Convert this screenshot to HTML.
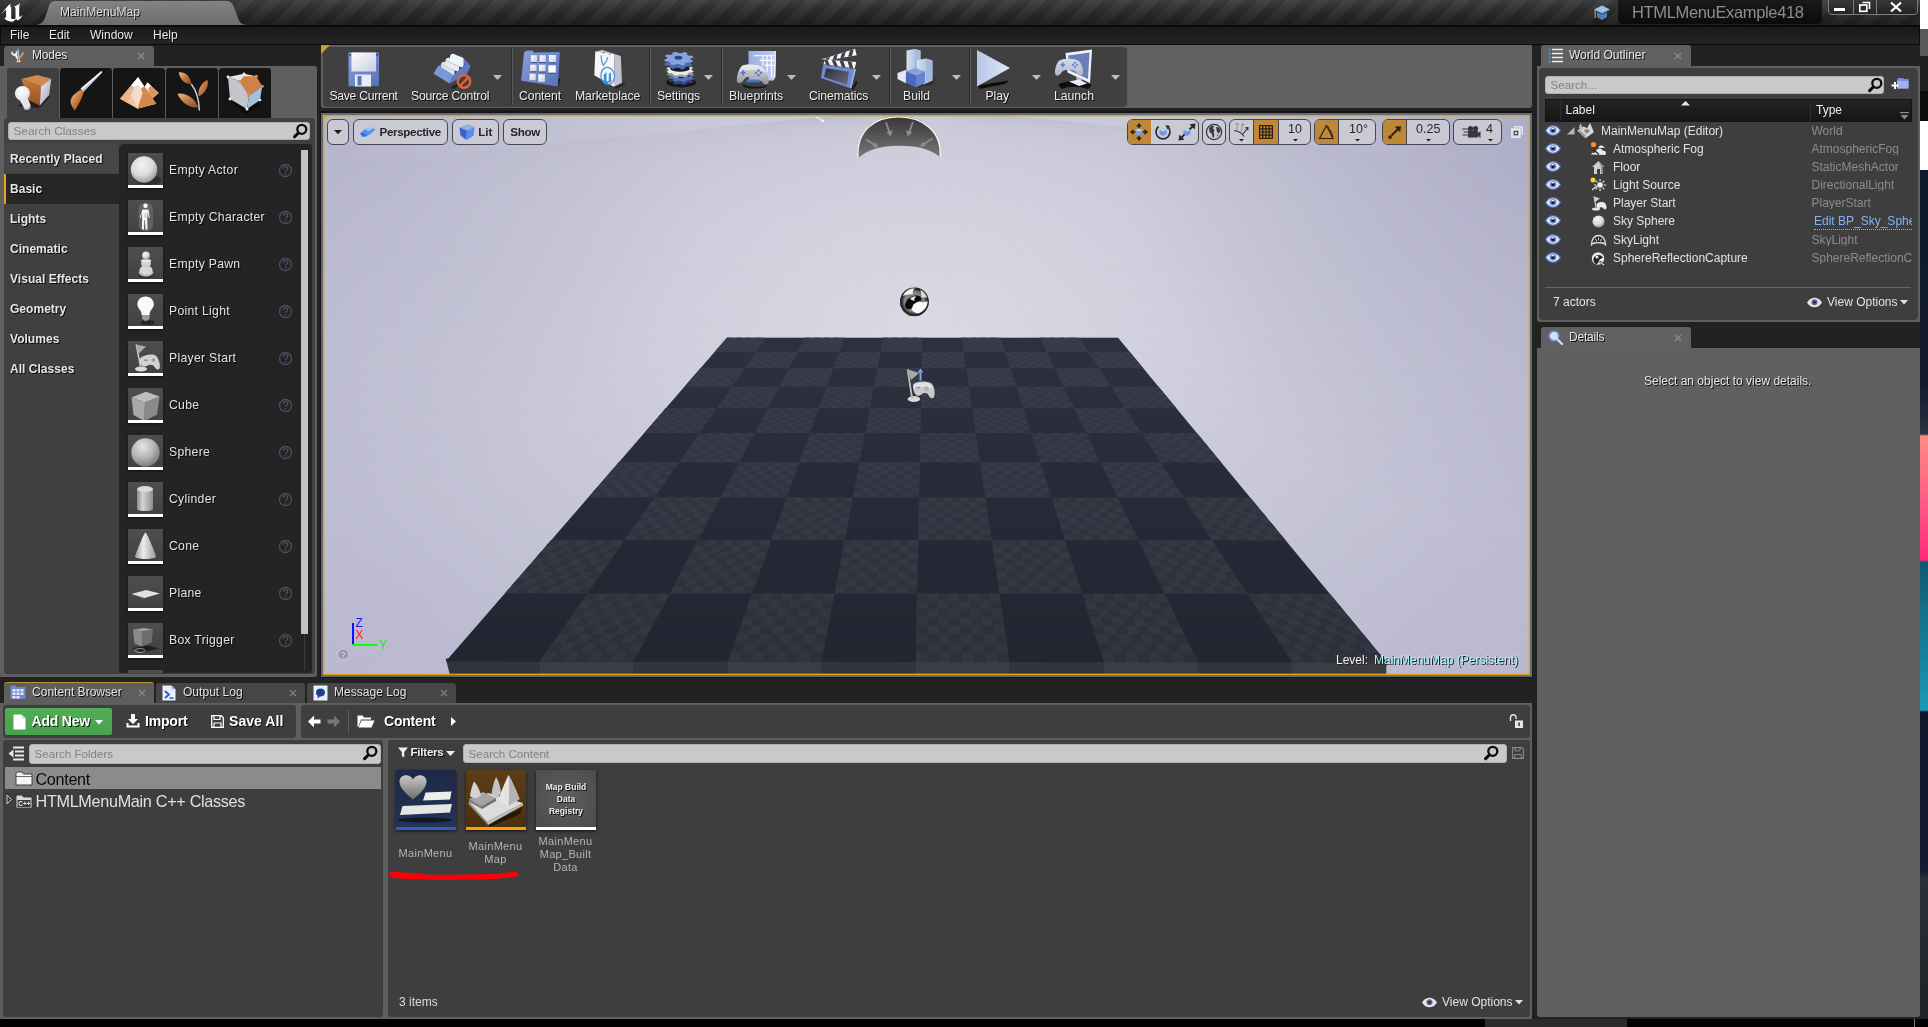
<!DOCTYPE html>
<html><head><meta charset="utf-8"><title>MainMenuMap - Unreal Editor</title>
<style>
*{box-sizing:border-box;margin:0;padding:0}
html,body{width:1928px;height:1027px;overflow:hidden;background:#000}
body{font-family:"Liberation Sans",sans-serif;font-size:12px;color:#e6e6e6;position:relative}
.a{position:absolute}
.t{position:absolute;white-space:nowrap;line-height:1}
.sh{text-shadow:1px 1px 0 rgba(0,0,0,.85)}
.b{font-weight:bold}
#win{will-change:transform;position:absolute;left:0;top:0;width:1920px;height:1019px;background:#222;overflow:hidden}
.tab{position:absolute;background:#5f5f5f;border-radius:3px 3px 0 0}
.tabi{position:absolute;background:#3c3c3c;border-radius:3px 3px 0 0}
.x{position:absolute;color:#8a8a8a;font-size:13px;line-height:1}
.srch{position:absolute;background:#c9c9c9;border-radius:3px;border:1px solid #b0b0b0}
.srch span{position:absolute;left:4.5px;top:1px;color:#818181;font-size:11.6px;line-height:14px;white-space:nowrap}
.eye{position:absolute}
</style></head><body>
<div id="win">
<!-- title bar -->
<div class="a" style="left:0;top:0;width:1920px;height:26px;background:repeating-linear-gradient(135deg,#2d2d2d 0,#2d2d2d 10px,#373737 10px,#373737 20px)"></div>
<div class="a" style="left:0;top:0;width:1920px;height:26px;background:linear-gradient(180deg,rgba(255,255,255,.07) 0,rgba(0,0,0,.05) 40%,rgba(0,0,0,.42) 100%)"></div>
<svg class="a" style="left:0;top:0" width="260" height="26" viewBox="0 0 260 26">
 <defs><linearGradient id="tg" x1="0" y1="0" x2="0" y2="1"><stop offset="0" stop-color="#838383"/><stop offset="1" stop-color="#6c6c6c"/></linearGradient></defs>
 <path d="M36 25 C42 24.500 44 21 46 15 L49 6 C50 2.500 52 1 56 1 L226 1 C230 1 232 2.500 233.500 6 L238 18 C239.500 22 241 24.500 247 25 Z" fill="url(#tg)"/>
 <!-- UE logo -->
 <g fill="#fff"><path d="M1 13.800C3.500 11.500 6.500 6.500 11 3.200 10.300 4.600 10 6 10.300 7 l.9-.5 V17.500c0 1.600 2.600 2.200 4.300 .9 V8.500 c0-1.300-.5-1.800-1.600-2.100 2.300-.6 4.200-1.500 6.300-3.400-.8 1.500-1 3-1 5 v8.200 c0 .7.700 .9 1.300 .4 l2-1.700 c-.9 2.300-2.600 4.300-4.800 5.500 l-1.700-1.300 -2.700 2.500 c-3.500 .3-7.500-1-8.800-3.200 l1.600-1.600 V10.800 c0-.8-.6-1-1.300-.6 C4 11.200 2.500 12.500 1 13.800z"/></g>
</svg>
<div class="t sh" style="left:60px;top:6px;font-size:12px;color:#dedede;letter-spacing:.05px">MainMenuMap</div>
<!-- project name -->
<div class="a" style="left:1618px;top:-4px;width:204px;height:28px;background:linear-gradient(180deg,#1b1b1b,#0b0b0b);border-radius:5px"></div>
<div class="t" style="left:1632px;top:3.5px;font-size:16.5px;color:#8e8e8e;letter-spacing:-.35px">HTMLMenuExample418</div>
<svg class="a" style="left:1592px;top:3px" width="20" height="18" viewBox="0 0 20 18"><path d="M2 6.5 L10 2.5 18 6.5 10 10.5Z" fill="#9fc3e8"/><path d="M5 9 v5 l5 3 5-3 v-5 l-5 2.5z" fill="#4f7fb8"/><path d="M10 10.5 L18 6.5 v1 L10 11.6 2 7.5v-1z" fill="#2f568a"/><rect x="2.6" y="7" width="1" height="8" fill="#e8a84a"/></svg>
<!-- window buttons -->
<div class="a" style="left:1828px;top:-3px;width:26px;height:18px;border:1px solid #7c7c7c;border-radius:0 0 0 4px;background:linear-gradient(180deg,#3a3a3a,#242424)"></div>
<div class="a" style="left:1853px;top:-3px;width:24px;height:18px;border:1px solid #7c7c7c;background:linear-gradient(180deg,#3a3a3a,#242424)"></div>
<div class="a" style="left:1876px;top:-3px;width:42px;height:18px;border:1px solid #7c7c7c;border-radius:0 0 4px 0;background:linear-gradient(180deg,#3a3a3a,#242424)"></div>
<div class="a" style="left:1834px;top:8px;width:11px;height:3px;background:#fff"></div>
<svg class="a" style="left:1858px;top:1px" width="14" height="12" viewBox="0 0 14 12"><path d="M4.5 1.5h7v6.5" fill="none" stroke="#fff" stroke-width="1.6"/><rect x="1.8" y="4" width="7" height="6.3" fill="none" stroke="#fff" stroke-width="1.7"/></svg>
<svg class="a" style="left:1889px;top:1px" width="14" height="12" viewBox="0 0 14 12"><path d="M2 1.5 L12 10.5 M12 1.5 L2 10.5" stroke="#fff" stroke-width="2.3"/></svg>
<!-- menu bar -->
<div class="a" style="left:0;top:25px;width:1920px;height:20px;background:#0a0a0a"></div>
<div class="a" style="left:1px;top:27px;width:1918px;height:17px;background:linear-gradient(180deg,#1a1a1a,#242424)"></div>
<div class="t sh" style="left:10px;top:29px;font-size:12px;color:#e8e8e8">File</div>
<div class="t sh" style="left:49px;top:29px;font-size:12px;color:#e8e8e8">Edit</div>
<div class="t sh" style="left:90px;top:29px;font-size:12px;color:#e8e8e8">Window</div>
<div class="t sh" style="left:153px;top:29px;font-size:12px;color:#e8e8e8">Help</div>
<!-- MODES PANEL -->
<div class="tab" style="left:4px;top:46px;width:150px;height:21px"></div>
<div class="a" style="left:0;top:66px;width:317px;height:611px;background:#5f5f5f;border-radius:0 3px 3px 0"></div>
<svg class="a" style="left:9px;top:47px" width="18" height="18" viewBox="0 0 18 18"><path d="M2 5.5c.5 2 2 3.5 4 3.5l4 6.5 1.6-1L8 8.5C9 6.500 8.500 4.500 7 3.500L6.500 6.500 4.500 7 3.500 4.500z" fill="#f2f2f2"/><path d="M15.500 6 L9.500 14.500 8 13.500 13.500 5z" fill="#d98a4a"/><path d="M9.500 1.500 L10.500 10 9 10 8.500 2z" fill="#9fc8ee"/><path d="M9.500 14.500 L8 13.500 7.500 15.500z" fill="#fff"/></svg>
<div class="t sh" style="left:32px;top:49px;font-size:12px;color:#e8e8e8;letter-spacing:-.2px">Modes</div>
<svg class="a" style="left:137px;top:52px" width="8" height="8" viewBox="0 0 8 8"><path d="M1 1l6 6M7 1l-6 6" stroke="#8f8f8f" stroke-width="1.1"/></svg>
<!-- mode buttons -->
<div class="a" style="left:7px;top:68px;width:52px;height:50px;background:#3f3f3f;border-radius:3px 3px 0 0"></div>
<div class="a" style="left:60px;top:68px;width:52px;height:50px;background:#151515;border-radius:3px 3px 0 0"></div>
<div class="a" style="left:113px;top:68px;width:52px;height:50px;background:#151515;border-radius:3px 3px 0 0"></div>
<div class="a" style="left:166px;top:68px;width:52px;height:50px;background:#151515;border-radius:3px 3px 0 0"></div>
<div class="a" style="left:219px;top:68px;width:52px;height:50px;background:#151515;border-radius:3px 3px 0 0"></div>
<svg class="a" style="left:7px;top:68px" width="52" height="50" viewBox="0 0 52 50"><defs><linearGradient id="mc1" x1="0" y1="0" x2="0" y2="1"><stop offset="0" stop-color="#c47a3c"/><stop offset="1" stop-color="#9a4f22"/></linearGradient><linearGradient id="mc2" x1="0" y1="0" x2="1" y2="1"><stop offset="0" stop-color="#f2eef2"/><stop offset="1" stop-color="#a89cb8"/></linearGradient><radialGradient id="mb" cx=".4" cy=".35" r=".7"><stop offset="0" stop-color="#fff"/><stop offset=".7" stop-color="#e8e8ea"/><stop offset="1" stop-color="#a8b4c0"/></radialGradient></defs>
<path d="M10 38l12-6 22-4-12 12z" fill="#1a1a1a" opacity=".8"/>
<path d="M14.200 11L30.200 7l14 3.800L34 18.200z" fill="#cf8a4c"/><path d="M14.200 11L34 18.200 32.800 37.600 21.500 32z" fill="url(#mc1)"/><path d="M34 18.200l10.200-7.400-2.100 16.200-9.300 10.600z" fill="url(#mc2)"/>
<circle cx="15.500" cy="25.500" r="7.600" fill="url(#mb)"/><path d="M12.500 31.500l7.500-3 3.500 8.500c.5 2-1 3.500-3 4s-3.500-.5-4-2z" fill="#e4e6ea"/><path d="M16.500 39.500c1.500 1.800 5.500 1 6.500-1.500l.5 1.500c-.5 2.500-5 3.500-6.500 1.500z" fill="#b4b8c0"/></svg>
<svg class="a" style="left:60px;top:68px" width="52" height="50" viewBox="0 0 52 50"><defs><linearGradient id="br1" x1="0" y1="0" x2="1" y2="1"><stop offset="0" stop-color="#f0c8a0"/><stop offset=".5" stop-color="#c47a3c"/><stop offset="1" stop-color="#8a4a20"/></linearGradient></defs><path d="M42.500 4l-1.300-.9L20.500 20.500l2.800 3.500z" fill="#f4f4f6"/><path d="M42.500 4L23.300 24l-1.400-1.700z" fill="#b8bcc8"/><path d="M21.200 21.400C15 24.500 10 29.500 10.600 34.500c.6 3.800 3.100 6.300 4.100 8.100 2.800-4.300 6.500-10.600 9-18.100z" fill="url(#br1)"/></svg>
<svg class="a" style="left:113px;top:68px" width="52" height="50" viewBox="0 0 52 50"><path d="M34.500 14.500L27 26l10 6.500 8.800-7.400z" fill="#f4dcc8"/><path d="M34.500 14.500l11.300 10.600-8.800 7.400z" fill="#d89a60"/><path d="M34.500 14.500l-3.300 5 3.300 1.500 3.500-3z" fill="#fff"/><path d="M25.100 9.200L7 30.800l17.500 10 18.800-5z" fill="#f0c4a0"/><path d="M25.100 9.200l-.6 31.600 18.800-5z" fill="#cf8a4c"/><path d="M25.100 9.200L7 30.800l7 4z" fill="#e8b48c"/><path d="M25.100 9.200l4.400 16-5 15.600-6-13z" fill="#f6dcc8"/><path d="M25.100 9.200l-6.800 8.100 3.500 2.200 3-2 3 3 3.300-2z" fill="#fff"/><path d="M21.800 19.500l3-2 3 3" fill="none" stroke="#a8c8e8" stroke-width=".8"/></svg>
<svg class="a" style="left:166px;top:68px" width="52" height="50" viewBox="0 0 52 50"><defs><linearGradient id="lf" x1="0" y1="0" x2="1" y2="1"><stop offset="0" stop-color="#e8b890"/><stop offset=".5" stop-color="#c07840"/><stop offset="1" stop-color="#8a4820"/></linearGradient></defs><path d="M33.400 42.600C33 32 30 22 25.200 16" fill="none" stroke="#c8ccd4" stroke-width="1.500"/><path d="M12.700 4.500c6-1 12 4 12.500 11.500-6 .5-11-4-12.500-11.500z" fill="url(#lf)"/><path d="M41.500 12c1.500 6-2 13.500-8.700 16.200-1.500-6 2-13 8.700-16.200z" fill="url(#lf)"/><path d="M11.500 25.700c8-1.500 17 4 21.200 13.800-8 1-17.500-4.500-21.200-13.800z" fill="url(#lf)"/></svg>
<svg class="a" style="left:219px;top:68px" width="52" height="50" viewBox="0 0 52 50"><path d="M12 33l16 9 14-9-2 5-13 8z" fill="#0a0a0a"/><path d="M9 9l16-3.200 12.300 2.500L21 13.300z" fill="#e6e6ea"/><path d="M9 9l12 4.300L30 27.400 28 41 11 31z" fill="#c4c4ca"/><path d="M30 27.400L43.200 18.300 41 32 28 41z" fill="#a4c0dc"/><path d="M24.900 8.300h12.400l5.900 10L29.900 27.400 20.700 13.300z" fill="#cf8246"/><g fill="#f4f4f4"><circle cx="9" cy="9" r="1.400"/><circle cx="25" cy="5.800" r="1.300"/><circle cx="11" cy="31" r="1.400"/><circle cx="28" cy="41" r="1.500"/><circle cx="41" cy="32" r="1.300"/></g><g fill="#d8905a"><circle cx="37.300" cy="8.300" r="1.500"/><circle cx="43.200" cy="18.300" r="1.500"/><circle cx="29.900" cy="27.400" r="1.600"/><circle cx="20.700" cy="13.300" r="1.500"/></g></svg>
<!-- inner panel -->
<div class="a" style="left:4px;top:118px;width:311px;height:556px;background:#404040;border-radius:3px"></div>
<div class="srch" style="left:8px;top:122px;width:302px;height:18px"><span style="left:4.500px;top:1px;font-size:11.800px">Search Classes</span></div>
<svg class="a" style="left:292px;top:123px" width="17" height="16" viewBox="0 0 17 16"><circle cx="9.800" cy="6.300" r="4.500" fill="none" stroke="#0c0c0c" stroke-width="2.300"/><path d="M6.300 10L2.600 13.600" stroke="#0c0c0c" stroke-width="3.100" stroke-linecap="round"/></svg>
<!-- categories -->
<div class="a" style="left:4px;top:143px;width:115px;height:30px;background:#464646"></div>
<div class="a" style="left:4px;top:174px;width:115px;height:30px;background:#262626"></div>
<div class="a" style="left:4px;top:174px;width:2px;height:30px;background:#e8a21c"></div>
<div class="t b sh" style="left:10px;top:153px;font-size:12px;letter-spacing:.03px">Recently Placed</div>
<div class="t b sh" style="left:10px;top:183px;font-size:12px;letter-spacing:.03px">Basic</div>
<div class="t b sh" style="left:10px;top:213px;font-size:12px;letter-spacing:.03px">Lights</div>
<div class="t b sh" style="left:10px;top:243px;font-size:12px;letter-spacing:.03px">Cinematic</div>
<div class="t b sh" style="left:10px;top:273px;font-size:12px;letter-spacing:.03px">Visual Effects</div>
<div class="t b sh" style="left:10px;top:303px;font-size:12px;letter-spacing:.03px">Geometry</div>
<div class="t b sh" style="left:10px;top:333px;font-size:12px;letter-spacing:.03px">Volumes</div>
<div class="t b sh" style="left:10px;top:363px;font-size:12px;letter-spacing:.03px">All Classes</div>
<svg width="0" height="0" style="position:absolute"><defs>
<radialGradient id="gS1" cx=".42" cy=".32" r=".75"><stop offset="0" stop-color="#f4f4f4"/><stop offset=".55" stop-color="#d9d9d9"/><stop offset="1" stop-color="#8c8c8c"/></radialGradient>
<radialGradient id="gS2" cx=".4" cy=".3" r=".8"><stop offset="0" stop-color="#e6e6e6"/><stop offset=".5" stop-color="#b4b4b4"/><stop offset="1" stop-color="#6a6a6a"/></radialGradient>
<linearGradient id="gTh" x1="0" y1="0" x2="0" y2="1"><stop offset="0" stop-color="#4e4e4e"/><stop offset="1" stop-color="#404040"/></linearGradient>
<linearGradient id="gCy" x1="0" y1="0" x2="1" y2="0"><stop offset="0" stop-color="#8a8a8a"/><stop offset=".35" stop-color="#d4d4d4"/><stop offset="1" stop-color="#8e8e8e"/></linearGradient>
<linearGradient id="gCo" x1="0" y1="0" x2="1" y2="0"><stop offset="0" stop-color="#a0a0a0"/><stop offset=".4" stop-color="#ececec"/><stop offset="1" stop-color="#9a9a9a"/></linearGradient>
</defs></svg>
<div class="a" style="left:119px;top:144px;width:193px;height:529px;background:#242424;border-radius:5px 3px 3px 0;overflow:hidden">
<svg class="a" style="left:9px;top:9px;box-shadow:0 1px 2px rgba(0,0,0,.6)" width="35" height="35" viewBox="0 0 35 35"><rect width="35" height="35" fill="url(#gTh)"/><ellipse cx="20" cy="27" rx="13" ry="5" fill="#2e2e2e"/><circle cx="16" cy="16.500" r="13.200" fill="url(#gS1)"/><rect y="32" width="35" height="3" fill="#fff"/></svg>
<div class="t sh" style="left:50px;top:20px;font-size:12.2px;color:#e4e4e4;letter-spacing:.3px">Empty Actor</div>
<svg class="a" style="left:159px;top:19px" width="15" height="15" viewBox="0 0 15 15"><circle cx="7.500" cy="7.500" r="6" fill="none" stroke="#46505f" stroke-width="1.300"/><path d="M5.300 6c0-1.500 1-2.300 2.200-2.300s2.200.8 2.200 2c0 1.500-2.100 1.600-2.100 3.300" fill="none" stroke="#46505f" stroke-width="1.300"/><circle cx="7.600" cy="10.800" r=".85" fill="#46505f"/></svg>
<svg class="a" style="left:9px;top:56px;box-shadow:0 1px 2px rgba(0,0,0,.6)" width="35" height="35" viewBox="0 0 35 35"><rect width="35" height="35" fill="url(#gTh)"/><rect x="10.500" y="2.500" width="14.500" height="29" rx="7" fill="#6a6a6a" opacity=".75"/><circle cx="17.500" cy="5.800" r="2.200" fill="#fff"/><path d="M14.500 9.500h6l1.200 8-1 .3-.9-5.500-.5 6 .2 11.200h-2l-.5-9.500h-.6l-.5 9.500h-2l.2-11.200-.5-6-.9 5.500-1-.3z" fill="#f4f4f4"/><path d="M16.500 13h2v5h-2z" fill="#cfcfcf"/><rect y="32" width="35" height="3" fill="#fff"/></svg>
<div class="t sh" style="left:50px;top:67px;font-size:12.2px;color:#e4e4e4;letter-spacing:.3px">Empty Character</div>
<svg class="a" style="left:159px;top:66px" width="15" height="15" viewBox="0 0 15 15"><circle cx="7.500" cy="7.500" r="6" fill="none" stroke="#46505f" stroke-width="1.300"/><path d="M5.300 6c0-1.500 1-2.300 2.200-2.300s2.200.8 2.200 2c0 1.500-2.100 1.600-2.100 3.300" fill="none" stroke="#46505f" stroke-width="1.300"/><circle cx="7.600" cy="10.800" r=".85" fill="#46505f"/></svg>
<svg class="a" style="left:9px;top:103px;box-shadow:0 1px 2px rgba(0,0,0,.6)" width="35" height="35" viewBox="0 0 35 35"><rect width="35" height="35" fill="url(#gTh)"/><ellipse cx="18" cy="28.500" rx="8" ry="3" fill="#333"/><ellipse cx="18" cy="25.500" rx="7.200" ry="4" fill="#bdbdbd"/><ellipse cx="18" cy="23" rx="6.500" ry="4.500" fill="#d8d8d8"/><ellipse cx="18" cy="16.500" rx="5" ry="3.800" fill="#cfcfcf"/><ellipse cx="18" cy="13.800" rx="5.200" ry="1.800" fill="#e6e6e6"/><circle cx="18" cy="8.500" r="3.900" fill="url(#gS1)"/><rect y="32" width="35" height="3" fill="#fff"/></svg>
<div class="t sh" style="left:50px;top:114px;font-size:12.2px;color:#e4e4e4;letter-spacing:.3px">Empty Pawn</div>
<svg class="a" style="left:159px;top:113px" width="15" height="15" viewBox="0 0 15 15"><circle cx="7.500" cy="7.500" r="6" fill="none" stroke="#46505f" stroke-width="1.300"/><path d="M5.300 6c0-1.500 1-2.300 2.200-2.300s2.200.8 2.200 2c0 1.500-2.100 1.600-2.100 3.300" fill="none" stroke="#46505f" stroke-width="1.300"/><circle cx="7.600" cy="10.800" r=".85" fill="#46505f"/></svg>
<svg class="a" style="left:9px;top:150px;box-shadow:0 1px 2px rgba(0,0,0,.6)" width="35" height="35" viewBox="0 0 35 35"><rect width="35" height="35" fill="url(#gTh)"/><ellipse cx="19.500" cy="28.500" rx="7" ry="2.300" fill="#222"/><path d="M17.500 2.500c5 0 8.300 3.600 8.300 7.800 0 3.600-2.700 5.200-3.700 7.700-.5 1.300-.5 2.300-.5 3h-8c0-.7 0-1.700-.5-3-1-2.500-3.700-4.100-3.700-7.700 0-4.200 3.300-7.800 8.100-7.800z" fill="#fafafa"/><path d="M14 21h7.500v3.500l-1.500 1.500h-4.500L14 24.500z" fill="#9a9a9a"/><path d="M16 26h3.500v1.200H16z" fill="#777"/><rect y="32" width="35" height="3" fill="#fff"/></svg>
<div class="t sh" style="left:50px;top:161px;font-size:12.2px;color:#e4e4e4;letter-spacing:.3px">Point Light</div>
<svg class="a" style="left:159px;top:160px" width="15" height="15" viewBox="0 0 15 15"><circle cx="7.500" cy="7.500" r="6" fill="none" stroke="#46505f" stroke-width="1.300"/><path d="M5.300 6c0-1.500 1-2.300 2.200-2.300s2.200.8 2.200 2c0 1.500-2.100 1.600-2.100 3.300" fill="none" stroke="#46505f" stroke-width="1.300"/><circle cx="7.600" cy="10.800" r=".85" fill="#46505f"/></svg>
<svg class="a" style="left:9px;top:197px;box-shadow:0 1px 2px rgba(0,0,0,.6)" width="35" height="35" viewBox="0 0 35 35"><rect width="35" height="35" fill="url(#gTh)"/><ellipse cx="13" cy="28" rx="6" ry="2.500" fill="#dcdcdc"/><path d="M7.500 3.500 L9 3.200 13.500 27 12 27.300z" fill="#c8c8c8"/><path d="M8 3.500 L18 5.500 10.500 13z" fill="#a8a8a8"/><path d="M12.500 17c3-3 12-4.500 15-2.500 3 2 5.500 10 4 13-1 2-3.500 1-5-1.500-1-2-3-2.500-5.500-2-2 .4-3 2-5.500 1.500-3-.6-5-6-3-8.500z" fill="#d2d2d2"/><circle cx="25.500" cy="19" r="1.800" fill="#9a9a9a"/><path d="M16 18.500h4v1.300h-4z" fill="#8a8a8a"/><rect y="32" width="35" height="3" fill="#fff"/></svg>
<div class="t sh" style="left:50px;top:208px;font-size:12.2px;color:#e4e4e4;letter-spacing:.3px">Player Start</div>
<svg class="a" style="left:159px;top:207px" width="15" height="15" viewBox="0 0 15 15"><circle cx="7.500" cy="7.500" r="6" fill="none" stroke="#46505f" stroke-width="1.300"/><path d="M5.300 6c0-1.500 1-2.300 2.200-2.300s2.200.8 2.200 2c0 1.500-2.100 1.600-2.100 3.300" fill="none" stroke="#46505f" stroke-width="1.300"/><circle cx="7.600" cy="10.800" r=".85" fill="#46505f"/></svg>
<svg class="a" style="left:9px;top:244px;box-shadow:0 1px 2px rgba(0,0,0,.6)" width="35" height="35" viewBox="0 0 35 35"><rect width="35" height="35" fill="url(#gTh)"/><path d="M3.500 9.500 L18 3.800 31.500 8.500 17 14.500z" fill="#bdbdbd"/><path d="M3.500 9.500 L17 14.500 16.500 33 5.500 27z" fill="#a8a8a8"/><path d="M17 14.500 L31.500 8.500 29 26.500 16.500 33z" fill="#8a8a8a"/><rect y="32" width="35" height="3" fill="#fff"/></svg>
<div class="t sh" style="left:50px;top:255px;font-size:12.2px;color:#e4e4e4;letter-spacing:.3px">Cube</div>
<svg class="a" style="left:159px;top:254px" width="15" height="15" viewBox="0 0 15 15"><circle cx="7.500" cy="7.500" r="6" fill="none" stroke="#46505f" stroke-width="1.300"/><path d="M5.300 6c0-1.500 1-2.300 2.200-2.300s2.200.8 2.200 2c0 1.500-2.100 1.600-2.100 3.300" fill="none" stroke="#46505f" stroke-width="1.300"/><circle cx="7.600" cy="10.800" r=".85" fill="#46505f"/></svg>
<svg class="a" style="left:9px;top:291px;box-shadow:0 1px 2px rgba(0,0,0,.6)" width="35" height="35" viewBox="0 0 35 35"><rect width="35" height="35" fill="url(#gTh)"/><circle cx="17.500" cy="17.500" r="14.200" fill="url(#gS2)"/><rect y="32" width="35" height="3" fill="#fff"/></svg>
<div class="t sh" style="left:50px;top:302px;font-size:12.2px;color:#e4e4e4;letter-spacing:.3px">Sphere</div>
<svg class="a" style="left:159px;top:301px" width="15" height="15" viewBox="0 0 15 15"><circle cx="7.500" cy="7.500" r="6" fill="none" stroke="#46505f" stroke-width="1.300"/><path d="M5.300 6c0-1.500 1-2.300 2.200-2.300s2.200.8 2.200 2c0 1.500-2.100 1.600-2.100 3.300" fill="none" stroke="#46505f" stroke-width="1.300"/><circle cx="7.600" cy="10.800" r=".85" fill="#46505f"/></svg>
<svg class="a" style="left:9px;top:338px;box-shadow:0 1px 2px rgba(0,0,0,.6)" width="35" height="35" viewBox="0 0 35 35"><rect width="35" height="35" fill="url(#gTh)"/><path d="M9 7v20c0 2.800 16 2.800 16 0V7z" fill="url(#gCy)"/><ellipse cx="17" cy="7" rx="8" ry="3" fill="#dadada"/><rect y="32" width="35" height="3" fill="#fff"/></svg>
<div class="t sh" style="left:50px;top:349px;font-size:12.2px;color:#e4e4e4;letter-spacing:.3px">Cylinder</div>
<svg class="a" style="left:159px;top:348px" width="15" height="15" viewBox="0 0 15 15"><circle cx="7.500" cy="7.500" r="6" fill="none" stroke="#46505f" stroke-width="1.300"/><path d="M5.300 6c0-1.500 1-2.300 2.200-2.300s2.200.8 2.200 2c0 1.500-2.100 1.600-2.100 3.300" fill="none" stroke="#46505f" stroke-width="1.300"/><circle cx="7.600" cy="10.800" r=".85" fill="#46505f"/></svg>
<svg class="a" style="left:9px;top:385px;box-shadow:0 1px 2px rgba(0,0,0,.6)" width="35" height="35" viewBox="0 0 35 35"><rect width="35" height="35" fill="url(#gTh)"/><path d="M17.500 3.500C16 3.500 8 24 7 27.500c0 3.300 21 3.300 21 0C27 24 19 3.500 17.500 3.500z" fill="url(#gCo)"/><rect y="32" width="35" height="3" fill="#fff"/></svg>
<div class="t sh" style="left:50px;top:396px;font-size:12.2px;color:#e4e4e4;letter-spacing:.3px">Cone</div>
<svg class="a" style="left:159px;top:395px" width="15" height="15" viewBox="0 0 15 15"><circle cx="7.500" cy="7.500" r="6" fill="none" stroke="#46505f" stroke-width="1.300"/><path d="M5.300 6c0-1.500 1-2.300 2.200-2.300s2.200.8 2.200 2c0 1.500-2.100 1.600-2.100 3.300" fill="none" stroke="#46505f" stroke-width="1.300"/><circle cx="7.600" cy="10.800" r=".85" fill="#46505f"/></svg>
<svg class="a" style="left:9px;top:432px;box-shadow:0 1px 2px rgba(0,0,0,.6)" width="35" height="35" viewBox="0 0 35 35"><rect width="35" height="35" fill="url(#gTh)"/><path d="M3.500 18 L18 14 32 17.500 16.500 22z" fill="#e2e2e2"/><path d="M3.500 18 L16.500 22 16.500 22.800z" fill="#999"/><rect y="32" width="35" height="3" fill="#fff"/></svg>
<div class="t sh" style="left:50px;top:443px;font-size:12.2px;color:#e4e4e4;letter-spacing:.3px">Plane</div>
<svg class="a" style="left:159px;top:442px" width="15" height="15" viewBox="0 0 15 15"><circle cx="7.500" cy="7.500" r="6" fill="none" stroke="#46505f" stroke-width="1.300"/><path d="M5.300 6c0-1.500 1-2.300 2.200-2.300s2.200.8 2.200 2c0 1.500-2.100 1.600-2.100 3.300" fill="none" stroke="#46505f" stroke-width="1.300"/><circle cx="7.600" cy="10.800" r=".85" fill="#46505f"/></svg>
<svg class="a" style="left:9px;top:479px;box-shadow:0 1px 2px rgba(0,0,0,.6)" width="35" height="35" viewBox="0 0 35 35"><rect width="35" height="35" fill="url(#gTh)"/><path d="M4.500 25 L20 22.500 31 25.500 14 29.500z" fill="#1e1e1e"/><ellipse cx="12" cy="27.500" rx="5" ry="2" fill="none" stroke="#aaa" stroke-width=".8"/><path d="M5 6.500 L16 5 25 6.500 14 8.500z" fill="#a2a2a2"/><path d="M5 6.500 L14 8.500 14 23.500 6.500 20.500z" fill="#8a8a8a"/><path d="M14 8.500 L25 6.500 23.500 19.500 14 23.500z" fill="#6e6e6e"/><rect y="32" width="35" height="3" fill="#fff"/></svg>
<div class="t sh" style="left:50px;top:490px;font-size:12.2px;color:#e4e4e4;letter-spacing:.3px">Box Trigger</div>
<svg class="a" style="left:159px;top:489px" width="15" height="15" viewBox="0 0 15 15"><circle cx="7.500" cy="7.500" r="6" fill="none" stroke="#46505f" stroke-width="1.300"/><path d="M5.300 6c0-1.500 1-2.300 2.200-2.300s2.200.8 2.200 2c0 1.500-2.100 1.600-2.100 3.300" fill="none" stroke="#46505f" stroke-width="1.300"/><circle cx="7.600" cy="10.800" r=".85" fill="#46505f"/></svg>
<svg class="a" style="left:9px;top:526px;box-shadow:0 1px 2px rgba(0,0,0,.6)" width="35" height="35" viewBox="0 0 35 35"><rect width="35" height="35" fill="url(#gTh)"/><rect y="32" width="35" height="3" fill="#fff"/></svg>
<div class="a" style="left:182px;top:6px;width:7px;height:484px;background:#c2c2c2"></div>
<div class="a" style="left:185px;top:490px;width:1px;height:36px;background:#3c3c3c"></div>
</div>
<!-- TOOLBAR -->
<div class="a" style="left:320px;top:44px;width:1213px;height:2px;background:#0c0c0c"></div>
<div class="a" style="left:321px;top:45px;width:1211px;height:63px;background:#616161;border-radius:0 0 3px 3px"></div>
<div class="a" style="left:323px;top:47px;width:804px;height:59px;background:#404040;border-radius:4px;box-shadow:0 1px 1px rgba(0,0,0,.35)"></div>
<svg class="a" style="left:321px;top:45px" width="9" height="9"><path d="M0 0h9L0 9z" fill="#c9a227"/></svg>
<svg width="0" height="0" style="position:absolute"><defs>
<linearGradient id="bl1" x1="0" y1="0" x2="1" y2="1"><stop offset="0" stop-color="#8aa0dc"/><stop offset="1" stop-color="#5670b8"/></linearGradient>
<linearGradient id="bl2" x1="0" y1="0" x2="0" y2="1"><stop offset="0" stop-color="#7f97d6"/><stop offset="1" stop-color="#4d68b0"/></linearGradient>
<linearGradient id="wh1" x1="0" y1="0" x2="1" y2="1"><stop offset="0" stop-color="#ffffff"/><stop offset="1" stop-color="#c9cde0"/></linearGradient>
<linearGradient id="pl1" x1="0" y1="0" x2="1" y2="0"><stop offset="0" stop-color="#b9c3e6"/><stop offset="1" stop-color="#dfeaf6"/></linearGradient>
<linearGradient id="pg1" x1="0" y1="0" x2="1" y2="0"><stop offset="0" stop-color="#9cace2"/><stop offset="1" stop-color="#c2cef2"/></linearGradient><linearGradient id="gy1" x1="0" y1="0" x2="0" y2="1"><stop offset="0" stop-color="#e4e4e6"/><stop offset="1" stop-color="#8f9096"/></linearGradient>
<linearGradient id="scr" x1="0" y1="0" x2="1" y2="1"><stop offset="0" stop-color="#2c2e38"/><stop offset="1" stop-color="#6a6e80"/></linearGradient>
<linearGradient id="twr" x1="0" y1="0" x2="1" y2="0"><stop offset="0" stop-color="#d6e2f2"/><stop offset="1" stop-color="#9fb0d4"/></linearGradient>
</defs></svg>
<svg class="a" style="left:342px;top:48px" width="44" height="44" viewBox="0 0 44 44"><path d="M30 38 L38 33 36 36 31 40z" fill="#222" opacity=".6"/><path d="M6.500 4.500 h29.500 l1 1 v32 l-1 .8 h-28.500 l-1-1z" fill="url(#bl1)"/><path d="M9.500 4.500 h24.500 v19 h-24.500z" fill="url(#wh1)"/><path d="M13 26.500 h16 v12 h-16z" fill="#e8ebf4"/><path d="M15.500 28 h4 v9.500 h-4z" fill="#5a74bc"/><rect x="7.400" y="6" width="1.300" height="1.600" fill="#223"/><rect x="34.600" y="6" width="1.300" height="1.600" fill="#223"/></svg>
<div class="t sh" style="left:329.5px;top:90px;font-size:12.200px;letter-spacing:-0.3px;color:#ececec" id="tb_save">Save Current</div>
<svg class="a" style="left:430px;top:48px" width="44" height="44" viewBox="0 0 44 44"><path d="M8 32 L21 39 36 31 24 41z" fill="#151515" opacity=".7"/><path d="M30.500 7.500l7 6.500-3 2.500z" fill="#6d88cc"/><path d="M8.500 17.500l21-10 8 6.500-17 11.500z" fill="#5a72b4"/><path d="M11 16.500c.3-2 2-3.300 4-2.500l9.500 4.200v10l-13.500-6z" fill="#dde4e8"/><path d="M15.500 12.500c.3-2 2-3.300 4-2.500l9.500 4.200v10l-13.500-6z" fill="#e6ecef"/><path d="M20 8.500c.3-2 2-3.300 4-2.500l9.500 4.200v10l-13.500-6z" fill="#eff4f6"/><path d="M11 16.500l13.500 6M15.500 12.500l13.500 6" stroke="#aab4c0" stroke-width=".6" fill="none"/><path d="M8.500 17.500L3.500 25.500 19.500 35.500 23.500 27z" fill="#7c96d8"/><path d="M23.500 27L19.500 35.500 36.500 26.500 40.500 18.500 37.500 14z" fill="#5f7ac0"/><circle cx="34" cy="33.500" r="6.200" fill="none" stroke="#e2623c" stroke-width="2.400"/><path d="M29.800 37.800 L38.300 29.300" stroke="#e2623c" stroke-width="2.400"/></svg>
<div class="t sh" style="left:411px;top:90px;font-size:12.200px;letter-spacing:-0.22px;color:#ececec" id="tb_source">Source Control</div>
<svg class="a" style="left:493px;top:75px" width="9" height="5"><path d="M0 0h9L4.500 5z" fill="#bdbdbd"/></svg>
<svg class="a" style="left:518px;top:48px" width="44" height="44" viewBox="0 0 44 44"><path d="M40 30l2.500 1-2.500 8z" fill="#101010" opacity=".8"/><path d="M6 4.800l1.900-2.100 6.800-.3.700 2.100 26.400-.6-1.900 34.500-36.700-5.600z" fill="url(#bl1)"/><g fill="url(#wh1)"><path d="M12.900 7.300h6.200v6.600h-6.200z"/><path d="M21.600 7.300h6.200v6.800h-6.200z"/><path d="M30.900 7h7.200v7.200h-7.200z"/><path d="M12.200 16.700h6.300v6.500h-6.300z"/><path d="M21 16.700h6.500v6.800h-6.500z"/><path d="M30.300 17.300h7.500v7.500h-7.500z" fill="#fbfbfd"/><path d="M11.600 25.700h6.200v6.500h-6.200z"/><path d="M20.300 26.300h6.600v7.500h-6.600z"/></g><g fill="#2a3c74" opacity=".7"><path d="M12.900 13.900h6.200v1h-6.200zM21.600 14.100h6.200v1h-6.200zM30.900 14.200h7.200v1h-7.200zM12.200 23.200h6.300v1h-6.300zM21 23.500h6.500v1h-6.500zM30.300 24.800h7.500v1h-7.500z"/></g></svg>
<div class="t sh" style="left:519px;top:90px;font-size:12.200px;letter-spacing:-0.1px;color:#ececec" id="tb_content">Content</div>
<svg class="a" style="left:586px;top:48px" width="44" height="44" viewBox="0 0 44 44"><path d="M28 39l9-4 3 1-10 5z" fill="#151515" opacity=".6"/><path d="M9.300 3.600L16.100 2 34.800 8 28.600 6.100z" fill="#c8c8d0"/><path d="M9.300 3.600L28.600 6.100 27.900 38.800 8.300 27.200z" fill="#f6f6f8"/><path d="M28.600 6.100l6.200 1.900L36 34.700l-8.100 4.100z" fill="#c4c0cc"/><path d="M15.200 7.300c0 5 1 8.500 2.200 10 1.800-2 3.600-5 4.600-8.100" fill="none" stroke="#3c8fd6" stroke-width="1.100"/><circle cx="17.800" cy="5" r=".7" fill="#3c8fd6"/><circle cx="24" cy="6.300" r=".7" fill="#3c8fd6"/><ellipse cx="21.700" cy="27.900" rx="6.800" ry="8.600" fill="none" stroke="#3c95dc" stroke-width="1.300" transform="rotate(-8 21.700 27.900)"/><path d="M17 27.500c1.200-.8 2.400-2.400 3.600-3.400v8.300c0 1 1.400 1.200 2.200.4v-7c.8-.3 1.700-1 2.300-1.900v8.400l1.200-.8c-.6 1.700-1.500 2.800-2.600 3.400l-1-1-1.500 1.500c-1.700.6-3.300-.4-3.400-1.900v-5.500z" fill="#3c95dc"/></svg>
<div class="t sh" style="left:575px;top:90px;font-size:12.200px;letter-spacing:-0.12px;color:#ececec" id="tb_market">Marketplace</div>
<svg class="a" style="left:657px;top:48px" width="44" height="44" viewBox="0 0 44 44"><ellipse cx="24" cy="34.500" rx="15" ry="5" fill="#101010" opacity=".85"/><path d="M34.5 32.8L36.5 33.6L34.6 34.9L32.0 34.6L29.4 35.4L29.5 36.5L25.9 36.9L24.6 35.9L21.4 35.7L19.5 36.5L16.4 35.8L17.2 34.7L15.2 33.6L12.5 33.6L11.6 32.1L14.0 31.6L14.5 30.2L12.5 29.4L14.4 28.1L17.0 28.4L19.6 27.6L19.5 26.5L23.1 26.1L24.4 27.1L27.6 27.3L29.5 26.5L32.6 27.2L31.8 28.3L33.8 29.4L36.5 29.4L37.4 30.9L35.0 31.4Z" fill="#2f4680"/><path d="M34.5 29.8L36.5 30.6L34.6 31.9L32.0 31.6L29.4 32.4L29.5 33.5L25.9 33.9L24.6 32.9L21.4 32.7L19.5 33.5L16.4 32.8L17.2 31.7L15.2 30.6L12.5 30.6L11.6 29.1L14.0 28.6L14.5 27.2L12.5 26.4L14.4 25.1L17.0 25.4L19.6 24.6L19.5 23.5L23.1 23.1L24.4 24.1L27.6 24.3L29.5 23.5L32.6 24.2L31.8 25.3L33.8 26.4L36.5 26.4L37.4 27.9L35.0 28.4Z" fill="#5674bc"/><ellipse cx="24.500" cy="27" rx="9" ry="3" fill="#16181c"/><path d="M34.4 25.0L36.7 25.6L35.4 27.1L32.7 27.0L30.3 28.1L30.8 29.1L27.2 29.8L25.4 29.0L21.9 29.1L20.3 30.0L16.6 29.5L16.8 28.4L14.1 27.4L11.4 27.6L9.7 26.2L11.8 25.5L11.6 24.0L9.3 23.4L10.6 21.9L13.3 22.0L15.7 20.9L15.2 19.9L18.8 19.2L20.6 20.0L24.1 19.9L25.7 19.0L29.4 19.5L29.2 20.6L31.9 21.6L34.6 21.4L36.3 22.8L34.2 23.5Z" fill="#9a9ca4"/><path d="M34.4 22.5L36.7 23.1L35.4 24.6L32.7 24.5L30.3 25.6L30.8 26.6L27.2 27.3L25.4 26.5L21.9 26.6L20.3 27.5L16.6 27.0L16.8 25.9L14.1 24.9L11.4 25.1L9.7 23.7L11.8 23.0L11.6 21.5L9.3 20.9L10.6 19.4L13.3 19.5L15.7 18.4L15.2 17.4L18.8 16.7L20.6 17.5L24.1 17.4L25.7 16.5L29.4 17.0L29.2 18.1L31.9 19.1L34.6 18.9L36.3 20.3L34.2 21.0Z" fill="#ecedf0"/><ellipse cx="23" cy="20.500" rx="10" ry="3.200" fill="#1c1e24"/><path d="M33.4 15.9L35.9 16.8L33.9 18.5L30.8 18.1L27.9 19.2L28.2 20.7L24.2 21.3L22.6 20.0L18.8 19.8L16.7 21.0L13.0 20.1L13.9 18.6L11.5 17.3L8.2 17.4L7.0 15.6L9.8 14.9L10.2 13.1L7.7 12.2L9.7 10.5L12.8 10.9L15.7 9.8L15.4 8.3L19.4 7.7L21.0 9.0L24.8 9.2L26.9 8.0L30.6 8.9L29.7 10.4L32.1 11.7L35.4 11.6L36.6 13.4L33.8 14.1Z" fill="#4f6cb4"/><path d="M33.4 12.0L35.9 12.9L33.9 14.6L30.8 14.2L27.9 15.3L28.2 16.8L24.2 17.4L22.6 16.1L18.8 15.9L16.7 17.1L13.0 16.2L13.9 14.7L11.5 13.4L8.2 13.5L7.0 11.7L9.8 11.0L10.2 9.2L7.7 8.3L9.7 6.6L12.8 7.0L15.7 5.9L15.4 4.4L19.4 3.8L21.0 5.1L24.8 5.3L26.9 4.1L30.6 5.0L29.7 6.5L32.1 7.8L35.4 7.7L36.6 9.5L33.8 10.2Z" fill="#86a2e0"/><ellipse cx="21.400" cy="9.700" rx="3.900" ry="1.900" fill="#2d4580"/></svg>
<div class="t sh" style="left:657px;top:90px;font-size:12.200px;letter-spacing:-0.12px;color:#ececec" id="tb_settings">Settings</div>
<svg class="a" style="left:704px;top:75px" width="9" height="5"><path d="M0 0h9L4.500 5z" fill="#bdbdbd"/></svg>
<svg class="a" style="left:734px;top:48px" width="44" height="44" viewBox="0 0 44 44"><path d="M14.400 3.100h27.600l-.7 26-2 3.500-24.500.4z" fill="url(#pg1)"/><path d="M41 3.100h1l-.7 26-2 3.500z" fill="#e8eefa"/><path d="M19.500 7.700h21M25.700 12.400h14.800M31 17.400h9.500M28.800 7.700v10M33.100 7.700v16.500M37.400 7.700v21.500" stroke="#fff" stroke-width="1.100" fill="none"/><path d="M8 35.500c6 4 20 4.500 26 1l-2 2.500c-6 2-17 2-22 0z" fill="#0e0e0e" opacity=".8"/><path d="M12.500 31.500h13v3h-13z" fill="#5070c0"/><path d="M8.600 17.600c4-2 15.500-1.500 19.400 1.400 3.500 2.500 7.500 11.500 6.500 15.500-.8 3-4.500 2.500-6.500-.5-1.500-2.300-2.500-4.500-4.500-4.700-2-.2-7-.5-10-.4-2 .1-3 2-4.500 4-2 2.800-5.500 3-6 0-.8-4.500 2.500-13.500 5.600-15.300z" fill="url(#gy1)"/><path d="M8.600 17.600c4-2 15.500-1.500 19.400 1.400 1.500 1 3 3.500 4.200 6-6-3.500-21-4.500-27.400-.8 1-3 2.300-5.700 3.800-6.600z" fill="#f2f2f2" opacity=".6"/><path d="M6.300 23.800h1.900v-1.900h1.700v1.900h1.900v1.700h-1.900v1.900h-1.700v-1.900h-1.900z" fill="#5a7cd0"/><g fill="#5a7cd0"><circle cx="24.500" cy="22.500" r="1.250"/><circle cx="27" cy="24.800" r="1.250"/><circle cx="22" cy="24.800" r="1.250"/><circle cx="24.500" cy="27.100" r="1.250"/></g></svg>
<div class="t sh" style="left:729px;top:90px;font-size:12.200px;letter-spacing:0px;color:#ececec" id="tb_blueprints">Blueprints</div>
<svg class="a" style="left:787px;top:75px" width="9" height="5"><path d="M0 0h9L4.500 5z" fill="#bdbdbd"/></svg>
<svg class="a" style="left:816px;top:48px" width="44" height="44" viewBox="0 0 44 44"><path d="M35 41l5.500-9 1 3-4 7z" fill="#101010" opacity=".8"/><path d="M7.600 10.800L39.100.700 40.700 7.300 9.600 12.800 5 10z" fill="#f6f6f6"/><path d="M10.3 9.9L14.1 8.7L12.6 12.3L8.8 12.9ZM18.2 7.4L21.9 6.2L20.3 10.9L16.6 11.6ZM26.0 4.9L29.8 3.7L28.1 9.5L24.4 10.2ZM33.9 2.4L37.7 1.2L35.9 8.2L32.1 8.8Z" fill="#3f424e"/><path d="M8.400 11.600L40.300 13.900 38.700 20.600 7.600 16.300z" fill="#f6f6f6"/><path d="M7.6 11.5L11.4 11.8L14.0 17.2L10.2 16.7ZM15.6 12.1L19.4 12.4L21.8 18.3L18.0 17.7ZM23.6 12.7L27.4 13.0L29.5 19.3L25.8 18.8ZM31.5 13.3L35.4 13.5L37.3 20.4L33.6 19.9Z" fill="#3f424e"/><path d="M7.200 16.700L39.900 21.300 35.200 40.400 4.900 29.900z" fill="#6f8cd2"/><path d="M39.900 21.300l-4.700 19.100-1.500-.5 4.500-18.800z" fill="#9ab2ea"/><path d="M10 20.200L32.900 23.700 31 36.900 8 29.100z" fill="url(#scr)"/></svg>
<div class="t sh" style="left:809px;top:90px;font-size:12.200px;letter-spacing:-0.1px;color:#ececec" id="tb_cinematics">Cinematics</div>
<svg class="a" style="left:872px;top:75px" width="9" height="5"><path d="M0 0h9L4.500 5z" fill="#bdbdbd"/></svg>
<svg class="a" style="left:895px;top:48px" width="44" height="44" viewBox="0 0 44 44"><path d="M20 40 L40 30 38 36z" fill="#151515" opacity=".5"/><path d="M11.500 2.500 l8-1.500 6 1.500 v24 h-14z" fill="url(#twr)"/><path d="M19.500 1 l6 1.500 v24 l-6 1z" fill="#a9bbdc"/><path d="M22 12 l9-1.500 6.500 2 v20 l-9 4 -6.500-3z" fill="url(#twr)"/><path d="M31 10.500 l6.500 2 v20 l-6.500 3z" fill="#a5b7da"/><path d="M2.500 25 l8-3 8 3 v7 l-8 3 -8-4z" fill="#e2e9f2"/><path d="M10.500 28 l8-3 v7 l-8 3z" fill="#b7c3da"/><path d="M11 23 l9.500-3 9.500 3.500 -9.500 4z" fill="#86a0e0"/><path d="M11 23 l9.500 4.500 v12 l-9.500-5z" fill="#4c69be"/><path d="M20.500 27.500 l9.500-4 v11.500 l-9.500 4.500z" fill="#6782cf"/></svg>
<div class="t sh" style="left:903px;top:90px;font-size:12.200px;letter-spacing:0px;color:#ececec" id="tb_build">Build</div>
<svg class="a" style="left:952px;top:75px" width="9" height="5"><path d="M0 0h9L4.500 5z" fill="#bdbdbd"/></svg>
<svg class="a" style="left:974px;top:48px" width="44" height="44" viewBox="0 0 44 44"><path d="M3.500 37.500 L35 32.500 31 36 6 41z" fill="#0c0c0c"/><path d="M3 2 L36 20 3 38.500z" fill="url(#pl1)"/></svg>
<div class="t sh" style="left:985.4px;top:90px;font-size:12.200px;letter-spacing:0px;color:#ececec" id="tb_play">Play</div>
<svg class="a" style="left:1032px;top:75px" width="9" height="5"><path d="M0 0h9L4.500 5z" fill="#bdbdbd"/></svg>
<svg class="a" style="left:1052px;top:48px" width="44" height="44" viewBox="0 0 44 44"><path d="M6 37 c6-5 22-5 34 0 l-4 4 c-9-3-20-3-26 0z" fill="#0d0d0d"/><path d="M13.500 5 L40 1.500 38 35 15.500 24.500z" fill="#eef3fa"/><path d="M16 7.500 L37.500 4.500 36 31 17.500 22.500z" fill="#6c7fb8"/><path d="M24 28 l6 3 -1 4 h-4z" fill="#aebbd8"/><path d="M17 33.500 l10-2 8 4 -8 2.500z" fill="#e8eef8"/><path d="M7 13 c4-3 15-3 19.500 0 c3 2 5.500 10 4 13.500 c-1 2-4 1-5.500-1.500 c-1.500-2.500-3-3-8-3 s-6.500 .5-8 3 c-1.500 2.500-4.500 3.500-5.500 1.500 c-1.500-3.500 1-11.500 3.500-13.500z" fill="url(#gy1)"/><path d="M7 13 c4-3 15-3 19.500 0 c3 2 5.500 10 4 13.500 c-1 2-4 1-5.500-1.500 c-1.500-2.500-3-3-8-3 s-6.500 .5-8 3 c-1.500 2.500-4.500 3.500-5.500 1.500 c-1.500-3.500 1-11.500 3.500-13.500z" fill="#c9d2ea" opacity=".6"/><path d="M8.500 16.200 h1.600 v-1.600 h1.400 v1.600 h1.600 v1.400 h-1.600 v1.600 h-1.400 v-1.600 h-1.600z" fill="#4a78d0"/><g fill="#4a78d0"><circle cx="23" cy="14.800" r="1"/><circle cx="25" cy="16.800" r="1"/><circle cx="21" cy="16.800" r="1"/><circle cx="23" cy="18.800" r="1"/></g></svg>
<div class="t sh" style="left:1054px;top:90px;font-size:12.200px;letter-spacing:0px;color:#ececec" id="tb_launch">Launch</div>
<svg class="a" style="left:1111px;top:75px" width="9" height="5"><path d="M0 0h9L4.500 5z" fill="#bdbdbd"/></svg>
<div class="a" style="left:511px;top:49px;width:1px;height:56px;background:#2a2a2a"></div><div class="a" style="left:512px;top:49px;width:1px;height:56px;background:#5c5c5c"></div>
<div class="a" style="left:649px;top:49px;width:1px;height:56px;background:#2a2a2a"></div><div class="a" style="left:650px;top:49px;width:1px;height:56px;background:#5c5c5c"></div>
<div class="a" style="left:721px;top:49px;width:1px;height:56px;background:#2a2a2a"></div><div class="a" style="left:722px;top:49px;width:1px;height:56px;background:#5c5c5c"></div>
<div class="a" style="left:889px;top:49px;width:1px;height:56px;background:#2a2a2a"></div><div class="a" style="left:890px;top:49px;width:1px;height:56px;background:#5c5c5c"></div>
<div class="a" style="left:969px;top:49px;width:1px;height:56px;background:#2a2a2a"></div><div class="a" style="left:970px;top:49px;width:1px;height:56px;background:#5c5c5c"></div>
<!-- VIEWPORT -->
<div class="a" style="left:320px;top:111px;width:1212px;height:567px;background:#141414"></div>
<div class="a" id="vp" style="left:321px;top:113px;width:1211px;height:564px;border:2px solid #666a73;overflow:hidden;background:#cfcfde">
<svg class="a" style="left:0;top:0" width="1207" height="560" viewBox="323 115 1207 560">
<defs>
<radialGradient id="sky" gradientUnits="userSpaceOnUse" cx="925" cy="330" r="700" gradientTransform="translate(925 330) scale(1 .62) translate(-925 -330)"><stop offset="0" stop-color="#dadae5"/><stop offset=".22" stop-color="#d4d4e1"/><stop offset=".5" stop-color="#cacad9"/><stop offset="1" stop-color="#bfbed3"/></radialGradient>
<linearGradient id="flfog" x1="0" y1="338" x2="0" y2="662" gradientUnits="userSpaceOnUse"><stop offset="0" stop-color="#4a4e62" stop-opacity=".22"/><stop offset=".5" stop-color="#4a4e62" stop-opacity=".05"/><stop offset="1" stop-color="#000" stop-opacity=".06"/></linearGradient>
<radialGradient id="ball" cx=".4" cy=".35" r=".7"><stop offset="0" stop-color="#fff"/><stop offset=".5" stop-color="#bbb"/><stop offset="1" stop-color="#333"/></radialGradient>
<linearGradient id="dome" x1="0" y1="0" x2="0" y2="1"><stop offset="0" stop-color="#8e8e92"/><stop offset="1" stop-color="#5e5e62"/></linearGradient>
</defs>
<rect x="323" y="115" width="1207" height="560" fill="url(#sky)"/>
<defs><radialGradient id="vg1" gradientUnits="userSpaceOnUse" cx="322" cy="113" r="400"><stop offset="0" stop-color="#5a5890" stop-opacity=".10"/><stop offset="1" stop-color="#5a5890" stop-opacity="0"/></radialGradient><radialGradient id="vg2" gradientUnits="userSpaceOnUse" cx="1532" cy="113" r="420"><stop offset="0" stop-color="#5a5890" stop-opacity=".18"/><stop offset="1" stop-color="#5a5890" stop-opacity="0"/></radialGradient><radialGradient id="vg3" gradientUnits="userSpaceOnUse" cx="322" cy="677" r="330"><stop offset="0" stop-color="#5a5890" stop-opacity=".05"/><stop offset="1" stop-color="#5a5890" stop-opacity="0"/></radialGradient><radialGradient id="vg4" gradientUnits="userSpaceOnUse" cx="1532" cy="677" r="330"><stop offset="0" stop-color="#5a5890" stop-opacity=".05"/><stop offset="1" stop-color="#5a5890" stop-opacity="0"/></radialGradient></defs>
<rect x="323" y="115" width="1207" height="560" fill="url(#vg1)"/>
<rect x="323" y="115" width="1207" height="560" fill="url(#vg2)"/>
<rect x="323" y="115" width="1207" height="560" fill="url(#vg3)"/>
<rect x="323" y="115" width="1207" height="560" fill="url(#vg4)"/>
<path d="M922 107L-4718 676M922 107L-4624 676M922 107L-4530 676M922 107L-4436 676M922 107L-4342 676M922 107L-4248 676M922 107L-4154 676M922 107L-4060 676M922 107L-3966 676M922 107L-3872 676M922 107L-3778 676M922 107L-3684 676M922 107L-3590 676M922 107L-3496 676M922 107L-3402 676M922 107L-3308 676M922 107L-3214 676M922 107L-3120 676M922 107L-3026 676M922 107L-2932 676M922 107L-2838 676M922 107L-2744 676M922 107L-2650 676M922 107L-2556 676M922 107L-2462 676M922 107L-2368 676M922 107L-2274 676M922 107L-2180 676M922 107L-2086 676M922 107L-1992 676M922 107L-1898 676M922 107L-1804 676M922 107L-1710 676M922 107L-1616 676M922 107L-1522 676M922 107L-1428 676M922 107L-1334 676M922 107L-1240 676M922 107L-1146 676M922 107L-1052 676M922 107L-958 676M922 107L-864 676M922 107L-770 676M922 107L-676 676M922 107L-582 676M922 107L-488 676M922 107L-394 676M922 107L-300 676M922 107L-206 676M922 107L-112 676M922 107L-18 676M922 107L76 676M922 107L170 676M922 107L264 676M922 107L358 676M922 107L452 676M922 107L546 676M922 107L640 676M922 107L734 676M922 107L828 676M922 107L1016 676M922 107L1110 676M922 107L1204 676M922 107L1298 676M922 107L1392 676M922 107L1486 676M922 107L1580 676M922 107L1674 676M922 107L1768 676M922 107L1862 676M922 107L1956 676M922 107L2050 676M922 107L2144 676M922 107L2238 676M922 107L2332 676M922 107L2426 676M922 107L2520 676M922 107L2614 676M922 107L2708 676M922 107L2802 676M922 107L2896 676M922 107L2990 676M922 107L3084 676M922 107L3178 676M922 107L3272 676M922 107L3366 676M922 107L3460 676M922 107L3554 676M922 107L3648 676M922 107L3742 676M922 107L3836 676M922 107L3930 676M922 107L4024 676M922 107L4118 676M922 107L4212 676M922 107L4306 676M922 107L4400 676M922 107L4494 676M922 107L4588 676M922 107L4682 676M922 107L4776 676M922 107L4870 676M922 107L4964 676M922 107L5058 676M922 107L5152 676M922 107L5246 676M922 107L5340 676M922 107L5434 676M922 107L5528 676M922 107L5622 676M922 107L5716 676M922 107L5810 676M922 107L5904 676M922 107L5998 676M922 107L6092 676M922 107L6186 676M922 107L6280 676M922 107L6374 676M922 107L6468 676M922 107L6562 676" stroke="#a8a8c0" stroke-width=".6" opacity=".13" fill="none"/>
<path d="M323 662.0H1530M323 593.7H1530M323 540.4H1530M323 497.6H1530M323 462.5H1530M323 433.2H1530M323 408.4H1530M323 387.0H1530M323 368.5H1530M323 352.3H1530M323 338.0H1530M323 325.3H1530M323 313.8H1530M323 303.6H1530M323 294.3H1530M323 285.8H1530M323 278.1H1530M323 271.0H1530M323 264.5H1530M323 258.4H1530M323 252.9H1530M323 247.7H1530" stroke="#a8a8c0" stroke-width=".6" opacity=".10" fill="none"/>
<polygon points="445.7,658.6 1386.5,659.3 1382.5,676 450.2,676" fill="#33343a"/>
<polygon points="539.6,659.7 633.5,659.7 633.2,676 539.9,676" fill="#3c3d43"/>
<polygon points="727.5,659.8 821.5,659.9 821.2,676 727.8,676" fill="#3c3d43"/>
<polygon points="915.6,659.9 1009.7,660.0 1009.4,676 915.9,676" fill="#3c3d43"/>
<polygon points="1103.8,660.1 1198.0,660.2 1197.7,676 1104.1,676" fill="#3c3d43"/>
<polygon points="1292.2,660.2 1386.5,660.3 1386.2,676 1292.5,676" fill="#3c3d43"/>
<polygon points="727.0,337.8 1118.0,337.8 1386.5,662.3 445.7,661.6" fill="#252834"/>
<path d="M727.0 337.8L766.1 337.8L756.1 352.1L714.6 352.1ZM805.1 337.8L844.2 337.8L839.1 352.1L797.6 352.1ZM883.3 337.8L922.4 337.8L922.1 352.1L880.6 352.1ZM961.5 337.8L1000.6 337.8L1005.2 352.1L963.6 352.1ZM1039.7 337.8L1078.9 337.8L1088.3 352.1L1046.7 352.1ZM756.1 352.1L797.6 352.1L789.0 368.3L744.7 368.3ZM839.1 352.1L880.6 352.1L877.5 368.3L833.2 368.3ZM922.1 352.1L963.6 352.1L966.0 368.3L921.8 368.3ZM1005.2 352.1L1046.7 352.1L1054.6 368.3L1010.3 368.3ZM1088.3 352.1L1129.8 352.1L1143.3 368.3L1098.9 368.3ZM700.5 368.3L744.7 368.3L731.8 386.8L684.4 386.8ZM789.0 368.3L833.2 368.3L826.6 386.8L779.2 386.8ZM877.5 368.3L921.8 368.3L921.4 386.8L874.0 386.8ZM966.0 368.3L1010.3 368.3L1016.2 386.8L968.8 386.8ZM1054.6 368.3L1098.9 368.3L1111.1 386.8L1063.7 386.8ZM731.8 386.8L779.2 386.8L767.9 408.1L716.9 408.1ZM826.6 386.8L874.0 386.8L869.9 408.1L818.9 408.1ZM921.4 386.8L968.8 386.8L972.0 408.1L920.9 408.1ZM1016.2 386.8L1063.7 386.8L1074.1 408.2L1023.0 408.1ZM1111.1 386.8L1158.6 386.8L1176.2 408.2L1125.1 408.2ZM665.9 408.1L716.9 408.1L699.6 432.9L644.4 432.9ZM767.9 408.1L818.9 408.1L810.0 432.9L754.7 432.9ZM869.9 408.1L920.9 408.1L920.4 433.0L865.2 433.0ZM972.0 408.1L1023.0 408.1L1030.9 433.0L975.7 433.0ZM1074.1 408.2L1125.1 408.2L1141.5 433.0L1086.2 433.0ZM699.6 432.9L754.7 432.9L739.2 462.2L679.1 462.2ZM810.0 432.9L865.2 433.0L859.6 462.3L799.4 462.2ZM920.4 433.0L975.7 433.0L980.0 462.3L919.8 462.3ZM1030.9 433.0L1086.2 433.0L1100.5 462.3L1040.3 462.3ZM1141.5 433.0L1196.8 433.0L1221.1 462.4L1160.8 462.3ZM618.9 462.2L679.1 462.2L654.5 497.3L588.5 497.3ZM739.2 462.2L799.4 462.2L786.8 497.3L720.6 497.3ZM859.6 462.3L919.8 462.3L919.1 497.4L852.9 497.4ZM980.0 462.3L1040.3 462.3L1051.4 497.4L985.2 497.4ZM1100.5 462.3L1160.8 462.3L1183.9 497.5L1117.6 497.5ZM654.5 497.3L720.6 497.3L698.0 540.1L624.6 540.1ZM786.8 497.3L852.9 497.4L844.7 540.2L771.3 540.1ZM919.1 497.4L985.2 497.4L991.6 540.2L918.2 540.2ZM1051.4 497.4L1117.6 497.5L1138.6 540.3L1065.1 540.3ZM1183.9 497.5L1250.1 497.5L1285.6 540.4L1212.1 540.3ZM551.3 540.0L624.6 540.1L587.4 593.4L505.0 593.3ZM698.0 540.1L771.3 540.1L752.1 593.5L669.7 593.4ZM844.7 540.2L918.2 540.2L917.0 593.6L834.6 593.5ZM991.6 540.2L1065.1 540.3L1082.1 593.7L999.5 593.6ZM1138.6 540.3L1212.1 540.3L1247.2 593.8L1164.6 593.7ZM587.4 593.4L669.7 593.4L633.5 661.7L539.6 661.7ZM752.1 593.5L834.6 593.5L821.5 661.9L727.5 661.8ZM917.0 593.6L999.5 593.6L1009.7 662.0L915.6 661.9ZM1082.1 593.7L1164.6 593.7L1198.0 662.2L1103.8 662.1ZM1247.2 593.8L1329.8 593.8L1386.5 662.3L1292.2 662.2Z" fill="#363944"/>
<path d="M727.0 337.8L731.9 337.8L730.4 339.5L725.5 339.5ZM736.8 337.8L741.6 337.8L740.3 339.5L735.4 339.5ZM746.5 337.8L751.4 337.8L750.1 339.5L745.2 339.5ZM756.3 337.8L761.2 337.8L760.0 339.5L755.0 339.5ZM730.4 339.5L735.4 339.5L733.9 341.2L729.0 341.2ZM740.3 339.5L745.2 339.5L743.9 341.2L738.9 341.2ZM750.1 339.5L755.0 339.5L753.8 341.2L748.8 341.2ZM760.0 339.5L764.9 339.5L763.7 341.2L758.7 341.2ZM724.0 341.2L729.0 341.2L727.5 343.0L722.5 343.0ZM733.9 341.2L738.9 341.2L737.5 343.0L732.5 343.0ZM743.9 341.2L748.8 341.2L747.5 343.0L742.5 343.0ZM753.8 341.2L758.7 341.2L757.5 343.0L752.5 343.0ZM727.5 343.0L732.5 343.0L731.0 344.7L726.0 344.7ZM737.5 343.0L742.5 343.0L741.1 344.7L736.1 344.7ZM747.5 343.0L752.5 343.0L751.2 344.7L746.1 344.7ZM757.5 343.0L762.5 343.0L761.2 344.7L756.2 344.7ZM721.0 344.7L726.0 344.7L724.5 346.5L719.4 346.5ZM731.0 344.7L736.1 344.7L734.6 346.5L729.5 346.5ZM741.1 344.7L746.1 344.7L744.8 346.5L739.7 346.5ZM751.2 344.7L756.2 344.7L754.9 346.5L749.8 346.5ZM724.5 346.5L729.5 346.5L728.0 348.4L722.9 348.4ZM734.6 346.5L739.7 346.5L738.3 348.4L733.1 348.4ZM744.8 346.5L749.8 346.5L748.5 348.4L743.4 348.4ZM754.9 346.5L760.0 346.5L758.7 348.4L753.6 348.4ZM717.8 348.4L722.9 348.4L721.4 350.2L716.2 350.2ZM728.0 348.4L733.1 348.4L731.7 350.2L726.5 350.2ZM738.3 348.4L743.4 348.4L741.9 350.2L736.8 350.2ZM748.5 348.4L753.6 348.4L752.2 350.2L747.1 350.2ZM721.4 350.2L726.5 350.2L724.9 352.1L719.8 352.1ZM731.7 350.2L736.8 350.2L735.3 352.1L730.1 352.1ZM741.9 350.2L747.1 350.2L745.7 352.1L740.5 352.1ZM752.2 350.2L757.4 350.2L756.1 352.1L750.9 352.1ZM805.1 337.8L810.0 337.8L809.2 339.5L804.2 339.5ZM814.9 337.8L819.8 337.8L819.0 339.5L814.1 339.5ZM824.7 337.8L829.6 337.8L828.9 339.5L823.9 339.5ZM834.5 337.8L839.3 337.8L838.7 339.5L833.8 339.5ZM809.2 339.5L814.1 339.5L813.2 341.2L808.3 341.2ZM819.0 339.5L823.9 339.5L823.2 341.2L818.2 341.2ZM828.9 339.5L833.8 339.5L833.1 341.2L828.1 341.2ZM838.7 339.5L843.6 339.5L843.0 341.2L838.0 341.2ZM803.3 341.2L808.3 341.2L807.4 343.0L802.4 343.0ZM813.2 341.2L818.2 341.2L817.4 343.0L812.4 343.0ZM823.2 341.2L828.1 341.2L827.4 343.0L822.4 343.0ZM833.1 341.2L838.0 341.2L837.4 343.0L832.4 343.0ZM807.4 343.0L812.4 343.0L811.5 344.7L806.5 344.7ZM817.4 343.0L822.4 343.0L821.6 344.7L816.6 344.7ZM827.4 343.0L832.4 343.0L831.7 344.7L826.6 344.7ZM837.4 343.0L842.4 343.0L841.7 344.7L836.7 344.7ZM801.5 344.7L806.5 344.7L805.6 346.5L800.5 346.5ZM811.5 344.7L816.6 344.7L815.7 346.5L810.7 346.5ZM821.6 344.7L826.6 344.7L825.9 346.5L820.8 346.5ZM831.7 344.7L836.7 344.7L836.0 346.5L830.9 346.5ZM805.6 346.5L810.7 346.5L809.8 348.4L804.7 348.4ZM815.7 346.5L820.8 346.5L820.0 348.4L814.9 348.4ZM825.9 346.5L830.9 346.5L830.2 348.4L825.1 348.4ZM836.0 346.5L841.1 346.5L840.4 348.4L835.3 348.4ZM799.5 348.4L804.7 348.4L803.7 350.2L798.6 350.2ZM809.8 348.4L814.9 348.4L814.0 350.2L808.9 350.2ZM820.0 348.4L825.1 348.4L824.3 350.2L819.2 350.2ZM830.2 348.4L835.3 348.4L834.6 350.2L829.5 350.2ZM803.7 350.2L808.9 350.2L807.9 352.1L802.8 352.1ZM814.0 350.2L819.2 350.2L818.3 352.1L813.1 352.1ZM824.3 350.2L829.5 350.2L828.7 352.1L823.5 352.1ZM834.6 350.2L839.8 350.2L839.1 352.1L833.9 352.1ZM883.3 337.8L888.2 337.8L887.9 339.5L883.0 339.5ZM893.1 337.8L898.0 337.8L897.8 339.5L892.8 339.5ZM902.9 337.8L907.8 337.8L907.6 339.5L902.7 339.5ZM912.6 337.8L917.5 337.8L917.5 339.5L912.5 339.5ZM887.9 339.5L892.8 339.5L892.6 341.2L887.6 341.2ZM897.8 339.5L902.7 339.5L902.5 341.2L897.5 341.2ZM907.6 339.5L912.5 339.5L912.4 341.2L907.5 341.2ZM917.5 339.5L922.4 339.5L922.3 341.2L917.4 341.2ZM882.7 341.2L887.6 341.2L887.3 343.0L882.3 343.0ZM892.6 341.2L897.5 341.2L897.3 343.0L892.3 343.0ZM902.5 341.2L907.5 341.2L907.3 343.0L902.3 343.0ZM912.4 341.2L917.4 341.2L917.3 343.0L912.3 343.0ZM887.3 343.0L892.3 343.0L892.1 344.7L887.0 344.7ZM897.3 343.0L902.3 343.0L902.1 344.7L897.1 344.7ZM907.3 343.0L912.3 343.0L912.2 344.7L907.2 344.7ZM917.3 343.0L922.3 343.0L922.3 344.7L917.2 344.7ZM882.0 344.7L887.0 344.7L886.7 346.5L881.6 346.5ZM892.1 344.7L897.1 344.7L896.9 346.5L891.8 346.5ZM902.1 344.7L907.2 344.7L907.0 346.5L901.9 346.5ZM912.2 344.7L917.2 344.7L917.2 346.5L912.1 346.5ZM886.7 346.5L891.8 346.5L891.5 348.4L886.4 348.4ZM896.9 346.5L901.9 346.5L901.7 348.4L896.6 348.4ZM907.0 346.5L912.1 346.5L912.0 348.4L906.9 348.4ZM917.2 346.5L922.2 346.5L922.2 348.4L917.1 348.4ZM881.3 348.4L886.4 348.4L886.1 350.2L880.9 350.2ZM891.5 348.4L896.6 348.4L896.4 350.2L891.2 350.2ZM901.7 348.4L906.9 348.4L906.7 350.2L901.5 350.2ZM912.0 348.4L917.1 348.4L917.0 350.2L911.8 350.2ZM886.1 350.2L891.2 350.2L891.0 352.1L885.8 352.1ZM896.4 350.2L901.5 350.2L901.3 352.1L896.2 352.1ZM906.7 350.2L911.8 350.2L911.7 352.1L906.5 352.1ZM917.0 350.2L922.2 350.2L922.1 352.1L916.9 352.1ZM961.5 337.8L966.4 337.8L966.7 339.5L961.8 339.5ZM971.3 337.8L976.2 337.8L976.5 339.5L971.6 339.5ZM981.1 337.8L986.0 337.8L986.4 339.5L981.5 339.5ZM990.8 337.8L995.7 337.8L996.2 339.5L991.3 339.5ZM966.7 339.5L971.6 339.5L971.9 341.2L967.0 341.2ZM976.5 339.5L981.5 339.5L981.9 341.2L976.9 341.2ZM986.4 339.5L991.3 339.5L991.8 341.2L986.8 341.2ZM996.2 339.5L1001.2 339.5L1001.7 341.2L996.8 341.2ZM962.0 341.2L967.0 341.2L967.3 343.0L962.3 343.0ZM971.9 341.2L976.9 341.2L977.3 343.0L972.3 343.0ZM981.9 341.2L986.8 341.2L987.3 343.0L982.3 343.0ZM991.8 341.2L996.8 341.2L997.3 343.0L992.3 343.0ZM967.3 343.0L972.3 343.0L972.6 344.7L967.6 344.7ZM977.3 343.0L982.3 343.0L982.7 344.7L977.7 344.7ZM987.3 343.0L992.3 343.0L992.8 344.7L987.7 344.7ZM997.3 343.0L1002.3 343.0L1002.8 344.7L997.8 344.7ZM962.5 344.7L967.6 344.7L967.9 346.5L962.8 346.5ZM972.6 344.7L977.7 344.7L978.0 346.5L973.0 346.5ZM982.7 344.7L987.7 344.7L988.2 346.5L983.1 346.5ZM992.8 344.7L997.8 344.7L998.3 346.5L993.3 346.5ZM967.9 346.5L973.0 346.5L973.3 348.4L968.2 348.4ZM978.0 346.5L983.1 346.5L983.5 348.4L978.4 348.4ZM988.2 346.5L993.3 346.5L993.8 348.4L988.7 348.4ZM998.3 346.5L1003.4 346.5L1004.0 348.4L998.9 348.4ZM963.1 348.4L968.2 348.4L968.5 350.2L963.4 350.2ZM973.3 348.4L978.4 348.4L978.8 350.2L973.7 350.2ZM983.5 348.4L988.7 348.4L989.1 350.2L984.0 350.2ZM993.8 348.4L998.9 348.4L999.4 350.2L994.3 350.2ZM968.5 350.2L973.7 350.2L974.0 352.1L968.8 352.1ZM978.8 350.2L984.0 350.2L984.4 352.1L979.2 352.1ZM989.1 350.2L994.3 350.2L994.8 352.1L989.6 352.1ZM999.4 350.2L1004.6 350.2L1005.2 352.1L1000.0 352.1ZM1039.7 337.8L1044.6 337.8L1045.5 339.5L1040.6 339.5ZM1049.5 337.8L1054.4 337.8L1055.4 339.5L1050.4 339.5ZM1059.3 337.8L1064.2 337.8L1065.2 339.5L1060.3 339.5ZM1069.1 337.8L1074.0 337.8L1075.1 339.5L1070.1 339.5ZM1045.5 339.5L1050.4 339.5L1051.3 341.2L1046.4 341.2ZM1055.4 339.5L1060.3 339.5L1061.3 341.2L1056.3 341.2ZM1065.2 339.5L1070.1 339.5L1071.2 341.2L1066.2 341.2ZM1075.1 339.5L1080.0 339.5L1081.1 341.2L1076.2 341.2ZM1041.4 341.2L1046.4 341.2L1047.3 343.0L1042.3 343.0ZM1051.3 341.2L1056.3 341.2L1057.3 343.0L1052.3 343.0ZM1061.3 341.2L1066.2 341.2L1067.3 343.0L1062.3 343.0ZM1071.2 341.2L1076.2 341.2L1077.3 343.0L1072.3 343.0ZM1047.3 343.0L1052.3 343.0L1053.2 344.7L1048.2 344.7ZM1057.3 343.0L1062.3 343.0L1063.3 344.7L1058.2 344.7ZM1067.3 343.0L1072.3 343.0L1073.4 344.7L1068.3 344.7ZM1077.3 343.0L1082.3 343.0L1083.4 344.7L1078.4 344.7ZM1043.1 344.7L1048.2 344.7L1049.1 346.5L1044.0 346.5ZM1053.2 344.7L1058.2 344.7L1059.2 346.5L1054.2 346.5ZM1063.3 344.7L1068.3 344.7L1069.4 346.5L1064.3 346.5ZM1073.4 344.7L1078.4 344.7L1079.5 346.5L1074.5 346.5ZM1049.1 346.5L1054.2 346.5L1055.1 348.4L1050.0 348.4ZM1059.2 346.5L1064.3 346.5L1065.4 348.4L1060.2 348.4ZM1069.4 346.5L1074.5 346.5L1075.6 348.4L1070.5 348.4ZM1079.5 346.5L1084.6 346.5L1085.8 348.4L1080.7 348.4ZM1044.9 348.4L1050.0 348.4L1051.0 350.2L1045.8 350.2ZM1055.1 348.4L1060.2 348.4L1061.3 350.2L1056.1 350.2ZM1065.4 348.4L1070.5 348.4L1071.6 350.2L1066.4 350.2ZM1075.6 348.4L1080.7 348.4L1081.9 350.2L1076.7 350.2ZM1051.0 350.2L1056.1 350.2L1057.1 352.1L1051.9 352.1ZM1061.3 350.2L1066.4 350.2L1067.5 352.1L1062.3 352.1ZM1071.6 350.2L1076.7 350.2L1077.9 352.1L1072.7 352.1ZM1081.9 350.2L1087.0 350.2L1088.3 352.1L1083.1 352.1ZM756.1 352.1L761.3 352.1L760.0 354.0L754.7 354.0ZM766.4 352.1L771.6 352.1L770.4 354.0L765.2 354.0ZM776.8 352.1L782.0 352.1L780.9 354.0L775.6 354.0ZM787.2 352.1L792.4 352.1L791.3 354.0L786.1 354.0ZM760.0 354.0L765.2 354.0L763.9 356.0L758.6 356.0ZM770.4 354.0L775.6 354.0L774.4 356.0L769.2 356.0ZM780.9 354.0L786.1 354.0L785.0 356.0L779.7 356.0ZM791.3 354.0L796.6 354.0L795.5 356.0L790.3 356.0ZM753.4 356.0L758.6 356.0L757.3 357.9L752.0 357.9ZM763.9 356.0L769.2 356.0L767.9 357.9L762.6 357.9ZM774.4 356.0L779.7 356.0L778.5 357.9L773.2 357.9ZM785.0 356.0L790.3 356.0L789.2 357.9L783.9 357.9ZM757.3 357.9L762.6 357.9L761.3 359.9L755.9 359.9ZM767.9 357.9L773.2 357.9L772.0 359.9L766.6 359.9ZM778.5 357.9L783.9 357.9L782.7 359.9L777.4 359.9ZM789.2 357.9L794.5 357.9L793.4 359.9L788.1 359.9ZM750.6 359.9L755.9 359.9L754.6 362.0L749.2 362.0ZM761.3 359.9L766.6 359.9L765.3 362.0L760.0 362.0ZM772.0 359.9L777.4 359.9L776.1 362.0L770.7 362.0ZM782.7 359.9L788.1 359.9L786.9 362.0L781.5 362.0ZM754.6 362.0L760.0 362.0L758.6 364.1L753.2 364.1ZM765.3 362.0L770.7 362.0L769.5 364.1L764.0 364.1ZM776.1 362.0L781.5 362.0L780.4 364.1L774.9 364.1ZM786.9 362.0L792.3 362.0L791.2 364.1L785.8 364.1ZM747.7 364.1L753.2 364.1L751.7 366.2L746.2 366.2ZM758.6 364.1L764.0 364.1L762.7 366.2L757.2 366.2ZM769.5 364.1L774.9 364.1L773.7 366.2L768.2 366.2ZM780.4 364.1L785.8 364.1L784.6 366.2L779.1 366.2ZM751.7 366.2L757.2 366.2L755.8 368.3L750.3 368.3ZM762.7 366.2L768.2 366.2L766.9 368.3L761.3 368.3ZM773.7 366.2L779.1 366.2L777.9 368.3L772.4 368.3ZM784.6 366.2L790.1 366.2L789.0 368.3L783.5 368.3ZM839.1 352.1L844.3 352.1L843.6 354.0L838.4 354.0ZM849.5 352.1L854.6 352.1L854.1 354.0L848.8 354.0ZM859.8 352.1L865.0 352.1L864.5 354.0L859.3 354.0ZM870.2 352.1L875.4 352.1L875.0 354.0L869.8 354.0ZM843.6 354.0L848.8 354.0L848.2 356.0L843.0 356.0ZM854.1 354.0L859.3 354.0L858.8 356.0L853.5 356.0ZM864.5 354.0L869.8 354.0L869.3 356.0L864.0 356.0ZM875.0 354.0L880.2 354.0L879.9 356.0L874.6 356.0ZM837.7 356.0L843.0 356.0L842.3 357.9L837.0 357.9ZM848.2 356.0L853.5 356.0L852.9 357.9L847.6 357.9ZM858.8 356.0L864.0 356.0L863.5 357.9L858.2 357.9ZM869.3 356.0L874.6 356.0L874.2 357.9L868.8 357.9ZM842.3 357.9L847.6 357.9L847.0 359.9L841.6 359.9ZM852.9 357.9L858.2 357.9L857.7 359.9L852.3 359.9ZM863.5 357.9L868.8 357.9L868.4 359.9L863.0 359.9ZM874.2 357.9L879.5 357.9L879.1 359.9L873.7 359.9ZM836.2 359.9L841.6 359.9L840.9 362.0L835.5 362.0ZM847.0 359.9L852.3 359.9L851.7 362.0L846.3 362.0ZM857.7 359.9L863.0 359.9L862.5 362.0L857.1 362.0ZM868.4 359.9L873.7 359.9L873.3 362.0L867.9 362.0ZM840.9 362.0L846.3 362.0L845.7 364.1L840.2 364.1ZM851.7 362.0L857.1 362.0L856.5 364.1L851.1 364.1ZM862.5 362.0L867.9 362.0L867.4 364.1L862.0 364.1ZM873.3 362.0L878.7 362.0L878.3 364.1L872.9 364.1ZM834.8 364.1L840.2 364.1L839.5 366.2L834.0 366.2ZM845.7 364.1L851.1 364.1L850.5 366.2L845.0 366.2ZM856.5 364.1L862.0 364.1L861.4 366.2L856.0 366.2ZM867.4 364.1L872.9 364.1L872.4 366.2L866.9 366.2ZM839.5 366.2L845.0 366.2L844.3 368.3L838.8 368.3ZM850.5 366.2L856.0 366.2L855.4 368.3L849.8 368.3ZM861.4 366.2L866.9 366.2L866.4 368.3L860.9 368.3ZM872.4 366.2L877.9 366.2L877.5 368.3L872.0 368.3ZM922.1 352.1L927.3 352.1L927.3 354.0L922.1 354.0ZM932.5 352.1L937.7 352.1L937.8 354.0L932.5 354.0ZM942.9 352.1L948.1 352.1L948.2 354.0L943.0 354.0ZM953.3 352.1L958.5 352.1L958.7 354.0L953.5 354.0ZM927.3 354.0L932.5 354.0L932.6 356.0L927.3 356.0ZM937.8 354.0L943.0 354.0L943.1 356.0L937.8 356.0ZM948.2 354.0L953.5 354.0L953.7 356.0L948.4 356.0ZM958.7 354.0L963.9 354.0L964.2 356.0L958.9 356.0ZM922.0 356.0L927.3 356.0L927.3 357.9L922.0 357.9ZM932.6 356.0L937.8 356.0L937.9 357.9L932.6 357.9ZM943.1 356.0L948.4 356.0L948.6 357.9L943.2 357.9ZM953.7 356.0L958.9 356.0L959.2 357.9L953.9 357.9ZM927.3 357.9L932.6 357.9L932.7 359.9L927.3 359.9ZM937.9 357.9L943.2 357.9L943.4 360.0L938.0 359.9ZM948.6 357.9L953.9 357.9L954.1 360.0L948.7 360.0ZM959.2 357.9L964.5 357.9L964.8 360.0L959.4 360.0ZM921.9 359.9L927.3 359.9L927.3 362.0L921.9 362.0ZM932.7 359.9L938.0 359.9L938.1 362.0L932.7 362.0ZM943.4 360.0L948.7 360.0L948.9 362.0L943.5 362.0ZM954.1 360.0L959.4 360.0L959.7 362.0L954.3 362.0ZM927.3 362.0L932.7 362.0L932.7 364.1L927.3 364.1ZM938.1 362.0L943.5 362.0L943.6 364.1L938.2 364.1ZM948.9 362.0L954.3 362.0L954.5 364.1L949.1 364.1ZM959.7 362.0L965.1 362.0L965.4 364.1L960.0 364.1ZM921.9 364.1L927.3 364.1L927.3 366.2L921.8 366.2ZM932.7 364.1L938.2 364.1L938.3 366.2L932.8 366.2ZM943.6 364.1L949.1 364.1L949.3 366.2L943.8 366.2ZM954.5 364.1L960.0 364.1L960.2 366.2L954.8 366.2ZM927.3 366.2L932.8 366.2L932.8 368.3L927.3 368.3ZM938.3 366.2L943.8 366.2L943.9 368.3L938.4 368.3ZM949.3 366.2L954.8 366.2L955.0 368.3L949.4 368.3ZM960.2 366.2L965.7 366.2L966.0 368.3L960.5 368.3ZM1005.2 352.1L1010.4 352.1L1011.0 354.0L1005.8 354.0ZM1015.6 352.1L1020.8 352.1L1021.5 354.0L1016.3 354.0ZM1026.0 352.1L1031.1 352.1L1032.0 354.0L1026.7 354.0ZM1036.3 352.1L1041.5 352.1L1042.4 354.0L1037.2 354.0ZM1011.0 354.0L1016.3 354.0L1017.0 356.0L1011.7 356.0ZM1021.5 354.0L1026.7 354.0L1027.5 356.0L1022.2 356.0ZM1032.0 354.0L1037.2 354.0L1038.1 356.0L1032.8 356.0ZM1042.4 354.0L1047.7 354.0L1048.6 356.0L1043.3 356.0ZM1006.4 356.0L1011.7 356.0L1012.4 357.9L1007.0 357.9ZM1017.0 356.0L1022.2 356.0L1023.0 357.9L1017.7 357.9ZM1027.5 356.0L1032.8 356.0L1033.6 357.9L1028.3 357.9ZM1038.1 356.0L1043.3 356.0L1044.3 357.9L1038.9 357.9ZM1012.4 357.9L1017.7 357.9L1018.4 360.0L1013.0 360.0ZM1023.0 357.9L1028.3 357.9L1029.1 360.0L1023.8 360.0ZM1033.6 357.9L1038.9 357.9L1039.8 360.0L1034.5 360.0ZM1044.3 357.9L1049.6 357.9L1050.6 360.0L1045.2 360.0ZM1007.7 360.0L1013.0 360.0L1013.7 362.0L1008.3 362.0ZM1018.4 360.0L1023.8 360.0L1024.5 362.0L1019.1 362.0ZM1029.1 360.0L1034.5 360.0L1035.3 362.0L1029.9 362.0ZM1039.8 360.0L1045.2 360.0L1046.1 362.0L1040.7 362.0ZM1013.7 362.0L1019.1 362.0L1019.9 364.1L1014.4 364.1ZM1024.5 362.0L1029.9 362.0L1030.8 364.1L1025.3 364.1ZM1035.3 362.0L1040.7 362.0L1041.7 364.1L1036.2 364.1ZM1046.1 362.0L1051.6 362.0L1052.6 364.1L1047.1 364.1ZM1009.0 364.1L1014.4 364.1L1015.1 366.2L1009.7 366.2ZM1019.9 364.1L1025.3 364.1L1026.1 366.2L1020.6 366.2ZM1030.8 364.1L1036.2 364.1L1037.1 366.2L1031.6 366.2ZM1041.7 364.1L1047.1 364.1L1048.1 366.2L1042.6 366.2ZM1015.1 366.2L1020.6 366.2L1021.4 368.3L1015.9 368.3ZM1026.1 366.2L1031.6 366.2L1032.5 368.3L1026.9 368.3ZM1037.1 366.2L1042.6 366.2L1043.6 368.3L1038.0 368.3ZM1048.1 366.2L1053.6 366.2L1054.6 368.3L1049.1 368.3ZM1088.3 352.1L1093.5 352.1L1094.8 354.0L1089.5 354.0ZM1098.7 352.1L1103.9 352.1L1105.2 354.0L1100.0 354.0ZM1109.1 352.1L1114.3 352.1L1115.7 354.0L1110.5 354.0ZM1119.5 352.1L1124.6 352.1L1126.2 354.0L1121.0 354.0ZM1094.8 354.0L1100.0 354.0L1101.4 356.0L1096.1 356.0ZM1105.2 354.0L1110.5 354.0L1111.9 356.0L1106.7 356.0ZM1115.7 354.0L1121.0 354.0L1122.5 356.0L1117.2 356.0ZM1126.2 354.0L1131.4 354.0L1133.0 356.0L1127.8 356.0ZM1090.8 356.0L1096.1 356.0L1097.4 358.0L1092.1 357.9ZM1101.4 356.0L1106.7 356.0L1108.1 358.0L1102.8 358.0ZM1111.9 356.0L1117.2 356.0L1118.7 358.0L1113.4 358.0ZM1122.5 356.0L1127.8 356.0L1129.4 358.0L1124.0 358.0ZM1097.4 358.0L1102.8 358.0L1104.2 360.0L1098.8 360.0ZM1108.1 358.0L1113.4 358.0L1114.9 360.0L1109.5 360.0ZM1118.7 358.0L1124.0 358.0L1125.6 360.0L1120.2 360.0ZM1129.4 358.0L1134.7 358.0L1136.3 360.0L1131.0 360.0ZM1093.4 360.0L1098.8 360.0L1100.2 362.0L1094.8 362.0ZM1104.2 360.0L1109.5 360.0L1111.0 362.0L1105.6 362.0ZM1114.9 360.0L1120.2 360.0L1121.8 362.0L1116.4 362.0ZM1125.6 360.0L1131.0 360.0L1132.6 362.0L1127.2 362.0ZM1100.2 362.0L1105.6 362.0L1107.0 364.1L1101.6 364.1ZM1111.0 362.0L1116.4 362.0L1117.9 364.1L1112.5 364.1ZM1121.8 362.0L1127.2 362.0L1128.8 364.1L1123.4 364.1ZM1132.6 362.0L1138.0 362.0L1139.7 364.1L1134.3 364.1ZM1096.1 364.1L1101.6 364.1L1103.0 366.2L1097.5 366.2ZM1107.0 364.1L1112.5 364.1L1114.0 366.2L1108.5 366.2ZM1117.9 364.1L1123.4 364.1L1125.0 366.2L1119.5 366.2ZM1128.8 364.1L1134.3 364.1L1136.0 366.2L1130.5 366.2ZM1103.0 366.2L1108.5 366.2L1110.0 368.3L1104.5 368.3ZM1114.0 366.2L1119.5 366.2L1121.1 368.3L1115.6 368.3ZM1125.0 366.2L1130.5 366.2L1132.2 368.3L1126.6 368.3ZM1136.0 366.2L1141.5 366.2L1143.3 368.3L1137.7 368.3ZM700.5 368.3L706.0 368.3L704.2 370.5L698.6 370.5ZM711.6 368.3L717.1 368.3L715.3 370.5L709.8 370.5ZM722.6 368.3L728.2 368.3L726.5 370.5L720.9 370.5ZM733.7 368.3L739.2 368.3L737.6 370.5L732.1 370.5ZM704.2 370.5L709.8 370.5L707.9 372.7L702.3 372.7ZM715.3 370.5L720.9 370.5L719.2 372.7L713.6 372.7ZM726.5 370.5L732.1 370.5L730.4 372.7L724.8 372.7ZM737.6 370.5L743.2 370.5L741.7 372.7L736.1 372.7ZM696.7 372.7L702.3 372.7L700.4 374.9L694.7 374.9ZM707.9 372.7L713.6 372.7L711.8 374.9L706.1 374.9ZM719.2 372.7L724.8 372.7L723.1 374.9L717.4 374.9ZM730.4 372.7L736.1 372.7L734.4 374.9L728.8 374.9ZM700.4 374.9L706.1 374.9L704.2 377.2L698.5 377.2ZM711.8 374.9L717.4 374.9L715.6 377.2L709.9 377.2ZM723.1 374.9L728.8 374.9L727.1 377.2L721.3 377.2ZM734.4 374.9L740.1 374.9L738.5 377.2L732.8 377.2ZM692.8 377.2L698.5 377.2L696.5 379.5L690.7 379.5ZM704.2 377.2L709.9 377.2L708.0 379.6L702.3 379.5ZM715.6 377.2L721.3 377.2L719.6 379.6L713.8 379.6ZM727.1 377.2L732.8 377.2L731.1 379.6L725.3 379.6ZM696.5 379.5L702.3 379.5L700.3 381.9L694.5 381.9ZM708.0 379.6L713.8 379.6L711.9 381.9L706.1 381.9ZM719.6 379.6L725.3 379.6L723.6 381.9L717.8 381.9ZM731.1 379.6L736.9 379.6L735.2 381.9L729.4 381.9ZM688.7 381.9L694.5 381.9L692.4 384.3L686.6 384.3ZM700.3 381.9L706.1 381.9L704.2 384.3L698.3 384.3ZM711.9 381.9L717.8 381.9L715.9 384.3L710.1 384.3ZM723.6 381.9L729.4 381.9L727.7 384.3L721.8 384.3ZM692.4 384.3L698.3 384.3L696.3 386.8L690.4 386.8ZM704.2 384.3L710.1 384.3L708.1 386.8L702.2 386.8ZM715.9 384.3L721.8 384.3L720.0 386.8L714.1 386.8ZM727.7 384.3L733.5 384.3L731.8 386.8L725.9 386.8ZM789.0 368.3L794.5 368.3L793.4 370.5L787.8 370.5ZM800.0 368.3L805.6 368.3L804.6 370.5L799.0 370.5ZM811.1 368.3L816.6 368.3L815.7 370.5L810.1 370.5ZM822.2 368.3L827.7 368.3L826.9 370.5L821.3 370.5ZM793.4 370.5L799.0 370.5L797.9 372.7L792.3 372.7ZM804.6 370.5L810.1 370.5L809.2 372.7L803.5 372.7ZM815.7 370.5L821.3 370.5L820.4 372.7L814.8 372.7ZM826.9 370.5L832.5 370.5L831.7 372.7L826.0 372.7ZM786.7 372.7L792.3 372.7L791.1 374.9L785.5 374.9ZM797.9 372.7L803.5 372.7L802.5 374.9L796.8 374.9ZM809.2 372.7L814.8 372.7L813.8 374.9L808.2 374.9ZM820.4 372.7L826.0 372.7L825.2 374.9L819.5 374.9ZM791.1 374.9L796.8 374.9L795.7 377.2L790.0 377.2ZM802.5 374.9L808.2 374.9L807.1 377.2L801.4 377.2ZM813.8 374.9L819.5 374.9L818.6 377.2L812.9 377.2ZM825.2 374.9L830.8 374.9L830.0 377.2L824.3 377.2ZM784.3 377.2L790.0 377.2L788.8 379.6L783.0 379.6ZM795.7 377.2L801.4 377.2L800.3 379.6L794.6 379.6ZM807.1 377.2L812.9 377.2L811.9 379.6L806.1 379.6ZM818.6 377.2L824.3 377.2L823.4 379.6L817.6 379.6ZM788.8 379.6L794.6 379.6L793.4 381.9L787.6 381.9ZM800.3 379.6L806.1 379.6L805.0 381.9L799.2 381.9ZM811.9 379.6L817.6 379.6L816.7 381.9L810.9 381.9ZM823.4 379.6L829.2 379.6L828.3 381.9L822.5 381.9ZM781.8 381.9L787.6 381.9L786.4 384.3L780.5 384.3ZM793.4 381.9L799.2 381.9L798.1 384.3L792.2 384.3ZM805.0 381.9L810.9 381.9L809.8 384.3L804.0 384.3ZM816.7 381.9L822.5 381.9L821.6 384.3L815.7 384.3ZM786.4 384.3L792.2 384.3L791.0 386.8L785.1 386.8ZM798.1 384.3L804.0 384.3L802.9 386.8L797.0 386.8ZM809.8 384.3L815.7 384.3L814.7 386.8L808.8 386.8ZM821.6 384.3L827.5 384.3L826.6 386.8L820.7 386.8ZM877.5 368.3L883.0 368.3L882.7 370.5L877.1 370.5ZM888.6 368.3L894.1 368.3L893.8 370.5L888.2 370.5ZM899.6 368.3L905.2 368.3L905.0 370.5L899.4 370.5ZM910.7 368.3L916.2 368.3L916.1 370.5L910.6 370.5ZM882.7 370.5L888.2 370.5L887.9 372.7L882.3 372.7ZM893.8 370.5L899.4 370.5L899.2 372.7L893.5 372.7ZM905.0 370.5L910.6 370.5L910.4 372.7L904.8 372.7ZM916.1 370.5L921.7 370.5L921.7 372.7L916.1 372.7ZM876.7 372.7L882.3 372.7L881.9 374.9L876.2 374.9ZM887.9 372.7L893.5 372.7L893.3 374.9L887.6 374.9ZM899.2 372.7L904.8 372.7L904.6 375.0L898.9 374.9ZM910.4 372.7L916.1 372.7L916.0 375.0L910.3 375.0ZM881.9 374.9L887.6 374.9L887.2 377.2L881.5 377.2ZM893.3 374.9L898.9 374.9L898.7 377.2L893.0 377.2ZM904.6 375.0L910.3 375.0L910.1 377.2L904.4 377.2ZM916.0 375.0L921.6 375.0L921.6 377.2L915.9 377.2ZM875.8 377.2L881.5 377.2L881.1 379.6L875.4 379.6ZM887.2 377.2L893.0 377.2L892.7 379.6L886.9 379.6ZM898.7 377.2L904.4 377.2L904.2 379.6L898.4 379.6ZM910.1 377.2L915.9 377.2L915.8 379.6L910.0 379.6ZM881.1 379.6L886.9 379.6L886.5 381.9L880.7 381.9ZM892.7 379.6L898.4 379.6L898.2 381.9L892.4 381.9ZM904.2 379.6L910.0 379.6L909.8 381.9L904.0 381.9ZM915.8 379.6L921.5 379.6L921.5 381.9L915.7 381.9ZM874.9 381.9L880.7 381.9L880.3 384.3L874.4 384.3ZM886.5 381.9L892.4 381.9L892.1 384.3L886.2 384.3ZM898.2 381.9L904.0 381.9L903.8 384.4L897.9 384.3ZM909.8 381.9L915.7 381.9L915.6 384.4L909.7 384.4ZM880.3 384.3L886.2 384.3L885.8 386.8L879.9 386.8ZM892.1 384.3L897.9 384.3L897.7 386.8L891.8 386.8ZM903.8 384.4L909.7 384.4L909.5 386.8L903.6 386.8ZM915.6 384.4L921.4 384.4L921.4 386.8L915.5 386.8ZM966.0 368.3L971.6 368.3L972.0 370.5L966.4 370.5ZM977.1 368.3L982.7 368.3L983.1 370.5L977.5 370.5ZM988.2 368.3L993.7 368.3L994.3 370.5L988.7 370.5ZM999.3 368.3L1004.8 368.3L1005.4 370.5L999.9 370.5ZM972.0 370.5L977.5 370.5L978.0 372.7L972.3 372.7ZM983.1 370.5L988.7 370.5L989.2 372.7L983.6 372.7ZM994.3 370.5L999.9 370.5L1000.5 372.7L994.8 372.7ZM1005.4 370.5L1011.0 370.5L1011.7 372.7L1006.1 372.7ZM966.7 372.7L972.3 372.7L972.7 375.0L967.0 375.0ZM978.0 372.7L983.6 372.7L984.1 375.0L978.4 375.0ZM989.2 372.7L994.8 372.7L995.4 375.0L989.7 375.0ZM1000.5 372.7L1006.1 372.7L1006.8 375.0L1001.1 375.0ZM972.7 375.0L978.4 375.0L978.8 377.2L973.1 377.2ZM984.1 375.0L989.7 375.0L990.3 377.2L984.6 377.2ZM995.4 375.0L1001.1 375.0L1001.7 377.2L996.0 377.2ZM1006.8 375.0L1012.5 375.0L1013.2 377.2L1007.5 377.2ZM967.4 377.2L973.1 377.2L973.5 379.6L967.7 379.6ZM978.8 377.2L984.6 377.2L985.0 379.6L979.3 379.6ZM990.3 377.2L996.0 377.2L996.6 379.6L990.8 379.6ZM1001.7 377.2L1007.5 377.2L1008.1 379.6L1002.4 379.6ZM973.5 379.6L979.3 379.6L979.7 381.9L973.9 381.9ZM985.0 379.6L990.8 379.6L991.4 381.9L985.5 381.9ZM996.6 379.6L1002.4 379.6L1003.0 381.9L997.2 381.9ZM1008.1 379.6L1013.9 379.6L1014.7 382.0L1008.9 381.9ZM968.1 381.9L973.9 381.9L974.3 384.4L968.4 384.4ZM979.7 381.9L985.5 381.9L986.1 384.4L980.2 384.4ZM991.4 381.9L997.2 381.9L997.8 384.4L991.9 384.4ZM1003.0 381.9L1008.9 381.9L1009.6 384.4L1003.7 384.4ZM974.3 384.4L980.2 384.4L980.7 386.8L974.7 386.8ZM986.1 384.4L991.9 384.4L992.5 386.8L986.6 386.8ZM997.8 384.4L1003.7 384.4L1004.4 386.8L998.4 386.8ZM1009.6 384.4L1015.4 384.4L1016.2 386.8L1010.3 386.8ZM1054.6 368.3L1060.2 368.3L1061.3 370.5L1055.7 370.5ZM1065.7 368.3L1071.2 368.3L1072.5 370.5L1066.9 370.5ZM1076.8 368.3L1082.3 368.3L1083.6 370.5L1078.0 370.5ZM1087.9 368.3L1093.4 368.3L1094.8 370.5L1089.2 370.5ZM1061.3 370.5L1066.9 370.5L1068.0 372.7L1062.4 372.7ZM1072.5 370.5L1078.0 370.5L1079.3 372.7L1073.7 372.7ZM1083.6 370.5L1089.2 370.5L1090.6 372.7L1084.9 372.7ZM1094.8 370.5L1100.4 370.5L1101.8 372.7L1096.2 372.7ZM1056.8 372.7L1062.4 372.7L1063.6 375.0L1057.9 375.0ZM1068.0 372.7L1073.7 372.7L1074.9 375.0L1069.2 375.0ZM1079.3 372.7L1084.9 372.7L1086.3 375.0L1080.6 375.0ZM1090.6 372.7L1096.2 372.7L1097.6 375.0L1092.0 375.0ZM1063.6 375.0L1069.2 375.0L1070.5 377.3L1064.7 377.3ZM1074.9 375.0L1080.6 375.0L1081.9 377.3L1076.2 377.3ZM1086.3 375.0L1092.0 375.0L1093.4 377.3L1087.6 377.3ZM1097.6 375.0L1103.3 375.0L1104.8 377.3L1099.1 377.3ZM1059.0 377.3L1064.7 377.3L1065.9 379.6L1060.1 379.6ZM1070.5 377.3L1076.2 377.3L1077.5 379.6L1071.7 379.6ZM1081.9 377.3L1087.6 377.3L1089.0 379.6L1083.2 379.6ZM1093.4 377.3L1099.1 377.3L1100.6 379.6L1094.8 379.6ZM1065.9 379.6L1071.7 379.6L1072.9 382.0L1067.1 382.0ZM1077.5 379.6L1083.2 379.6L1084.6 382.0L1078.8 382.0ZM1089.0 379.6L1094.8 379.6L1096.3 382.0L1090.4 382.0ZM1100.6 379.6L1106.4 379.6L1107.9 382.0L1102.1 382.0ZM1061.3 382.0L1067.1 382.0L1068.3 384.4L1062.5 384.4ZM1072.9 382.0L1078.8 382.0L1080.1 384.4L1074.2 384.4ZM1084.6 382.0L1090.4 382.0L1091.9 384.4L1086.0 384.4ZM1096.3 382.0L1102.1 382.0L1103.6 384.4L1097.7 384.4ZM1068.3 384.4L1074.2 384.4L1075.5 386.8L1069.6 386.8ZM1080.1 384.4L1086.0 384.4L1087.4 386.8L1081.5 386.8ZM1091.9 384.4L1097.7 384.4L1099.2 386.8L1093.3 386.8ZM1103.6 384.4L1109.5 384.4L1111.1 386.8L1105.2 386.8ZM731.8 386.8L737.7 386.8L736.0 389.3L730.1 389.3ZM743.7 386.8L749.6 386.8L748.0 389.3L742.0 389.3ZM755.5 386.8L761.4 386.8L759.9 389.3L754.0 389.3ZM767.3 386.8L773.3 386.8L771.9 389.3L765.9 389.3ZM736.0 389.3L742.0 389.3L740.3 391.8L734.3 391.8ZM748.0 389.3L754.0 389.3L752.4 391.8L746.4 391.8ZM759.9 389.3L765.9 389.3L764.5 391.8L758.4 391.8ZM771.9 389.3L777.9 389.3L776.5 391.8L770.5 391.8ZM728.3 391.8L734.3 391.8L732.6 394.4L726.5 394.4ZM740.3 391.8L746.4 391.8L744.7 394.4L738.6 394.4ZM752.4 391.8L758.4 391.8L756.9 394.4L750.8 394.4ZM764.5 391.8L770.5 391.8L769.1 394.4L763.0 394.4ZM732.6 394.4L738.6 394.4L736.9 397.0L730.8 397.0ZM744.7 394.4L750.8 394.4L749.2 397.1L743.1 397.1ZM756.9 394.4L763.0 394.4L761.5 397.1L755.3 397.1ZM769.1 394.4L775.1 394.4L773.8 397.1L767.6 397.1ZM724.6 397.0L730.8 397.0L729.0 399.7L722.8 399.7ZM736.9 397.0L743.1 397.1L741.3 399.7L735.2 399.7ZM749.2 397.1L755.3 397.1L753.7 399.7L747.5 399.7ZM761.5 397.1L767.6 397.1L766.1 399.7L759.9 399.7ZM729.0 399.7L735.2 399.7L733.4 402.5L727.1 402.5ZM741.3 399.7L747.5 399.7L745.9 402.5L739.6 402.5ZM753.7 399.7L759.9 399.7L758.4 402.5L752.1 402.5ZM766.1 399.7L772.3 399.7L770.9 402.5L764.6 402.5ZM720.8 402.5L727.1 402.5L725.2 405.3L718.9 405.3ZM733.4 402.5L739.6 402.5L737.8 405.3L731.5 405.3ZM745.9 402.5L752.1 402.5L750.5 405.3L744.2 405.3ZM758.4 402.5L764.6 402.5L763.1 405.3L756.8 405.3ZM725.2 405.3L731.5 405.3L729.7 408.1L723.3 408.1ZM737.8 405.3L744.2 405.3L742.4 408.1L736.0 408.1ZM750.5 405.3L756.8 405.3L755.2 408.1L748.8 408.1ZM763.1 405.3L769.4 405.3L767.9 408.1L761.5 408.1ZM826.6 386.8L832.5 386.8L831.7 389.3L825.7 389.3ZM838.4 386.8L844.3 386.8L843.6 389.3L837.6 389.3ZM850.3 386.8L856.2 386.8L855.6 389.3L849.6 389.3ZM862.1 386.8L868.0 386.8L867.5 389.3L861.5 389.3ZM831.7 389.3L837.6 389.3L836.8 391.8L830.8 391.8ZM843.6 389.3L849.6 389.3L848.9 391.8L842.9 391.8ZM855.6 389.3L861.5 389.3L860.9 391.8L854.9 391.8ZM867.5 389.3L873.5 389.3L873.0 391.8L867.0 391.8ZM824.8 391.8L830.8 391.8L829.9 394.4L823.8 394.4ZM836.8 391.8L842.9 391.8L842.1 394.4L836.0 394.4ZM848.9 391.8L854.9 391.8L854.3 394.4L848.2 394.4ZM860.9 391.8L867.0 391.8L866.4 394.4L860.3 394.4ZM829.9 394.4L836.0 394.4L835.2 397.1L829.0 397.1ZM842.1 394.4L848.2 394.4L847.4 397.1L841.3 397.1ZM854.3 394.4L860.3 394.4L859.7 397.1L853.6 397.1ZM866.4 394.4L872.5 394.4L872.0 397.1L865.9 397.1ZM822.9 397.1L829.0 397.1L828.1 399.7L821.9 399.7ZM835.2 397.1L841.3 397.1L840.5 399.7L834.3 399.7ZM847.4 397.1L853.6 397.1L852.9 399.8L846.7 399.7ZM859.7 397.1L865.9 397.1L865.3 399.8L859.1 399.8ZM828.1 399.7L834.3 399.7L833.4 402.5L827.2 402.5ZM840.5 399.7L846.7 399.7L846.0 402.5L839.7 402.5ZM852.9 399.8L859.1 399.8L858.5 402.5L852.2 402.5ZM865.3 399.8L871.5 399.8L871.0 402.5L864.7 402.5ZM820.9 402.5L827.2 402.5L826.2 405.3L819.9 405.3ZM833.4 402.5L839.7 402.5L838.9 405.3L832.6 405.3ZM846.0 402.5L852.2 402.5L851.5 405.3L845.2 405.3ZM858.5 402.5L864.7 402.5L864.1 405.3L857.8 405.3ZM826.2 405.3L832.6 405.3L831.7 408.1L825.3 408.1ZM838.9 405.3L845.2 405.3L844.4 408.1L838.0 408.1ZM851.5 405.3L857.8 405.3L857.2 408.1L850.8 408.1ZM864.1 405.3L870.5 405.3L869.9 408.1L863.5 408.1ZM921.4 386.8L927.3 386.8L927.3 389.3L921.3 389.3ZM933.2 386.8L939.2 386.8L939.3 389.3L933.3 389.3ZM945.1 386.8L951.0 386.8L951.2 389.3L945.2 389.3ZM956.9 386.8L962.9 386.8L963.2 389.3L957.2 389.3ZM927.3 389.3L933.3 389.3L933.3 391.8L927.3 391.8ZM939.3 389.3L945.2 389.3L945.4 391.9L939.4 391.9ZM951.2 389.3L957.2 389.3L957.5 391.9L951.4 391.9ZM963.2 389.3L969.2 389.3L969.5 391.9L963.5 391.9ZM921.3 391.8L927.3 391.8L927.3 394.4L921.2 394.4ZM933.3 391.8L939.4 391.9L939.5 394.4L933.4 394.4ZM945.4 391.9L951.4 391.9L951.7 394.4L945.6 394.4ZM957.5 391.9L963.5 391.9L963.8 394.4L957.8 394.4ZM927.3 394.4L933.4 394.4L933.5 397.1L927.3 397.1ZM939.5 394.4L945.6 394.4L945.7 397.1L939.6 397.1ZM951.7 394.4L957.8 394.4L958.0 397.1L951.9 397.1ZM963.8 394.4L969.9 394.4L970.3 397.1L964.2 397.1ZM921.2 397.1L927.3 397.1L927.3 399.8L921.1 399.8ZM933.5 397.1L939.6 397.1L939.7 399.8L933.5 399.8ZM945.7 397.1L951.9 397.1L952.1 399.8L945.9 399.8ZM958.0 397.1L964.2 397.1L964.5 399.8L958.3 399.8ZM927.3 399.8L933.5 399.8L933.6 402.5L927.3 402.5ZM939.7 399.8L945.9 399.8L946.1 402.5L939.8 402.5ZM952.1 399.8L958.3 399.8L958.6 402.5L952.3 402.5ZM964.5 399.8L970.7 399.8L971.1 402.5L964.9 402.5ZM921.1 402.5L927.3 402.5L927.3 405.3L921.0 405.3ZM933.6 402.5L939.8 402.5L939.9 405.3L933.6 405.3ZM946.1 402.5L952.3 402.5L952.6 405.3L946.3 405.3ZM958.6 402.5L964.9 402.5L965.2 405.3L958.9 405.3ZM927.3 405.3L933.6 405.3L933.7 408.1L927.3 408.1ZM939.9 405.3L946.3 405.3L946.4 408.1L940.1 408.1ZM952.6 405.3L958.9 405.3L959.2 408.1L952.8 408.1ZM965.2 405.3L971.5 405.3L972.0 408.1L965.6 408.1ZM1016.2 386.8L1022.2 386.8L1023.0 389.3L1017.0 389.3ZM1028.1 386.8L1034.0 386.8L1035.0 389.3L1029.0 389.3ZM1039.9 386.8L1045.9 386.8L1046.9 389.3L1041.0 389.3ZM1051.8 386.8L1057.7 386.8L1058.9 389.3L1052.9 389.3ZM1023.0 389.3L1029.0 389.3L1029.9 391.9L1023.9 391.9ZM1035.0 389.3L1041.0 389.3L1042.0 391.9L1035.9 391.9ZM1046.9 389.3L1052.9 389.3L1054.1 391.9L1048.0 391.9ZM1058.9 389.3L1064.9 389.3L1066.1 391.9L1060.1 391.9ZM1017.8 391.9L1023.9 391.9L1024.7 394.5L1018.7 394.5ZM1029.9 391.9L1035.9 391.9L1036.9 394.5L1030.8 394.5ZM1042.0 391.9L1048.0 391.9L1049.1 394.5L1043.0 394.5ZM1054.1 391.9L1060.1 391.9L1061.3 394.5L1055.2 394.5ZM1024.7 394.5L1030.8 394.5L1031.8 397.1L1025.6 397.1ZM1036.9 394.5L1043.0 394.5L1044.1 397.1L1037.9 397.1ZM1049.1 394.5L1055.2 394.5L1056.4 397.1L1050.2 397.1ZM1061.3 394.5L1067.4 394.5L1068.7 397.1L1062.5 397.1ZM1019.5 397.1L1025.6 397.1L1026.6 399.8L1020.4 399.8ZM1031.8 397.1L1037.9 397.1L1039.0 399.8L1032.8 399.8ZM1044.1 397.1L1050.2 397.1L1051.4 399.8L1045.2 399.8ZM1056.4 397.1L1062.5 397.1L1063.8 399.8L1057.6 399.8ZM1026.6 399.8L1032.8 399.8L1033.7 402.5L1027.5 402.5ZM1039.0 399.8L1045.2 399.8L1046.3 402.5L1040.0 402.5ZM1051.4 399.8L1057.6 399.8L1058.8 402.5L1052.5 402.5ZM1063.8 399.8L1070.0 399.8L1071.3 402.5L1065.1 402.5ZM1021.2 402.5L1027.5 402.5L1028.4 405.3L1022.1 405.3ZM1033.7 402.5L1040.0 402.5L1041.1 405.3L1034.8 405.3ZM1046.3 402.5L1052.5 402.5L1053.7 405.3L1047.4 405.3ZM1058.8 402.5L1065.1 402.5L1066.4 405.3L1060.0 405.3ZM1028.4 405.3L1034.8 405.3L1035.8 408.1L1029.4 408.1ZM1041.1 405.3L1047.4 405.3L1048.5 408.1L1042.2 408.1ZM1053.7 405.3L1060.0 405.3L1061.3 408.1L1054.9 408.1ZM1066.4 405.3L1072.7 405.3L1074.1 408.2L1067.7 408.1ZM1111.1 386.8L1117.0 386.8L1118.7 389.3L1112.8 389.3ZM1123.0 386.8L1128.9 386.8L1130.7 389.3L1124.7 389.3ZM1134.8 386.8L1140.8 386.8L1142.7 389.3L1136.7 389.3ZM1146.7 386.8L1152.6 386.8L1154.7 389.3L1148.7 389.3ZM1118.7 389.3L1124.7 389.3L1126.5 391.9L1120.5 391.9ZM1130.7 389.3L1136.7 389.3L1138.6 391.9L1132.5 391.9ZM1142.7 389.3L1148.7 389.3L1150.7 391.9L1144.6 391.9ZM1154.7 389.3L1160.6 389.3L1162.7 391.9L1156.7 391.9ZM1114.4 391.9L1120.5 391.9L1122.2 394.5L1116.1 394.5ZM1126.5 391.9L1132.5 391.9L1134.4 394.5L1128.3 394.5ZM1138.6 391.9L1144.6 391.9L1146.6 394.5L1140.5 394.5ZM1150.7 391.9L1156.7 391.9L1158.8 394.5L1152.7 394.5ZM1122.2 394.5L1128.3 394.5L1130.2 397.1L1124.0 397.1ZM1134.4 394.5L1140.5 394.5L1142.5 397.1L1136.3 397.1ZM1146.6 394.5L1152.7 394.5L1154.8 397.1L1148.6 397.1ZM1158.8 394.5L1164.9 394.5L1167.1 397.1L1160.9 397.1ZM1117.9 397.1L1124.0 397.1L1125.8 399.8L1119.6 399.8ZM1130.2 397.1L1136.3 397.1L1138.3 399.8L1132.1 399.8ZM1142.5 397.1L1148.6 397.1L1150.7 399.8L1144.5 399.8ZM1154.8 397.1L1160.9 397.1L1163.1 399.8L1156.9 399.8ZM1125.8 399.8L1132.1 399.8L1134.0 402.5L1127.7 402.5ZM1138.3 399.8L1144.5 399.8L1146.5 402.5L1140.2 402.5ZM1150.7 399.8L1156.9 399.8L1159.0 402.5L1152.8 402.5ZM1163.1 399.8L1169.3 399.8L1171.6 402.5L1165.3 402.5ZM1121.4 402.5L1127.7 402.5L1129.6 405.3L1123.3 405.3ZM1134.0 402.5L1140.2 402.5L1142.2 405.3L1135.9 405.3ZM1146.5 402.5L1152.8 402.5L1154.9 405.3L1148.6 405.3ZM1159.0 402.5L1165.3 402.5L1167.5 405.3L1161.2 405.3ZM1129.6 405.3L1135.9 405.3L1137.9 408.2L1131.5 408.2ZM1142.2 405.3L1148.6 405.3L1150.7 408.2L1144.3 408.2ZM1154.9 405.3L1161.2 405.3L1163.5 408.2L1157.1 408.2ZM1167.5 405.3L1173.9 405.3L1176.2 408.2L1169.8 408.2ZM665.9 408.1L672.3 408.1L669.9 411.0L663.4 411.0ZM678.7 408.1L685.1 408.1L682.7 411.0L676.3 411.0ZM691.4 408.1L697.8 408.1L695.6 411.0L689.2 411.0ZM704.2 408.1L710.5 408.1L708.5 411.0L702.0 411.0ZM669.9 411.0L676.3 411.0L673.9 413.9L667.4 413.9ZM682.7 411.0L689.2 411.0L686.8 413.9L680.3 413.9ZM695.6 411.0L702.0 411.0L699.8 413.9L693.3 413.9ZM708.5 411.0L714.9 411.0L712.8 413.9L706.3 413.9ZM660.9 413.9L667.4 413.9L664.8 416.9L658.3 416.9ZM673.9 413.9L680.3 413.9L677.9 416.9L671.4 416.9ZM686.8 413.9L693.3 413.9L691.0 416.9L684.5 416.9ZM699.8 413.9L706.3 413.9L704.2 416.9L697.6 416.9ZM664.8 416.9L671.4 416.9L668.8 420.0L662.2 420.0ZM677.9 416.9L684.5 416.9L682.1 420.0L675.5 420.0ZM691.0 416.9L697.6 416.9L695.3 420.0L688.7 420.0ZM704.2 416.9L710.7 416.9L708.6 420.0L702.0 420.0ZM655.6 420.0L662.2 420.0L659.6 423.1L652.9 423.1ZM668.8 420.0L675.5 420.0L672.9 423.1L666.2 423.1ZM682.1 420.0L688.7 420.0L686.3 423.1L679.6 423.1ZM695.3 420.0L702.0 420.0L699.7 423.1L693.0 423.1ZM659.6 423.1L666.2 423.1L663.6 426.3L656.9 426.3ZM672.9 423.1L679.6 423.1L677.1 426.3L670.4 426.3ZM686.3 423.1L693.0 423.1L690.6 426.3L683.9 426.3ZM699.7 423.1L706.4 423.1L704.2 426.3L697.4 426.3ZM650.1 426.3L656.9 426.3L654.1 429.6L647.3 429.6ZM663.6 426.3L670.4 426.3L667.7 429.6L660.9 429.6ZM677.1 426.3L683.9 426.3L681.4 429.6L674.6 429.6ZM690.6 426.3L697.4 426.3L695.1 429.6L688.2 429.6ZM654.1 429.6L660.9 429.6L658.2 432.9L651.3 432.9ZM667.7 429.6L674.6 429.6L672.0 432.9L665.1 432.9ZM681.4 429.6L688.2 429.6L685.8 432.9L678.9 432.9ZM695.1 429.6L701.9 429.6L699.6 432.9L692.7 432.9ZM767.9 408.1L774.3 408.1L772.8 411.0L766.4 411.0ZM780.7 408.1L787.0 408.1L785.7 411.0L779.2 411.0ZM793.4 408.1L799.8 408.1L798.5 411.0L792.1 411.0ZM806.1 408.1L812.5 408.1L811.4 411.0L805.0 411.0ZM772.8 411.0L779.2 411.0L777.8 413.9L771.3 413.9ZM785.7 411.0L792.1 411.0L790.8 414.0L784.3 413.9ZM798.5 411.0L805.0 411.0L803.8 414.0L797.3 414.0ZM811.4 411.0L817.9 411.0L816.8 414.0L810.3 414.0ZM764.8 413.9L771.3 413.9L769.8 417.0L763.2 417.0ZM777.8 413.9L784.3 413.9L782.9 417.0L776.3 417.0ZM790.8 414.0L797.3 414.0L796.0 417.0L789.5 417.0ZM803.8 414.0L810.3 414.0L809.1 417.0L802.6 417.0ZM769.8 417.0L776.3 417.0L774.8 420.0L768.2 420.0ZM782.9 417.0L789.5 417.0L788.1 420.0L781.5 420.0ZM796.0 417.0L802.6 417.0L801.3 420.0L794.7 420.0ZM809.1 417.0L815.7 417.0L814.6 420.0L808.0 420.0ZM761.6 420.0L768.2 420.0L766.6 423.2L759.9 423.2ZM774.8 420.0L781.5 420.0L780.0 423.2L773.3 423.2ZM788.1 420.0L794.7 420.0L793.4 423.2L786.7 423.2ZM801.3 420.0L808.0 420.0L806.8 423.2L800.1 423.2ZM766.6 423.2L773.3 423.2L771.8 426.3L765.0 426.3ZM780.0 423.2L786.7 423.2L785.3 426.4L778.5 426.3ZM793.4 423.2L800.1 423.2L798.8 426.4L792.0 426.4ZM806.8 423.2L813.5 423.2L812.3 426.4L805.6 426.4ZM758.2 426.3L765.0 426.3L763.3 429.6L756.5 429.6ZM771.8 426.3L778.5 426.3L777.0 429.6L770.2 429.6ZM785.3 426.4L792.0 426.4L790.7 429.6L783.8 429.6ZM798.8 426.4L805.6 426.4L804.3 429.6L797.5 429.6ZM763.3 429.6L770.2 429.6L768.5 432.9L761.6 432.9ZM777.0 429.6L783.8 429.6L782.4 432.9L775.4 432.9ZM790.7 429.6L797.5 429.6L796.2 432.9L789.3 432.9ZM804.3 429.6L811.2 429.6L810.0 432.9L803.1 432.9ZM869.9 408.1L876.3 408.1L875.8 411.0L869.4 411.0ZM882.7 408.1L889.0 408.1L888.7 411.0L882.2 411.0ZM895.4 408.1L901.8 408.1L901.6 411.0L895.1 411.0ZM908.2 408.1L914.6 408.1L914.4 411.0L908.0 411.0ZM875.8 411.0L882.2 411.0L881.8 414.0L875.3 414.0ZM888.7 411.0L895.1 411.0L894.8 414.0L888.3 414.0ZM901.6 411.0L908.0 411.0L907.8 414.0L901.3 414.0ZM914.4 411.0L920.9 411.0L920.8 414.0L914.3 414.0ZM868.8 414.0L875.3 414.0L874.8 417.0L868.2 417.0ZM881.8 414.0L888.3 414.0L887.9 417.0L881.4 417.0ZM894.8 414.0L901.3 414.0L901.0 417.0L894.5 417.0ZM907.8 414.0L914.3 414.0L914.2 417.0L907.6 417.0ZM874.8 417.0L881.4 417.0L880.9 420.0L874.3 420.0ZM887.9 417.0L894.5 417.0L894.2 420.0L887.5 420.0ZM901.0 417.0L907.6 417.0L907.4 420.1L900.8 420.0ZM914.2 417.0L920.7 417.0L920.7 420.1L914.1 420.1ZM867.6 420.0L874.3 420.0L873.7 423.2L867.0 423.2ZM880.9 420.0L887.5 420.0L887.1 423.2L880.4 423.2ZM894.2 420.0L900.8 420.0L900.5 423.2L893.8 423.2ZM907.4 420.1L914.1 420.1L913.9 423.2L907.2 423.2ZM873.7 423.2L880.4 423.2L880.0 426.4L873.2 426.4ZM887.1 423.2L893.8 423.2L893.5 426.4L886.7 426.4ZM900.5 423.2L907.2 423.2L907.0 426.4L900.3 426.4ZM913.9 423.2L920.6 423.2L920.5 426.4L913.8 426.4ZM866.4 426.4L873.2 426.4L872.6 429.6L865.8 429.6ZM880.0 426.4L886.7 426.4L886.3 429.6L879.5 429.6ZM893.5 426.4L900.3 426.4L900.0 429.6L893.1 429.6ZM907.0 426.4L913.8 426.4L913.6 429.6L906.8 429.6ZM872.6 429.6L879.5 429.6L879.0 433.0L872.1 433.0ZM886.3 429.6L893.1 429.6L892.8 433.0L885.9 433.0ZM900.0 429.6L906.8 429.6L906.6 433.0L899.7 433.0ZM913.6 429.6L920.5 429.6L920.4 433.0L913.5 433.0ZM972.0 408.1L978.3 408.1L978.8 411.0L972.4 411.0ZM984.7 408.1L991.1 408.1L991.7 411.0L985.3 411.0ZM997.5 408.1L1003.9 408.1L1004.6 411.0L998.2 411.0ZM1010.3 408.1L1016.6 408.1L1017.5 411.0L1011.0 411.0ZM978.8 411.0L985.3 411.0L985.8 414.0L979.3 414.0ZM991.7 411.0L998.2 411.0L998.9 414.0L992.3 414.0ZM1004.6 411.0L1011.0 411.0L1011.9 414.0L1005.4 414.0ZM1017.5 411.0L1023.9 411.0L1024.9 414.0L1018.4 414.0ZM972.8 414.0L979.3 414.0L979.9 417.0L973.3 417.0ZM985.8 414.0L992.3 414.0L993.0 417.0L986.4 417.0ZM998.9 414.0L1005.4 414.0L1006.1 417.0L999.6 417.0ZM1011.9 414.0L1018.4 414.0L1019.3 417.0L1012.7 417.0ZM979.9 417.0L986.4 417.0L987.0 420.1L980.4 420.1ZM993.0 417.0L999.6 417.0L1000.3 420.1L993.6 420.1ZM1006.1 417.0L1012.7 417.0L1013.5 420.1L1006.9 420.1ZM1019.3 417.0L1025.8 417.0L1026.8 420.1L1020.2 420.1ZM973.7 420.1L980.4 420.1L980.9 423.2L974.2 423.2ZM987.0 420.1L993.6 420.1L994.3 423.2L987.6 423.2ZM1000.3 420.1L1006.9 420.1L1007.7 423.2L1001.0 423.2ZM1013.5 420.1L1020.2 420.1L1021.1 423.2L1014.4 423.2ZM980.9 423.2L987.6 423.2L988.2 426.4L981.4 426.4ZM994.3 423.2L1001.0 423.2L1001.8 426.4L995.0 426.4ZM1007.7 423.2L1014.4 423.2L1015.3 426.4L1008.5 426.4ZM1021.1 423.2L1027.8 423.2L1028.8 426.4L1022.1 426.4ZM974.7 426.4L981.4 426.4L982.0 429.7L975.2 429.6ZM988.2 426.4L995.0 426.4L995.7 429.7L988.8 429.7ZM1001.8 426.4L1008.5 426.4L1009.3 429.7L1002.5 429.7ZM1015.3 426.4L1022.1 426.4L1023.0 429.7L1016.2 429.7ZM982.0 429.7L988.8 429.7L989.5 433.0L982.6 433.0ZM995.7 429.7L1002.5 429.7L1003.3 433.0L996.4 433.0ZM1009.3 429.7L1016.2 429.7L1017.1 433.0L1010.2 433.0ZM1023.0 429.7L1029.9 429.7L1030.9 433.0L1024.0 433.0ZM1074.1 408.2L1080.5 408.2L1081.9 411.0L1075.5 411.0ZM1086.8 408.2L1093.2 408.2L1094.8 411.1L1088.4 411.0ZM1099.6 408.2L1106.0 408.2L1107.7 411.1L1101.3 411.1ZM1112.4 408.2L1118.8 408.2L1120.6 411.1L1114.2 411.1ZM1081.9 411.0L1088.4 411.0L1089.9 414.0L1083.4 414.0ZM1094.8 411.1L1101.3 411.1L1103.0 414.0L1096.4 414.0ZM1107.7 411.1L1114.2 411.1L1116.0 414.0L1109.5 414.0ZM1120.6 411.1L1127.0 411.1L1129.0 414.0L1122.5 414.0ZM1076.9 414.0L1083.4 414.0L1085.0 417.0L1078.4 417.0ZM1089.9 414.0L1096.4 414.0L1098.1 417.0L1091.5 417.0ZM1103.0 414.0L1109.5 414.0L1111.3 417.0L1104.7 417.0ZM1116.0 414.0L1122.5 414.0L1124.4 417.0L1117.8 417.0ZM1085.0 417.0L1091.5 417.0L1093.2 420.1L1086.5 420.1ZM1098.1 417.0L1104.7 417.0L1106.4 420.1L1099.8 420.1ZM1111.3 417.0L1117.8 417.0L1119.7 420.1L1113.1 420.1ZM1124.4 417.0L1131.0 417.0L1133.0 420.1L1126.4 420.1ZM1079.9 420.1L1086.5 420.1L1088.1 423.2L1081.4 423.2ZM1093.2 420.1L1099.8 420.1L1101.5 423.2L1094.8 423.2ZM1106.4 420.1L1113.1 420.1L1114.9 423.2L1108.2 423.2ZM1119.7 420.1L1126.4 420.1L1128.3 423.2L1121.6 423.2ZM1088.1 423.2L1094.8 423.2L1096.5 426.4L1089.8 426.4ZM1101.5 423.2L1108.2 423.2L1110.1 426.4L1103.3 426.4ZM1114.9 423.2L1121.6 423.2L1123.6 426.4L1116.8 426.4ZM1128.3 423.2L1135.1 423.2L1137.2 426.4L1130.4 426.4ZM1083.0 426.4L1089.8 426.4L1091.4 429.7L1084.6 429.7ZM1096.5 426.4L1103.3 426.4L1105.1 429.7L1098.3 429.7ZM1110.1 426.4L1116.8 426.4L1118.8 429.7L1111.9 429.7ZM1123.6 426.4L1130.4 426.4L1132.5 429.7L1125.6 429.7ZM1091.4 429.7L1098.3 429.7L1100.0 433.0L1093.1 433.0ZM1105.1 429.7L1111.9 429.7L1113.8 433.0L1106.9 433.0ZM1118.8 429.7L1125.6 429.7L1127.7 433.0L1120.8 433.0ZM1132.5 429.7L1139.3 429.7L1141.5 433.0L1134.6 433.0ZM699.6 432.9L706.5 432.9L704.2 436.3L697.2 436.3ZM713.4 432.9L720.3 432.9L718.1 436.3L711.1 436.3ZM727.2 432.9L734.0 432.9L732.0 436.3L725.1 436.3ZM740.9 432.9L747.8 432.9L746.0 436.3L739.0 436.3ZM704.2 436.3L711.1 436.3L708.8 439.8L701.8 439.8ZM718.1 436.3L725.1 436.3L722.9 439.8L715.9 439.8ZM732.0 436.3L739.0 436.3L737.0 439.8L730.0 439.8ZM746.0 436.3L753.0 436.3L751.1 439.8L744.1 439.8ZM694.8 439.8L701.8 439.8L699.4 443.3L692.3 443.3ZM708.8 439.8L715.9 439.8L713.6 443.3L706.5 443.3ZM722.9 439.8L730.0 439.8L727.9 443.3L720.8 443.3ZM737.0 439.8L744.1 439.8L742.1 443.3L735.0 443.3ZM699.4 443.3L706.5 443.3L704.1 446.9L697.0 446.9ZM713.6 443.3L720.8 443.3L718.5 446.9L711.3 446.9ZM727.9 443.3L735.0 443.3L732.9 446.9L725.7 446.9ZM742.1 443.3L749.2 443.3L747.3 446.9L740.1 446.9ZM689.8 446.9L697.0 446.9L694.4 450.6L687.2 450.6ZM704.1 446.9L711.3 446.9L709.0 450.6L701.7 450.6ZM718.5 446.9L725.7 446.9L723.5 450.6L716.3 450.6ZM732.9 446.9L740.1 446.9L738.1 450.6L730.8 450.6ZM694.4 450.6L701.7 450.6L699.2 454.4L691.9 454.4ZM709.0 450.6L716.3 450.6L713.9 454.4L706.6 454.4ZM723.5 450.6L730.8 450.6L728.7 454.4L721.3 454.4ZM738.1 450.6L745.4 450.6L743.4 454.4L736.0 454.4ZM684.5 454.4L691.9 454.4L689.3 458.3L681.8 458.3ZM699.2 454.4L706.6 454.4L704.1 458.3L696.7 458.3ZM713.9 454.4L721.3 454.4L719.0 458.3L711.6 458.3ZM728.7 454.4L736.0 454.4L733.9 458.3L726.4 458.3ZM689.3 458.3L696.7 458.3L694.1 462.2L686.6 462.2ZM704.1 458.3L711.6 458.3L709.2 462.2L701.6 462.2ZM719.0 458.3L726.4 458.3L724.2 462.2L716.7 462.2ZM733.9 458.3L741.3 458.3L739.2 462.2L731.7 462.2ZM810.0 432.9L816.9 432.9L815.7 436.3L808.7 436.3ZM823.8 432.9L830.7 432.9L829.7 436.3L822.7 436.3ZM837.6 432.9L844.5 432.9L843.6 436.3L836.6 436.3ZM851.4 433.0L858.3 433.0L857.6 436.3L850.6 436.3ZM815.7 436.3L822.7 436.3L821.6 439.8L814.5 439.8ZM829.7 436.3L836.6 436.3L835.7 439.8L828.6 439.8ZM843.6 436.3L850.6 436.3L849.8 439.8L842.7 439.8ZM857.6 436.3L864.5 436.3L863.9 439.8L856.8 439.8ZM807.5 439.8L814.5 439.8L813.3 443.3L806.2 443.3ZM821.6 439.8L828.6 439.8L827.6 443.3L820.5 443.3ZM835.7 439.8L842.7 439.8L841.8 443.4L834.7 443.4ZM849.8 439.8L856.8 439.8L856.1 443.4L848.9 443.4ZM813.3 443.3L820.5 443.3L819.3 447.0L812.1 447.0ZM827.6 443.3L834.7 443.4L833.7 447.0L826.5 447.0ZM841.8 443.4L848.9 443.4L848.1 447.0L840.9 447.0ZM856.1 443.4L863.2 443.4L862.5 447.0L855.3 447.0ZM804.9 447.0L812.1 447.0L810.9 450.7L803.6 450.7ZM819.3 447.0L826.5 447.0L825.4 450.7L818.1 450.7ZM833.7 447.0L840.9 447.0L840.0 450.7L832.7 450.7ZM848.1 447.0L855.3 447.0L854.5 450.7L847.2 450.7ZM810.9 450.7L818.1 450.7L816.9 454.4L809.6 454.4ZM825.4 450.7L832.7 450.7L831.6 454.4L824.3 454.4ZM840.0 450.7L847.2 450.7L846.4 454.4L839.0 454.4ZM854.5 450.7L861.8 450.7L861.1 454.4L853.7 454.4ZM802.2 454.4L809.6 454.4L808.3 458.3L800.8 458.3ZM816.9 454.4L824.3 454.4L823.1 458.3L815.7 458.3ZM831.6 454.4L839.0 454.4L838.0 458.3L830.6 458.3ZM846.4 454.4L853.7 454.4L852.9 458.3L845.5 458.3ZM808.3 458.3L815.7 458.3L814.4 462.2L806.9 462.2ZM823.1 458.3L830.6 458.3L829.5 462.3L822.0 462.2ZM838.0 458.3L845.5 458.3L844.5 462.3L837.0 462.3ZM852.9 458.3L860.3 458.3L859.6 462.3L852.1 462.3ZM920.4 433.0L927.3 433.0L927.3 436.4L920.3 436.4ZM934.2 433.0L941.1 433.0L941.3 436.4L934.3 436.4ZM948.0 433.0L954.9 433.0L955.2 436.4L948.2 436.4ZM961.8 433.0L968.8 433.0L969.2 436.4L962.2 436.4ZM927.3 436.4L934.3 436.4L934.4 439.8L927.3 439.8ZM941.3 436.4L948.2 436.4L948.5 439.8L941.4 439.8ZM955.2 436.4L962.2 436.4L962.6 439.8L955.5 439.8ZM969.2 436.4L976.2 436.4L976.7 439.8L969.6 439.8ZM920.3 439.8L927.3 439.8L927.3 443.4L920.2 443.4ZM934.4 439.8L941.4 439.8L941.6 443.4L934.4 443.4ZM948.5 439.8L955.5 439.8L955.8 443.4L948.7 443.4ZM962.6 439.8L969.6 439.8L970.1 443.4L963.0 443.4ZM927.3 443.4L934.4 443.4L934.5 447.0L927.3 447.0ZM941.6 443.4L948.7 443.4L948.9 447.0L941.7 447.0ZM955.8 443.4L963.0 443.4L963.3 447.0L956.1 447.0ZM970.1 443.4L977.2 443.4L977.7 447.0L970.5 447.0ZM920.1 447.0L927.3 447.0L927.3 450.7L920.0 450.7ZM934.5 447.0L941.7 447.0L941.9 450.7L934.6 450.7ZM948.9 447.0L956.1 447.0L956.4 450.7L949.2 450.7ZM963.3 447.0L970.5 447.0L971.0 450.7L963.7 450.7ZM927.3 450.7L934.6 450.7L934.7 454.5L927.3 454.5ZM941.9 450.7L949.2 450.7L949.4 454.5L942.0 454.5ZM956.4 450.7L963.7 450.7L964.1 454.5L956.8 454.5ZM971.0 450.7L978.3 450.7L978.9 454.5L971.5 454.5ZM920.0 454.5L927.3 454.5L927.3 458.3L919.9 458.3ZM934.7 454.5L942.0 454.5L942.2 458.3L934.8 458.3ZM949.4 454.5L956.8 454.5L957.1 458.3L949.6 458.3ZM964.1 454.5L971.5 454.5L972.0 458.3L964.5 458.3ZM927.3 458.3L934.8 458.3L934.8 462.3L927.3 462.3ZM942.2 458.3L949.6 458.3L949.9 462.3L942.4 462.3ZM957.1 458.3L964.5 458.3L965.0 462.3L957.4 462.3ZM972.0 458.3L979.4 458.3L980.0 462.3L972.5 462.3ZM1030.9 433.0L1037.8 433.0L1039.0 436.4L1032.0 436.4ZM1044.7 433.0L1051.6 433.0L1052.9 436.4L1046.0 436.4ZM1058.6 433.0L1065.5 433.0L1066.9 436.4L1059.9 436.4ZM1072.4 433.0L1079.3 433.0L1080.9 436.4L1073.9 436.4ZM1039.0 436.4L1046.0 436.4L1047.2 439.9L1040.2 439.9ZM1052.9 436.4L1059.9 436.4L1061.3 439.9L1054.3 439.9ZM1066.9 436.4L1073.9 436.4L1075.4 439.9L1068.4 439.9ZM1080.9 436.4L1087.9 436.4L1089.5 439.9L1082.5 439.9ZM1033.1 439.9L1040.2 439.9L1041.4 443.4L1034.2 443.4ZM1047.2 439.9L1054.3 439.9L1055.6 443.4L1048.5 443.4ZM1061.3 439.9L1068.4 439.9L1069.9 443.4L1062.8 443.4ZM1075.4 439.9L1082.5 439.9L1084.1 443.4L1077.0 443.4ZM1041.4 443.4L1048.5 443.4L1049.8 447.0L1042.6 447.0ZM1055.6 443.4L1062.8 443.4L1064.2 447.0L1057.0 447.0ZM1069.9 443.4L1077.0 443.4L1078.6 447.0L1071.4 447.0ZM1084.1 443.4L1091.3 443.4L1093.0 447.0L1085.8 447.0ZM1035.4 447.0L1042.6 447.0L1043.8 450.7L1036.6 450.7ZM1049.8 447.0L1057.0 447.0L1058.4 450.7L1051.1 450.7ZM1064.2 447.0L1071.4 447.0L1073.0 450.7L1065.7 450.7ZM1078.6 447.0L1085.8 447.0L1087.6 450.7L1080.3 450.7ZM1043.8 450.7L1051.1 450.7L1052.5 454.5L1045.1 454.5ZM1058.4 450.7L1065.7 450.7L1067.2 454.5L1059.9 454.5ZM1073.0 450.7L1080.3 450.7L1082.0 454.5L1074.6 454.5ZM1087.6 450.7L1094.8 450.7L1096.7 454.5L1089.3 454.5ZM1037.8 454.5L1045.1 454.5L1046.4 458.4L1039.0 458.4ZM1052.5 454.5L1059.9 454.5L1061.3 458.4L1053.9 458.4ZM1067.2 454.5L1074.6 454.5L1076.2 458.4L1068.8 458.4ZM1082.0 454.5L1089.3 454.5L1091.1 458.4L1083.7 458.4ZM1046.4 458.4L1053.9 458.4L1055.3 462.3L1047.8 462.3ZM1061.3 458.4L1068.8 458.4L1070.4 462.3L1062.8 462.3ZM1076.2 458.4L1083.7 458.4L1085.4 462.3L1077.9 462.3ZM1091.1 458.4L1098.6 458.4L1100.5 462.3L1093.0 462.3ZM1141.5 433.0L1148.4 433.0L1150.7 436.4L1143.7 436.4ZM1155.3 433.0L1162.2 433.0L1164.7 436.4L1157.7 436.4ZM1169.1 433.0L1176.1 433.0L1178.6 436.4L1171.7 436.4ZM1183.0 433.0L1189.9 433.0L1192.6 436.4L1185.6 436.4ZM1150.7 436.4L1157.7 436.4L1160.1 439.9L1153.1 439.9ZM1164.7 436.4L1171.7 436.4L1174.2 439.9L1167.2 439.9ZM1178.6 436.4L1185.6 436.4L1188.4 439.9L1181.3 439.9ZM1192.6 436.4L1199.6 436.4L1202.5 439.9L1195.4 439.9ZM1146.0 439.9L1153.1 439.9L1155.5 443.4L1148.3 443.4ZM1160.1 439.9L1167.2 439.9L1169.7 443.4L1162.6 443.4ZM1174.2 439.9L1181.3 439.9L1184.0 443.4L1176.9 443.4ZM1188.4 439.9L1195.4 439.9L1198.3 443.4L1191.1 443.4ZM1155.5 443.4L1162.6 443.4L1165.1 447.1L1157.9 447.0ZM1169.7 443.4L1176.9 443.4L1179.6 447.1L1172.3 447.1ZM1184.0 443.4L1191.1 443.4L1194.0 447.1L1186.8 447.1ZM1198.3 443.4L1205.4 443.4L1208.4 447.1L1201.2 447.1ZM1150.7 447.0L1157.9 447.0L1160.4 450.7L1153.2 450.7ZM1165.1 447.1L1172.3 447.1L1175.0 450.8L1167.7 450.8ZM1179.6 447.1L1186.8 447.1L1189.6 450.8L1182.3 450.8ZM1194.0 447.1L1201.2 447.1L1204.2 450.8L1196.9 450.8ZM1160.4 450.7L1167.7 450.8L1170.4 454.5L1163.0 454.5ZM1175.0 450.8L1182.3 450.8L1185.1 454.5L1177.7 454.5ZM1189.6 450.8L1196.9 450.8L1199.9 454.5L1192.5 454.5ZM1204.2 450.8L1211.5 450.8L1214.6 454.5L1207.2 454.5ZM1155.6 454.5L1163.0 454.5L1165.6 458.4L1158.2 458.4ZM1170.4 454.5L1177.7 454.5L1180.5 458.4L1173.1 458.4ZM1185.1 454.5L1192.5 454.5L1195.4 458.4L1188.0 458.4ZM1199.9 454.5L1207.2 454.5L1210.3 458.4L1202.9 458.4ZM1165.6 458.4L1173.1 458.4L1175.8 462.3L1168.3 462.3ZM1180.5 458.4L1188.0 458.4L1190.9 462.4L1183.4 462.4ZM1195.4 458.4L1202.9 458.4L1206.0 462.4L1198.5 462.4ZM1210.3 458.4L1217.8 458.4L1221.1 462.4L1213.5 462.4ZM618.9 462.2L626.5 462.2L623.0 466.2L615.4 466.2ZM634.0 462.2L641.5 462.2L638.2 466.2L630.6 466.2ZM649.0 462.2L656.5 462.2L653.4 466.2L645.8 466.2ZM664.0 462.2L671.6 462.2L668.6 466.2L661.0 466.2ZM623.0 466.2L630.6 466.2L627.2 470.4L619.5 470.4ZM638.2 466.2L645.8 466.2L642.6 470.4L634.9 470.4ZM653.4 466.2L661.0 466.2L658.0 470.4L650.3 470.4ZM668.6 466.2L676.3 466.2L673.4 470.4L665.7 470.4ZM611.8 470.4L619.5 470.4L616.0 474.6L608.2 474.6ZM627.2 470.4L634.9 470.4L631.5 474.6L623.7 474.6ZM642.6 470.4L650.3 470.4L647.1 474.6L639.3 474.6ZM658.0 470.4L665.7 470.4L662.6 474.6L654.9 474.6ZM616.0 474.6L623.7 474.6L620.2 478.9L612.3 478.9ZM631.5 474.6L639.3 474.6L635.9 478.9L628.0 478.9ZM647.1 474.6L654.9 474.6L651.6 478.9L643.8 478.9ZM662.6 474.6L670.4 474.6L667.4 478.9L659.5 478.9ZM604.4 478.9L612.3 478.9L608.5 483.3L600.6 483.3ZM620.2 478.9L628.0 478.9L624.5 483.3L616.5 483.3ZM635.9 478.9L643.8 478.9L640.4 483.3L632.4 483.3ZM651.6 478.9L659.5 478.9L656.3 483.3L648.4 483.3ZM608.5 483.3L616.5 483.3L612.8 487.9L604.7 487.9ZM624.5 483.3L632.4 483.3L628.9 487.9L620.8 487.9ZM640.4 483.3L648.4 483.3L645.0 487.9L636.9 487.9ZM656.3 483.3L664.3 483.3L661.1 487.9L653.1 487.9ZM596.6 487.9L604.7 487.9L600.8 492.5L592.6 492.5ZM612.8 487.9L620.8 487.9L617.1 492.5L608.9 492.5ZM628.9 487.9L636.9 487.9L633.4 492.5L625.2 492.5ZM645.0 487.9L653.1 487.9L649.7 492.5L641.6 492.5ZM600.8 492.5L608.9 492.5L605.0 497.3L596.7 497.3ZM617.1 492.5L625.2 492.5L621.5 497.3L613.2 497.3ZM633.4 492.5L641.6 492.5L638.0 497.3L629.8 497.3ZM649.7 492.5L657.9 492.5L654.5 497.3L646.3 497.3ZM739.2 462.2L746.7 462.2L744.7 466.3L737.1 466.3ZM754.3 462.2L761.8 462.2L759.9 466.3L752.3 466.3ZM769.3 462.2L776.8 462.2L775.1 466.3L767.5 466.3ZM784.4 462.2L791.9 462.2L790.3 466.3L782.7 466.3ZM744.7 466.3L752.3 466.3L750.3 470.4L742.6 470.4ZM759.9 466.3L767.5 466.3L765.7 470.4L758.0 470.4ZM775.1 466.3L782.7 466.3L781.1 470.4L773.4 470.4ZM790.3 466.3L797.9 466.3L796.5 470.4L788.8 470.4ZM734.9 470.4L742.6 470.4L740.4 474.6L732.7 474.6ZM750.3 470.4L758.0 470.4L756.0 474.6L748.2 474.6ZM765.7 470.4L773.4 470.4L771.6 474.6L763.8 474.6ZM781.1 470.4L788.8 470.4L787.2 474.6L779.4 474.6ZM740.4 474.6L748.2 474.6L746.1 478.9L738.2 478.9ZM756.0 474.6L763.8 474.6L761.9 479.0L754.0 478.9ZM771.6 474.6L779.4 474.6L777.6 479.0L769.7 479.0ZM787.2 474.6L794.9 474.6L793.4 479.0L785.5 479.0ZM730.4 478.9L738.2 478.9L736.0 483.4L728.0 483.4ZM746.1 478.9L754.0 478.9L751.9 483.4L744.0 483.4ZM761.9 479.0L769.7 479.0L767.9 483.4L759.9 483.4ZM777.6 479.0L785.5 479.0L783.8 483.4L775.8 483.4ZM736.0 483.4L744.0 483.4L741.8 487.9L733.7 487.9ZM751.9 483.4L759.9 483.4L757.9 487.9L749.8 487.9ZM767.9 483.4L775.8 483.4L774.0 487.9L765.9 487.9ZM783.8 483.4L791.8 483.4L790.1 487.9L782.1 487.9ZM725.6 487.9L733.7 487.9L731.3 492.6L723.2 492.6ZM741.8 487.9L749.8 487.9L747.7 492.6L739.5 492.6ZM757.9 487.9L765.9 487.9L764.0 492.6L755.8 492.6ZM774.0 487.9L782.1 487.9L780.3 492.6L772.1 492.6ZM731.3 492.6L739.5 492.6L737.2 497.3L728.9 497.3ZM747.7 492.6L755.8 492.6L753.7 497.3L745.4 497.3ZM764.0 492.6L772.1 492.6L770.2 497.3L762.0 497.3ZM780.3 492.6L788.5 492.6L786.8 497.3L778.5 497.3ZM859.6 462.3L867.1 462.3L866.4 466.3L858.8 466.3ZM874.6 462.3L882.2 462.3L881.7 466.3L874.0 466.3ZM889.7 462.3L897.2 462.3L896.9 466.3L889.3 466.3ZM904.7 462.3L912.3 462.3L912.1 466.3L904.5 466.3ZM866.4 466.3L874.0 466.3L873.4 470.4L865.7 470.4ZM881.7 466.3L889.3 466.3L888.8 470.4L881.1 470.4ZM896.9 466.3L904.5 466.3L904.2 470.4L896.5 470.4ZM912.1 466.3L919.7 466.3L919.6 470.4L911.9 470.4ZM858.0 470.4L865.7 470.4L865.0 474.7L857.2 474.7ZM873.4 470.4L881.1 470.4L880.6 474.7L872.8 474.7ZM888.8 470.4L896.5 470.4L896.2 474.7L888.4 474.7ZM904.2 470.4L911.9 470.4L911.7 474.7L904.0 474.7ZM865.0 474.7L872.8 474.7L872.2 479.0L864.3 479.0ZM880.6 474.7L888.4 474.7L887.9 479.0L880.0 479.0ZM896.2 474.7L904.0 474.7L903.7 479.0L895.8 479.0ZM911.7 474.7L919.5 474.7L919.4 479.0L911.6 479.0ZM856.4 479.0L864.3 479.0L863.5 483.4L855.6 483.4ZM872.2 479.0L880.0 479.0L879.5 483.4L871.5 483.4ZM887.9 479.0L895.8 479.0L895.4 483.4L887.4 483.4ZM903.7 479.0L911.6 479.0L911.4 483.4L903.4 483.4ZM863.5 483.4L871.5 483.4L870.8 488.0L862.8 488.0ZM879.5 483.4L887.4 483.4L887.0 488.0L878.9 488.0ZM895.4 483.4L903.4 483.4L903.1 488.0L895.0 488.0ZM911.4 483.4L919.3 483.4L919.3 488.0L911.2 488.0ZM854.7 487.9L862.8 488.0L862.0 492.6L853.8 492.6ZM870.8 488.0L878.9 488.0L878.3 492.6L870.1 492.6ZM887.0 488.0L895.0 488.0L894.6 492.6L886.5 492.6ZM903.1 488.0L911.2 488.0L911.0 492.6L902.8 492.6ZM862.0 492.6L870.1 492.6L869.4 497.4L861.2 497.4ZM878.3 492.6L886.5 492.6L886.0 497.4L877.7 497.4ZM894.6 492.6L902.8 492.6L902.5 497.4L894.2 497.4ZM911.0 492.6L919.2 492.6L919.1 497.4L910.8 497.4ZM980.0 462.3L987.5 462.3L988.2 466.3L980.6 466.3ZM995.1 462.3L1002.6 462.3L1003.5 466.3L995.8 466.3ZM1010.1 462.3L1017.7 462.3L1018.7 466.3L1011.1 466.3ZM1025.2 462.3L1032.7 462.3L1033.9 466.3L1026.3 466.3ZM988.2 466.3L995.8 466.3L996.6 470.5L988.9 470.5ZM1003.5 466.3L1011.1 466.3L1012.0 470.5L1004.3 470.5ZM1018.7 466.3L1026.3 466.3L1027.4 470.5L1019.7 470.5ZM1033.9 466.3L1041.5 466.4L1042.9 470.5L1035.1 470.5ZM981.2 470.5L988.9 470.5L989.6 474.7L981.9 474.7ZM996.6 470.5L1004.3 470.5L1005.2 474.7L997.4 474.7ZM1012.0 470.5L1019.7 470.5L1020.8 474.7L1013.0 474.7ZM1027.4 470.5L1035.1 470.5L1036.4 474.7L1028.6 474.7ZM989.6 474.7L997.4 474.7L998.3 479.0L990.4 479.0ZM1005.2 474.7L1013.0 474.7L1014.0 479.0L1006.2 479.0ZM1020.8 474.7L1028.6 474.7L1029.8 479.0L1021.9 479.0ZM1036.4 474.7L1044.2 474.7L1045.6 479.0L1037.7 479.0ZM982.5 479.0L990.4 479.0L991.1 483.5L983.2 483.5ZM998.3 479.0L1006.2 479.0L1007.1 483.5L999.1 483.5ZM1014.0 479.0L1021.9 479.0L1023.1 483.5L1015.1 483.5ZM1029.8 479.0L1037.7 479.0L1039.0 483.5L1031.0 483.5ZM991.1 483.5L999.1 483.5L1000.0 488.0L991.9 488.0ZM1007.1 483.5L1015.1 483.5L1016.1 488.0L1008.1 488.0ZM1023.1 483.5L1031.0 483.5L1032.3 488.0L1024.2 488.0ZM1039.0 483.5L1047.0 483.5L1048.4 488.0L1040.4 488.0ZM983.8 488.0L991.9 488.0L992.7 492.6L984.5 492.6ZM1000.0 488.0L1008.1 488.0L1009.0 492.7L1000.9 492.6ZM1016.1 488.0L1024.2 488.0L1025.4 492.7L1017.2 492.7ZM1032.3 488.0L1040.4 488.0L1041.7 492.7L1033.6 492.7ZM992.7 492.6L1000.9 492.6L1001.8 497.4L993.5 497.4ZM1009.0 492.7L1017.2 492.7L1018.3 497.4L1010.1 497.4ZM1025.4 492.7L1033.6 492.7L1034.9 497.4L1026.6 497.4ZM1041.7 492.7L1049.9 492.7L1051.4 497.4L1043.2 497.4ZM1100.5 462.3L1108.0 462.3L1110.1 466.4L1102.5 466.4ZM1115.6 462.3L1123.1 462.3L1125.3 466.4L1117.7 466.4ZM1130.6 462.3L1138.2 462.3L1140.6 466.4L1133.0 466.4ZM1145.7 462.3L1153.2 462.3L1155.8 466.4L1148.2 466.4ZM1110.1 466.4L1117.7 466.4L1119.9 470.5L1112.2 470.5ZM1125.3 466.4L1133.0 466.4L1135.3 470.5L1127.6 470.5ZM1140.6 466.4L1148.2 466.4L1150.7 470.5L1143.0 470.5ZM1155.8 466.4L1163.4 466.4L1166.2 470.5L1158.4 470.5ZM1104.5 470.5L1112.2 470.5L1114.4 474.7L1106.6 474.7ZM1119.9 470.5L1127.6 470.5L1130.0 474.7L1122.2 474.7ZM1135.3 470.5L1143.0 470.5L1145.5 474.7L1137.7 474.7ZM1150.7 470.5L1158.4 470.5L1161.1 474.8L1153.3 474.7ZM1114.4 474.7L1122.2 474.7L1124.5 479.1L1116.6 479.1ZM1130.0 474.7L1137.7 474.7L1140.2 479.1L1132.3 479.1ZM1145.5 474.7L1153.3 474.7L1156.0 479.1L1148.1 479.1ZM1161.1 474.8L1168.9 474.8L1171.8 479.1L1163.9 479.1ZM1108.7 479.1L1116.6 479.1L1118.8 483.5L1110.8 483.5ZM1124.5 479.1L1132.3 479.1L1134.8 483.5L1126.8 483.5ZM1140.2 479.1L1148.1 479.1L1150.8 483.5L1142.8 483.5ZM1156.0 479.1L1163.9 479.1L1166.7 483.5L1158.7 483.5ZM1118.8 483.5L1126.8 483.5L1129.2 488.0L1121.1 488.0ZM1134.8 483.5L1142.8 483.5L1145.4 488.0L1137.3 488.0ZM1150.8 483.5L1158.7 483.5L1161.5 488.1L1153.4 488.1ZM1166.7 483.5L1174.7 483.5L1177.7 488.1L1169.6 488.1ZM1113.1 488.0L1121.1 488.0L1123.5 492.7L1115.3 492.7ZM1129.2 488.0L1137.3 488.0L1139.9 492.7L1131.7 492.7ZM1145.4 488.0L1153.4 488.1L1156.2 492.7L1148.0 492.7ZM1161.5 488.1L1169.6 488.1L1172.6 492.7L1164.4 492.7ZM1123.5 492.7L1131.7 492.7L1134.2 497.5L1125.9 497.5ZM1139.9 492.7L1148.0 492.7L1150.8 497.5L1142.5 497.5ZM1156.2 492.7L1164.4 492.7L1167.3 497.5L1159.0 497.5ZM1172.6 492.7L1180.8 492.7L1183.9 497.5L1175.6 497.5ZM654.5 497.3L662.8 497.3L659.5 502.2L651.1 502.2ZM671.1 497.3L679.3 497.3L676.2 502.2L667.9 502.2ZM687.6 497.3L695.9 497.3L693.0 502.2L684.6 502.2ZM704.1 497.3L712.4 497.3L709.7 502.2L701.3 502.2ZM659.5 502.2L667.9 502.2L664.6 507.2L656.1 507.2ZM676.2 502.2L684.6 502.2L681.5 507.2L673.0 507.2ZM693.0 502.2L701.3 502.2L698.5 507.2L690.0 507.2ZM709.7 502.2L718.1 502.2L715.4 507.2L706.9 507.2ZM647.6 507.2L656.1 507.2L652.6 512.3L644.0 512.3ZM664.6 507.2L673.0 507.2L669.8 512.3L661.2 512.3ZM681.5 507.2L690.0 507.2L686.9 512.3L678.4 512.3ZM698.5 507.2L706.9 507.2L704.1 512.3L695.5 512.3ZM652.6 512.3L661.2 512.3L657.7 517.6L649.1 517.6ZM669.8 512.3L678.4 512.3L675.1 517.6L666.4 517.6ZM686.9 512.3L695.5 512.3L692.5 517.6L683.8 517.6ZM704.1 512.3L712.7 512.3L709.9 517.6L701.2 517.6ZM640.4 517.6L649.1 517.6L645.4 523.0L636.6 523.0ZM657.7 517.6L666.4 517.6L663.0 523.0L654.2 523.0ZM675.1 517.6L683.8 517.6L680.6 523.0L671.8 523.0ZM692.5 517.6L701.2 517.6L698.2 523.0L689.4 523.0ZM645.4 523.0L654.2 523.0L650.6 528.5L641.6 528.5ZM663.0 523.0L671.8 523.0L668.4 528.5L659.5 528.5ZM680.6 523.0L689.4 523.0L686.2 528.5L677.3 528.5ZM698.2 523.0L707.0 523.0L704.1 528.5L695.2 528.5ZM632.7 528.5L641.6 528.5L637.8 534.2L628.7 534.2ZM650.6 528.5L659.5 528.5L655.9 534.2L646.8 534.2ZM668.4 528.5L677.3 528.5L673.9 534.2L664.9 534.2ZM686.2 528.5L695.2 528.5L692.0 534.2L683.0 534.2ZM637.8 534.2L646.8 534.2L643.0 540.1L633.8 540.1ZM655.9 534.2L664.9 534.2L661.3 540.1L652.1 540.1ZM673.9 534.2L683.0 534.2L679.6 540.1L670.5 540.1ZM692.0 534.2L701.1 534.2L698.0 540.1L688.8 540.1ZM786.8 497.3L795.0 497.3L793.4 502.2L785.0 502.2ZM803.3 497.3L811.6 497.3L810.1 502.2L801.7 502.2ZM819.8 497.3L828.1 497.4L826.9 502.2L818.5 502.2ZM836.4 497.4L844.6 497.4L843.6 502.2L835.2 502.2ZM793.4 502.2L801.7 502.2L800.1 507.2L791.7 507.2ZM810.1 502.2L818.5 502.2L817.1 507.2L808.6 507.2ZM826.9 502.2L835.2 502.2L834.1 507.2L825.6 507.2ZM843.6 502.2L852.0 502.2L851.0 507.2L842.5 507.2ZM783.2 507.2L791.7 507.2L789.9 512.4L781.3 512.4ZM800.1 507.2L808.6 507.2L807.1 512.4L798.5 512.4ZM817.1 507.2L825.6 507.2L824.3 512.4L815.7 512.4ZM834.1 507.2L842.5 507.2L841.4 512.4L832.9 512.4ZM789.9 512.4L798.5 512.4L796.8 517.6L788.1 517.6ZM807.1 512.4L815.7 512.4L814.2 517.6L805.5 517.6ZM824.3 512.4L832.9 512.4L831.6 517.6L822.9 517.6ZM841.4 512.4L850.0 512.4L849.0 517.6L840.3 517.6ZM779.5 517.6L788.1 517.6L786.3 523.0L777.5 523.0ZM796.8 517.6L805.5 517.6L803.9 523.0L795.1 523.0ZM814.2 517.6L822.9 517.6L821.6 523.0L812.7 523.0ZM831.6 517.6L840.3 517.6L839.2 523.1L830.4 523.0ZM786.3 523.0L795.1 523.0L793.4 528.6L784.4 528.6ZM803.9 523.0L812.7 523.0L811.2 528.6L802.3 528.6ZM821.6 523.0L830.4 523.0L829.1 528.6L820.1 528.6ZM839.2 523.1L848.0 523.1L846.9 528.6L838.0 528.6ZM775.5 528.6L784.4 528.6L782.5 534.3L773.5 534.3ZM793.4 528.6L802.3 528.6L800.6 534.3L791.6 534.3ZM811.2 528.6L820.1 528.6L818.7 534.3L809.7 534.3ZM829.1 528.6L838.0 528.6L836.8 534.3L827.8 534.3ZM782.5 534.3L791.6 534.3L789.7 540.1L780.5 540.1ZM800.6 534.3L809.7 534.3L808.0 540.1L798.9 540.1ZM818.7 534.3L827.8 534.3L826.4 540.2L817.2 540.2ZM836.8 534.3L845.9 534.3L844.7 540.2L835.6 540.2ZM919.1 497.4L927.3 497.4L927.3 502.3L919.0 502.3ZM935.6 497.4L943.9 497.4L944.1 502.3L935.7 502.3ZM952.1 497.4L960.4 497.4L960.8 502.3L952.5 502.3ZM968.7 497.4L977.0 497.4L977.6 502.3L969.2 502.3ZM927.3 502.3L935.7 502.3L935.8 507.3L927.3 507.3ZM944.1 502.3L952.5 502.3L952.8 507.3L944.3 507.3ZM960.8 502.3L969.2 502.3L969.7 507.3L961.3 507.3ZM977.6 502.3L986.0 502.3L986.7 507.3L978.2 507.3ZM918.8 507.3L927.3 507.3L927.3 512.4L918.7 512.4ZM935.8 507.3L944.3 507.3L944.5 512.4L935.9 512.4ZM952.8 507.3L961.3 507.3L961.7 512.4L953.1 512.4ZM969.7 507.3L978.2 507.3L978.9 512.4L970.3 512.4ZM927.3 512.4L935.9 512.4L936.0 517.7L927.3 517.7ZM944.5 512.4L953.1 512.4L953.4 517.7L944.7 517.7ZM961.7 512.4L970.3 512.4L970.8 517.7L962.1 517.7ZM978.9 512.4L987.5 512.4L988.2 517.7L979.5 517.7ZM918.6 517.7L927.3 517.7L927.3 523.1L918.5 523.1ZM936.0 517.7L944.7 517.7L945.0 523.1L936.1 523.1ZM953.4 517.7L962.1 517.7L962.6 523.1L953.8 523.1ZM970.8 517.7L979.5 517.7L980.2 523.1L971.4 523.1ZM927.3 523.1L936.1 523.1L936.3 528.6L927.3 528.6ZM945.0 523.1L953.8 523.1L954.1 528.7L945.2 528.6ZM962.6 523.1L971.4 523.1L972.0 528.7L963.1 528.7ZM980.2 523.1L989.1 523.1L989.9 528.7L980.9 528.7ZM918.4 528.6L927.3 528.6L927.3 534.3L918.3 534.3ZM936.3 528.6L945.2 528.6L945.4 534.4L936.4 534.3ZM954.1 528.7L963.1 528.7L963.6 534.4L954.5 534.4ZM972.0 528.7L980.9 528.7L981.7 534.4L972.6 534.4ZM927.3 534.3L936.4 534.3L936.5 540.2L927.3 540.2ZM945.4 534.4L954.5 534.4L954.9 540.2L945.7 540.2ZM963.6 534.4L972.6 534.4L973.2 540.2L964.1 540.2ZM981.7 534.4L990.7 534.4L991.6 540.2L982.4 540.2ZM1051.4 497.4L1059.7 497.4L1061.4 502.3L1053.0 502.3ZM1068.0 497.4L1076.3 497.4L1078.1 502.3L1069.7 502.3ZM1084.5 497.4L1092.8 497.4L1094.9 502.3L1086.5 502.3ZM1101.1 497.5L1109.4 497.5L1111.7 502.3L1103.3 502.3ZM1061.4 502.3L1069.7 502.3L1071.6 507.3L1063.1 507.3ZM1078.1 502.3L1086.5 502.3L1088.5 507.3L1080.0 507.3ZM1094.9 502.3L1103.3 502.3L1105.5 507.3L1097.0 507.3ZM1111.7 502.3L1120.0 502.3L1122.5 507.4L1114.0 507.3ZM1054.6 507.3L1063.1 507.3L1064.8 512.5L1056.2 512.5ZM1071.6 507.3L1080.0 507.3L1082.0 512.5L1073.4 512.5ZM1088.5 507.3L1097.0 507.3L1099.2 512.5L1090.6 512.5ZM1105.5 507.3L1114.0 507.3L1116.4 512.5L1107.8 512.5ZM1064.8 512.5L1073.4 512.5L1075.3 517.7L1066.6 517.7ZM1082.0 512.5L1090.6 512.5L1092.7 517.7L1084.0 517.7ZM1099.2 512.5L1107.8 512.5L1110.1 517.8L1101.4 517.8ZM1116.4 512.5L1125.0 512.5L1127.6 517.8L1118.8 517.8ZM1057.9 517.7L1066.6 517.7L1068.4 523.1L1059.6 523.1ZM1075.3 517.7L1084.0 517.7L1086.1 523.2L1077.3 523.2ZM1092.7 517.7L1101.4 517.8L1103.7 523.2L1094.9 523.2ZM1110.1 517.8L1118.8 517.8L1121.4 523.2L1112.5 523.2ZM1068.4 523.1L1077.3 523.2L1079.3 528.7L1070.3 528.7ZM1086.1 523.2L1094.9 523.2L1097.1 528.7L1088.2 528.7ZM1103.7 523.2L1112.5 523.2L1115.0 528.7L1106.1 528.7ZM1121.4 523.2L1130.2 523.2L1132.9 528.7L1124.0 528.7ZM1061.4 528.7L1070.3 528.7L1072.3 534.4L1063.2 534.4ZM1079.3 528.7L1088.2 528.7L1090.4 534.4L1081.3 534.4ZM1097.1 528.7L1106.1 528.7L1108.5 534.4L1099.4 534.4ZM1115.0 528.7L1124.0 528.7L1126.6 534.4L1117.6 534.4ZM1072.3 534.4L1081.3 534.4L1083.4 540.3L1074.2 540.3ZM1090.4 534.4L1099.4 534.4L1101.8 540.3L1092.6 540.3ZM1108.5 534.4L1117.6 534.4L1120.2 540.3L1111.0 540.3ZM1126.6 534.4L1135.7 534.4L1138.6 540.3L1129.4 540.3ZM1183.9 497.5L1192.2 497.5L1195.5 502.4L1187.1 502.4ZM1200.4 497.5L1208.7 497.5L1212.3 502.4L1203.9 502.4ZM1217.0 497.5L1225.3 497.5L1229.0 502.4L1220.6 502.4ZM1233.6 497.5L1241.9 497.5L1245.8 502.4L1237.4 502.4ZM1195.5 502.4L1203.9 502.4L1207.4 507.4L1198.9 507.4ZM1212.3 502.4L1220.6 502.4L1224.4 507.4L1215.9 507.4ZM1229.0 502.4L1237.4 502.4L1241.3 507.4L1232.9 507.4ZM1245.8 502.4L1254.2 502.4L1258.3 507.4L1249.8 507.4ZM1190.4 507.4L1198.9 507.4L1202.4 512.5L1193.8 512.5ZM1207.4 507.4L1215.9 507.4L1219.6 512.5L1211.0 512.5ZM1224.4 507.4L1232.9 507.4L1236.8 512.5L1228.2 512.5ZM1241.3 507.4L1249.8 507.4L1254.0 512.5L1245.4 512.5ZM1202.4 512.5L1211.0 512.5L1214.7 517.8L1206.0 517.8ZM1219.6 512.5L1228.2 512.5L1232.1 517.8L1223.4 517.8ZM1236.8 512.5L1245.4 512.5L1249.5 517.8L1240.8 517.8ZM1254.0 512.5L1262.6 512.5L1267.0 517.8L1258.2 517.8ZM1197.2 517.8L1206.0 517.8L1209.6 523.2L1200.8 523.2ZM1214.7 517.8L1223.4 517.8L1227.3 523.2L1218.5 523.2ZM1232.1 517.8L1240.8 517.8L1244.9 523.2L1236.1 523.2ZM1249.5 517.8L1258.2 517.8L1262.6 523.2L1253.8 523.2ZM1209.6 523.2L1218.5 523.2L1222.4 528.8L1213.4 528.8ZM1227.3 523.2L1236.1 523.2L1240.2 528.8L1231.3 528.8ZM1244.9 523.2L1253.8 523.2L1258.1 528.8L1249.2 528.8ZM1262.6 523.2L1271.4 523.2L1276.0 528.8L1267.1 528.8ZM1204.5 528.8L1213.4 528.8L1217.3 534.5L1208.2 534.5ZM1222.4 528.8L1231.3 528.8L1235.4 534.5L1226.3 534.5ZM1240.2 528.8L1249.2 528.8L1253.6 534.5L1244.5 534.5ZM1258.1 528.8L1267.1 528.8L1271.7 534.5L1262.6 534.5ZM1217.3 534.5L1226.3 534.5L1230.5 540.3L1221.3 540.3ZM1235.4 534.5L1244.5 534.5L1248.8 540.4L1239.6 540.3ZM1253.6 534.5L1262.6 534.5L1267.2 540.4L1258.0 540.4ZM1271.7 534.5L1280.8 534.5L1285.6 540.4L1276.4 540.4ZM551.3 540.0L560.5 540.0L555.4 546.0L546.1 546.0ZM569.6 540.0L578.8 540.0L574.0 546.1L564.7 546.1ZM588.0 540.0L597.1 540.0L592.5 546.1L583.3 546.1ZM606.3 540.1L615.5 540.1L611.1 546.1L601.8 546.1ZM555.4 546.0L564.7 546.1L559.6 552.2L550.1 552.2ZM574.0 546.1L583.3 546.1L578.4 552.2L569.0 552.2ZM592.5 546.1L601.8 546.1L597.3 552.3L587.8 552.2ZM611.1 546.1L620.4 546.1L616.1 552.3L606.7 552.3ZM540.7 552.2L550.1 552.2L544.7 558.6L535.2 558.6ZM559.6 552.2L569.0 552.2L563.9 558.6L554.3 558.6ZM578.4 552.2L587.8 552.2L583.0 558.6L573.4 558.6ZM597.3 552.3L606.7 552.3L602.1 558.6L592.5 558.6ZM544.7 558.6L554.3 558.6L548.9 565.1L539.2 565.1ZM563.9 558.6L573.4 558.6L568.3 565.2L558.6 565.1ZM583.0 558.6L592.5 558.6L587.7 565.2L578.0 565.2ZM602.1 558.6L611.7 558.6L607.1 565.2L597.4 565.2ZM529.5 565.1L539.2 565.1L533.5 571.9L523.7 571.9ZM548.9 565.1L558.6 565.1L553.2 571.9L543.3 571.9ZM568.3 565.2L578.0 565.2L572.8 571.9L563.0 571.9ZM587.7 565.2L597.4 565.2L592.5 571.9L582.7 571.9ZM533.5 571.9L543.3 571.9L537.6 578.8L527.6 578.8ZM553.2 571.9L563.0 571.9L557.6 578.8L547.6 578.8ZM572.8 571.9L582.7 571.9L577.5 578.8L567.5 578.8ZM592.5 571.9L602.4 571.9L597.5 578.9L587.5 578.8ZM517.6 578.8L527.6 578.8L521.5 586.0L511.4 586.0ZM537.6 578.8L547.6 578.8L541.8 586.0L531.7 586.0ZM557.6 578.8L567.5 578.8L562.1 586.0L552.0 586.0ZM577.5 578.8L587.5 578.8L582.4 586.0L572.2 586.0ZM521.5 586.0L531.7 586.0L525.6 593.3L515.3 593.3ZM541.8 586.0L552.0 586.0L546.2 593.4L535.9 593.3ZM562.1 586.0L572.2 586.0L566.8 593.4L556.5 593.4ZM582.4 586.0L592.5 586.0L587.4 593.4L577.1 593.4ZM698.0 540.1L707.1 540.1L704.1 546.1L694.8 546.1ZM716.3 540.1L725.5 540.1L722.7 546.1L713.4 546.1ZM734.7 540.1L743.8 540.1L741.3 546.1L732.0 546.1ZM753.0 540.1L762.2 540.1L759.9 546.1L750.6 546.1ZM704.1 546.1L713.4 546.1L710.4 552.3L700.9 552.3ZM722.7 546.1L732.0 546.1L729.2 552.3L719.8 552.3ZM741.3 546.1L750.6 546.1L748.1 552.3L738.7 552.3ZM759.9 546.1L769.2 546.1L766.9 552.3L757.5 552.3ZM691.5 552.3L700.9 552.3L697.7 558.7L688.1 558.7ZM710.4 552.3L719.8 552.3L716.8 558.7L707.3 558.7ZM729.2 552.3L738.7 552.3L736.0 558.7L726.4 558.7ZM748.1 552.3L757.5 552.3L755.1 558.7L745.5 558.7ZM697.7 558.7L707.3 558.7L704.1 565.2L694.4 565.2ZM716.8 558.7L726.4 558.7L723.5 565.2L713.8 565.2ZM736.0 558.7L745.5 558.7L742.9 565.2L733.2 565.2ZM755.1 558.7L764.7 558.7L762.3 565.3L752.6 565.2ZM684.7 565.2L694.4 565.2L690.9 572.0L681.1 572.0ZM704.1 565.2L713.8 565.2L710.6 572.0L700.8 572.0ZM723.5 565.2L733.2 565.2L730.3 572.0L720.5 572.0ZM742.9 565.2L752.6 565.2L750.0 572.0L740.2 572.0ZM690.9 572.0L700.8 572.0L697.4 578.9L687.4 578.9ZM710.6 572.0L720.5 572.0L717.4 578.9L707.4 578.9ZM730.3 572.0L740.2 572.0L737.4 578.9L727.4 578.9ZM750.0 572.0L759.9 572.0L757.4 578.9L747.4 578.9ZM677.4 578.9L687.4 578.9L683.8 586.1L673.6 586.1ZM697.4 578.9L707.4 578.9L704.1 586.1L693.9 586.1ZM717.4 578.9L727.4 578.9L724.4 586.1L714.2 586.1ZM737.4 578.9L747.4 578.9L744.6 586.1L734.5 586.1ZM683.8 586.1L693.9 586.1L690.3 593.4L680.0 593.4ZM704.1 586.1L714.2 586.1L710.9 593.4L700.6 593.4ZM724.4 586.1L734.5 586.1L731.5 593.5L721.2 593.5ZM744.6 586.1L754.8 586.1L752.1 593.5L741.8 593.5ZM844.7 540.2L853.9 540.2L852.9 546.2L843.6 546.2ZM863.1 540.2L872.3 540.2L871.5 546.2L862.2 546.2ZM881.4 540.2L890.6 540.2L890.1 546.2L880.8 546.2ZM899.8 540.2L909.0 540.2L908.7 546.2L899.4 546.2ZM852.9 546.2L862.2 546.2L861.3 552.4L851.8 552.4ZM871.5 546.2L880.8 546.2L880.1 552.4L870.7 552.4ZM890.1 546.2L899.4 546.2L899.0 552.4L889.6 552.4ZM908.7 546.2L918.0 546.2L917.9 552.4L908.5 552.4ZM842.4 552.4L851.8 552.4L850.8 558.7L841.2 558.7ZM861.3 552.4L870.7 552.4L869.9 558.8L860.3 558.8ZM880.1 552.4L889.6 552.4L889.0 558.8L879.5 558.8ZM899.0 552.4L908.5 552.4L908.2 558.8L898.6 558.8ZM850.8 558.7L860.3 558.8L859.4 565.3L849.7 565.3ZM869.9 558.8L879.5 558.8L878.8 565.3L869.1 565.3ZM889.0 558.8L898.6 558.8L898.2 565.3L888.5 565.3ZM908.2 558.8L917.8 558.8L917.6 565.3L907.9 565.3ZM839.9 565.3L849.7 565.3L848.5 572.0L838.7 572.0ZM859.4 565.3L869.1 565.3L868.2 572.1L858.4 572.0ZM878.8 565.3L888.5 565.3L887.9 572.1L878.1 572.1ZM898.2 565.3L907.9 565.3L907.6 572.1L897.8 572.1ZM848.5 572.0L858.4 572.0L857.3 579.0L847.3 579.0ZM868.2 572.1L878.1 572.1L877.3 579.0L867.3 579.0ZM887.9 572.1L897.8 572.1L897.3 579.0L887.3 579.0ZM907.6 572.1L917.5 572.1L917.3 579.0L907.3 579.0ZM837.3 579.0L847.3 579.0L846.1 586.1L836.0 586.1ZM857.3 579.0L867.3 579.0L866.4 586.2L856.3 586.2ZM877.3 579.0L887.3 579.0L886.7 586.2L876.6 586.2ZM897.3 579.0L907.3 579.0L907.0 586.2L896.9 586.2ZM846.1 586.1L856.3 586.2L855.2 593.5L844.9 593.5ZM866.4 586.2L876.6 586.2L875.8 593.5L865.5 593.5ZM886.7 586.2L896.9 586.2L896.4 593.6L886.1 593.6ZM907.0 586.2L917.2 586.2L917.0 593.6L906.7 593.6ZM991.6 540.2L1000.8 540.2L1001.8 546.3L992.5 546.3ZM1010.0 540.2L1019.1 540.2L1020.4 546.3L1011.1 546.3ZM1028.3 540.2L1037.5 540.3L1039.0 546.3L1029.7 546.3ZM1046.7 540.3L1055.9 540.3L1057.7 546.3L1048.4 546.3ZM1001.8 546.3L1011.1 546.3L1012.3 552.5L1002.9 552.5ZM1020.4 546.3L1029.7 546.3L1031.2 552.5L1021.7 552.5ZM1039.0 546.3L1048.4 546.3L1050.1 552.5L1040.6 552.5ZM1057.7 546.3L1067.0 546.3L1069.0 552.5L1059.5 552.5ZM993.4 552.4L1002.9 552.5L1003.9 558.8L994.4 558.8ZM1012.3 552.5L1021.7 552.5L1023.1 558.8L1013.5 558.8ZM1031.2 552.5L1040.6 552.5L1042.2 558.8L1032.7 558.8ZM1050.1 552.5L1059.5 552.5L1061.4 558.9L1051.8 558.8ZM1003.9 558.8L1013.5 558.8L1014.8 565.4L1005.0 565.4ZM1023.1 558.8L1032.7 558.8L1034.2 565.4L1024.5 565.4ZM1042.2 558.8L1051.8 558.8L1053.6 565.4L1043.9 565.4ZM1061.4 558.9L1071.0 558.9L1073.1 565.4L1063.3 565.4ZM995.3 565.4L1005.0 565.4L1006.2 572.1L996.3 572.1ZM1014.8 565.4L1024.5 565.4L1025.9 572.1L1016.1 572.1ZM1034.2 565.4L1043.9 565.4L1045.6 572.1L1035.8 572.1ZM1053.6 565.4L1063.3 565.4L1065.4 572.2L1055.5 572.2ZM1006.2 572.1L1016.1 572.1L1017.4 579.1L1007.4 579.1ZM1025.9 572.1L1035.8 572.1L1037.4 579.1L1027.4 579.1ZM1045.6 572.1L1055.5 572.2L1057.4 579.1L1047.4 579.1ZM1065.4 572.2L1075.2 572.2L1077.4 579.1L1067.4 579.1ZM997.4 579.1L1007.4 579.1L1008.6 586.2L998.4 586.2ZM1017.4 579.1L1027.4 579.1L1028.9 586.3L1018.7 586.2ZM1037.4 579.1L1047.4 579.1L1049.2 586.3L1039.1 586.3ZM1057.4 579.1L1067.4 579.1L1069.5 586.3L1059.4 586.3ZM1008.6 586.2L1018.7 586.2L1020.2 593.6L1009.8 593.6ZM1028.9 586.3L1039.1 586.3L1040.8 593.6L1030.5 593.6ZM1049.2 586.3L1059.4 586.3L1061.4 593.7L1051.1 593.6ZM1069.5 586.3L1079.7 586.3L1082.1 593.7L1071.7 593.7ZM1138.6 540.3L1147.7 540.3L1150.8 546.3L1141.5 546.3ZM1156.9 540.3L1166.1 540.3L1169.4 546.3L1160.1 546.3ZM1175.3 540.3L1184.5 540.3L1188.1 546.3L1178.8 546.3ZM1193.7 540.3L1202.9 540.3L1206.7 546.4L1197.4 546.4ZM1150.8 546.3L1160.1 546.3L1163.4 552.5L1154.0 552.5ZM1169.4 546.3L1178.8 546.3L1182.3 552.5L1172.9 552.5ZM1188.1 546.3L1197.4 546.4L1201.2 552.6L1191.8 552.5ZM1206.7 546.4L1216.0 546.4L1220.1 552.6L1210.7 552.6ZM1144.5 552.5L1154.0 552.5L1157.2 558.9L1147.6 558.9ZM1163.4 552.5L1172.9 552.5L1176.4 558.9L1166.8 558.9ZM1182.3 552.5L1191.8 552.5L1195.5 558.9L1186.0 558.9ZM1201.2 552.6L1210.7 552.6L1214.7 558.9L1205.1 558.9ZM1157.2 558.9L1166.8 558.9L1170.3 565.5L1160.6 565.5ZM1176.4 558.9L1186.0 558.9L1189.7 565.5L1180.0 565.5ZM1195.5 558.9L1205.1 558.9L1209.2 565.5L1199.4 565.5ZM1214.7 558.9L1224.3 558.9L1228.6 565.5L1218.9 565.5ZM1150.8 565.5L1160.6 565.5L1164.0 572.2L1154.1 572.2ZM1170.3 565.5L1180.0 565.5L1183.7 572.2L1173.9 572.2ZM1189.7 565.5L1199.4 565.5L1203.5 572.2L1193.6 572.2ZM1209.2 565.5L1218.9 565.5L1223.2 572.2L1213.3 572.2ZM1164.0 572.2L1173.9 572.2L1177.5 579.2L1167.5 579.2ZM1183.7 572.2L1193.6 572.2L1197.6 579.2L1187.6 579.2ZM1203.5 572.2L1213.3 572.2L1217.6 579.2L1207.6 579.2ZM1223.2 572.2L1233.1 572.3L1237.6 579.2L1227.6 579.2ZM1157.5 579.2L1167.5 579.2L1171.2 586.3L1161.0 586.3ZM1177.5 579.2L1187.6 579.2L1191.5 586.3L1181.3 586.3ZM1197.6 579.2L1207.6 579.2L1211.8 586.4L1201.7 586.4ZM1217.6 579.2L1227.6 579.2L1232.2 586.4L1222.0 586.4ZM1171.2 586.3L1181.3 586.3L1185.3 593.7L1174.9 593.7ZM1191.5 586.3L1201.7 586.4L1205.9 593.7L1195.6 593.7ZM1211.8 586.4L1222.0 586.4L1226.6 593.8L1216.2 593.7ZM1232.2 586.4L1242.3 586.4L1247.2 593.8L1236.9 593.8ZM587.4 593.4L597.6 593.4L592.5 601.0L582.0 601.0ZM607.9 593.4L618.2 593.4L613.4 601.0L602.9 601.0ZM628.5 593.4L638.8 593.4L634.3 601.0L623.9 601.0ZM649.1 593.4L659.4 593.4L655.2 601.0L644.8 601.0ZM592.5 601.0L602.9 601.0L597.8 608.8L587.2 608.8ZM613.4 601.0L623.9 601.0L619.0 608.8L608.4 608.8ZM634.3 601.0L644.8 601.0L640.3 608.9L629.7 608.9ZM655.2 601.0L665.7 601.0L661.5 608.9L650.9 608.9ZM576.6 608.8L587.2 608.8L581.7 616.9L570.9 616.9ZM597.8 608.8L608.4 608.8L603.3 616.9L592.5 616.9ZM619.0 608.8L629.7 608.9L624.9 617.0L614.1 616.9ZM640.3 608.9L650.9 608.9L646.5 617.0L635.7 617.0ZM581.7 616.9L592.5 616.9L587.0 625.3L576.0 625.3ZM603.3 616.9L614.1 616.9L608.9 625.3L598.0 625.3ZM624.9 617.0L635.7 617.0L630.9 625.3L619.9 625.3ZM646.5 617.0L657.3 617.0L652.8 625.3L641.8 625.3ZM565.0 625.3L576.0 625.3L570.2 633.9L559.0 633.9ZM587.0 625.3L598.0 625.3L592.5 633.9L581.3 633.9ZM608.9 625.3L619.9 625.3L614.8 634.0L603.6 634.0ZM630.9 625.3L641.8 625.3L637.1 634.0L625.9 634.0ZM570.2 633.9L581.3 633.9L575.4 642.9L564.1 642.9ZM592.5 633.9L603.6 634.0L598.1 642.9L586.8 642.9ZM614.8 634.0L625.9 634.0L620.8 642.9L609.5 642.9ZM637.1 634.0L648.2 634.0L643.5 642.9L632.2 642.9ZM552.8 642.9L564.1 642.9L557.8 652.1L546.3 652.1ZM575.4 642.9L586.8 642.9L580.9 652.1L569.4 652.1ZM598.1 642.9L609.5 642.9L604.0 652.1L592.4 652.1ZM620.8 642.9L632.2 642.9L627.1 652.2L615.5 652.2ZM557.8 652.1L569.4 652.1L563.1 661.7L551.3 661.7ZM580.9 652.1L592.4 652.1L586.6 661.7L574.8 661.7ZM604.0 652.1L615.5 652.2L610.0 661.7L598.3 661.7ZM627.1 652.2L638.6 652.2L633.5 661.7L621.8 661.7ZM752.1 593.5L762.4 593.5L759.9 601.1L749.4 601.1ZM772.7 593.5L783.0 593.5L780.8 601.1L770.3 601.1ZM793.3 593.5L803.6 593.5L801.7 601.1L791.2 601.1ZM814.0 593.5L824.3 593.5L822.6 601.1L812.2 601.1ZM759.9 601.1L770.3 601.1L767.8 608.9L757.2 608.9ZM780.8 601.1L791.2 601.1L789.1 609.0L778.5 608.9ZM801.7 601.1L812.2 601.1L810.4 609.0L799.7 609.0ZM822.6 601.1L833.1 601.1L831.6 609.0L821.0 609.0ZM746.6 608.9L757.2 608.9L754.4 617.0L743.6 617.0ZM767.8 608.9L778.5 608.9L776.1 617.1L765.2 617.0ZM789.1 609.0L799.7 609.0L797.7 617.1L786.9 617.1ZM810.4 609.0L821.0 609.0L819.3 617.1L808.5 617.1ZM754.4 617.0L765.2 617.0L762.6 625.4L751.6 625.4ZM776.1 617.1L786.9 617.1L784.5 625.4L773.6 625.4ZM797.7 617.1L808.5 617.1L806.5 625.4L795.5 625.4ZM819.3 617.1L830.1 617.1L828.5 625.5L817.5 625.4ZM740.6 625.4L751.6 625.4L748.7 634.1L737.5 634.0ZM762.6 625.4L773.6 625.4L771.0 634.1L759.8 634.1ZM784.5 625.4L795.5 625.4L793.3 634.1L782.2 634.1ZM806.5 625.4L817.5 625.4L815.7 634.1L804.5 634.1ZM748.7 634.1L759.8 634.1L757.0 643.0L745.6 643.0ZM771.0 634.1L782.2 634.1L779.7 643.0L768.4 643.0ZM793.3 634.1L804.5 634.1L802.4 643.0L791.1 643.0ZM815.7 634.1L826.8 634.1L825.1 643.0L813.8 643.0ZM734.3 643.0L745.6 643.0L742.5 652.2L731.0 652.2ZM757.0 643.0L768.4 643.0L765.6 652.3L754.1 652.3ZM779.7 643.0L791.1 643.0L788.7 652.3L777.2 652.3ZM802.4 643.0L813.8 643.0L811.8 652.3L800.3 652.3ZM742.5 652.2L754.1 652.3L751.0 661.8L739.3 661.8ZM765.6 652.3L777.2 652.3L774.5 661.8L762.8 661.8ZM788.7 652.3L800.3 652.3L798.0 661.9L786.3 661.9ZM811.8 652.3L823.4 652.3L821.5 661.9L809.8 661.9ZM917.0 593.6L927.3 593.6L927.3 601.2L916.9 601.2ZM937.7 593.6L948.0 593.6L948.3 601.2L937.8 601.2ZM958.3 593.6L968.6 593.6L969.2 601.2L958.8 601.2ZM978.9 593.6L989.2 593.6L990.2 601.2L979.7 601.2ZM927.3 601.2L937.8 601.2L938.0 609.0L927.3 609.0ZM948.3 601.2L958.8 601.2L959.3 609.1L948.6 609.1ZM969.2 601.2L979.7 601.2L980.5 609.1L969.9 609.1ZM990.2 601.2L1000.7 601.2L1001.8 609.1L991.2 609.1ZM916.7 609.0L927.3 609.0L927.3 617.1L916.5 617.1ZM938.0 609.0L948.6 609.1L949.0 617.2L938.2 617.2ZM959.3 609.1L969.9 609.1L970.6 617.2L959.8 617.2ZM980.5 609.1L991.2 609.1L992.2 617.2L981.4 617.2ZM927.3 617.1L938.2 617.2L938.3 625.5L927.3 625.5ZM949.0 617.2L959.8 617.2L960.3 625.5L949.3 625.5ZM970.6 617.2L981.4 617.2L982.3 625.6L971.3 625.5ZM992.2 617.2L1003.0 617.2L1004.3 625.6L993.3 625.6ZM916.4 625.5L927.3 625.5L927.3 634.2L916.2 634.2ZM938.3 625.5L949.3 625.5L949.7 634.2L938.5 634.2ZM960.3 625.5L971.3 625.5L972.0 634.2L960.9 634.2ZM982.3 625.6L993.3 625.6L994.4 634.2L983.2 634.2ZM927.3 634.2L938.5 634.2L938.7 643.1L927.3 643.1ZM949.7 634.2L960.9 634.2L961.4 643.1L950.1 643.1ZM972.0 634.2L983.2 634.2L984.2 643.2L972.8 643.2ZM994.4 634.2L1005.6 634.2L1006.9 643.2L995.5 643.2ZM916.0 643.1L927.3 643.1L927.4 652.4L915.8 652.4ZM938.7 643.1L950.1 643.1L950.5 652.4L938.9 652.4ZM961.4 643.1L972.8 643.2L973.6 652.4L962.0 652.4ZM984.2 643.2L995.5 643.2L996.7 652.4L985.1 652.4ZM927.4 652.4L938.9 652.4L939.1 662.0L927.4 662.0ZM950.5 652.4L962.0 652.4L962.6 662.0L950.9 662.0ZM973.6 652.4L985.1 652.4L986.2 662.0L974.4 662.0ZM996.7 652.4L1008.3 652.4L1009.7 662.0L997.9 662.0ZM1082.1 593.7L1092.4 593.7L1095.0 601.3L1084.5 601.3ZM1102.7 593.7L1113.0 593.7L1115.9 601.3L1105.4 601.3ZM1123.3 593.7L1133.7 593.7L1136.9 601.3L1126.4 601.3ZM1144.0 593.7L1154.3 593.7L1157.9 601.3L1147.4 601.3ZM1095.0 601.3L1105.4 601.3L1108.3 609.2L1097.6 609.1ZM1115.9 601.3L1126.4 601.3L1129.6 609.2L1118.9 609.2ZM1136.9 601.3L1147.4 601.3L1150.9 609.2L1140.2 609.2ZM1157.9 601.3L1168.3 601.3L1172.2 609.2L1161.5 609.2ZM1087.0 609.1L1097.6 609.1L1100.4 617.3L1089.6 617.3ZM1108.3 609.2L1118.9 609.2L1122.0 617.3L1111.2 617.3ZM1129.6 609.2L1140.2 609.2L1143.7 617.3L1132.8 617.3ZM1150.9 609.2L1161.5 609.2L1165.3 617.3L1154.5 617.3ZM1100.4 617.3L1111.2 617.3L1114.2 625.6L1103.2 625.6ZM1122.0 617.3L1132.8 617.3L1136.2 625.7L1125.2 625.7ZM1143.7 617.3L1154.5 617.3L1158.2 625.7L1147.2 625.7ZM1165.3 617.3L1176.1 617.3L1180.2 625.7L1169.2 625.7ZM1092.2 625.6L1103.2 625.6L1106.2 634.3L1095.0 634.3ZM1114.2 625.6L1125.2 625.7L1128.5 634.3L1117.3 634.3ZM1136.2 625.7L1147.2 625.7L1150.9 634.3L1139.7 634.3ZM1158.2 625.7L1169.2 625.7L1173.3 634.3L1162.1 634.3ZM1106.2 634.3L1117.3 634.3L1120.6 643.3L1109.2 643.2ZM1128.5 634.3L1139.7 634.3L1143.3 643.3L1131.9 643.3ZM1150.9 634.3L1162.1 634.3L1166.1 643.3L1154.7 643.3ZM1173.3 634.3L1184.4 634.3L1188.8 643.3L1177.4 643.3ZM1097.8 643.2L1109.2 643.2L1112.3 652.5L1100.8 652.5ZM1120.6 643.3L1131.9 643.3L1135.5 652.5L1123.9 652.5ZM1143.3 643.3L1154.7 643.3L1158.6 652.5L1147.1 652.5ZM1166.1 643.3L1177.4 643.3L1181.8 652.6L1170.2 652.6ZM1112.3 652.5L1123.9 652.5L1127.4 662.1L1115.6 662.1ZM1135.5 652.5L1147.1 652.5L1150.9 662.1L1139.1 662.1ZM1158.6 652.5L1170.2 652.6L1174.5 662.1L1162.7 662.1ZM1181.8 652.6L1193.3 652.6L1198.0 662.2L1186.2 662.2ZM1247.2 593.8L1257.5 593.8L1262.7 601.4L1252.2 601.4ZM1267.9 593.8L1278.2 593.8L1283.7 601.4L1273.2 601.4ZM1288.5 593.8L1298.8 593.8L1304.7 601.4L1294.2 601.4ZM1309.2 593.8L1319.5 593.8L1325.6 601.4L1315.2 601.4ZM1262.7 601.4L1273.2 601.4L1278.7 609.3L1268.0 609.3ZM1283.7 601.4L1294.2 601.4L1300.0 609.3L1289.4 609.3ZM1304.7 601.4L1315.2 601.4L1321.3 609.3L1310.7 609.3ZM1325.6 601.4L1336.1 601.4L1342.6 609.3L1332.0 609.3ZM1257.4 609.2L1268.0 609.3L1273.6 617.4L1262.7 617.4ZM1278.7 609.3L1289.4 609.3L1295.2 617.4L1284.4 617.4ZM1300.0 609.3L1310.7 609.3L1316.9 617.4L1306.0 617.4ZM1321.3 609.3L1332.0 609.3L1338.5 617.4L1327.7 617.4ZM1273.6 617.4L1284.4 617.4L1290.3 625.8L1279.2 625.8ZM1295.2 617.4L1306.0 617.4L1312.3 625.8L1301.3 625.8ZM1316.9 617.4L1327.7 617.4L1334.3 625.8L1323.3 625.8ZM1338.5 617.4L1349.4 617.4L1356.3 625.8L1345.3 625.8ZM1268.2 625.7L1279.2 625.8L1285.1 634.4L1273.9 634.4ZM1290.3 625.8L1301.3 625.8L1307.5 634.4L1296.3 634.4ZM1312.3 625.8L1323.3 625.8L1329.9 634.4L1318.7 634.4ZM1334.3 625.8L1345.3 625.8L1352.3 634.5L1341.1 634.5ZM1285.1 634.4L1296.3 634.4L1302.6 643.4L1291.2 643.4ZM1307.5 634.4L1318.7 634.4L1325.4 643.4L1314.0 643.4ZM1329.9 634.4L1341.1 634.5L1348.1 643.4L1336.7 643.4ZM1352.3 634.5L1363.5 634.5L1370.9 643.4L1359.5 643.4ZM1279.8 643.4L1291.2 643.4L1297.5 652.6L1285.9 652.6ZM1302.6 643.4L1314.0 643.4L1320.7 652.7L1309.1 652.7ZM1325.4 643.4L1336.7 643.4L1343.8 652.7L1332.2 652.7ZM1348.1 643.4L1359.5 643.4L1367.0 652.7L1355.4 652.7ZM1297.5 652.6L1309.1 652.7L1315.8 662.2L1304.0 662.2ZM1320.7 652.7L1332.2 652.7L1339.4 662.3L1327.6 662.3ZM1343.8 652.7L1355.4 652.7L1362.9 662.3L1351.1 662.3ZM1367.0 652.7L1378.6 652.7L1386.5 662.3L1374.7 662.3Z" fill="#30333e"/>
<polygon points="727.0,337.8 1118.0,337.8 1386.5,662.3 445.7,661.6" fill="url(#flfog)"/>
<defs><linearGradient id="dome2" x1="0" y1="116" x2="0" y2="158" gradientUnits="userSpaceOnUse"><stop offset="0" stop-color="#363636"/><stop offset=".55" stop-color="#5a5a5a"/><stop offset="1" stop-color="#7a7a7a"/></linearGradient></defs>
<path d="M857.600 158.600C855.500 131 874 116.100 898.500 116.100C923 116.100 942.500 131 940.600 157.600C931 148.500 916 145.700 898.500 145.700C881 145.700 867 149.500 857.600 158.600Z" fill="url(#dome2)"/>
<path d="M858 158C856 131 874.500 116.800 898.500 116.800C922.500 116.800 942 131 940.200 157" fill="none" stroke="#f2f2f2" stroke-width="1.500"/>
<g stroke="#8e8e8e" stroke-width="1.700" fill="none" stroke-linecap="round"><path d="M886.100 122.900l4.100 11.500M912.600 122.900l-4.100 11.500M866.500 139.800l9.800 6.200M932 138.800l-10 6.700"/></g>
<g fill="#8e8e8e"><path d="M886.300 132.200l4.600 4.300 1.800-6.200zM912.400 132.200l-4.600 4.300-1.800-6.200zM872.500 147l6 .5-2.800-5.300zM925.800 146.200l-6 .4 3-5.200z"/></g>
<path d="M816.600 116.600l5.500 3.300.8-1.200 1.800 3.400-3.900-.2.700-1.100-5.500-3.300z" fill="#f6f6f6"/>
<defs><radialGradient id="chr" cx=".5" cy=".5" r=".5"><stop offset="0" stop-color="#7c7c7c"/><stop offset=".7" stop-color="#858585"/><stop offset=".88" stop-color="#2c2c2c"/><stop offset="1" stop-color="#161616"/></radialGradient></defs>
<circle cx="914.400" cy="301.800" r="14.300" fill="url(#chr)"/>
<path d="M903 296c2-6 8-9.500 13-9 -3 2.500-4 5-3 7.500 -4-.5-7 .5-10 1.500z" fill="#f4f4f4"/><path d="M920 289c4 1.500 7 5 7.500 9 -2-1-4-1-6 0 0-3.500-.5-6.500-1.500-9z" fill="#dcdcdc"/>
<path d="M905 305c1-5 5-9 11-9.500 4-.3 6 2 5.500 5-2.500 0-5 1-6.500 3.500 -1 2-3 4.500-6 5.500 -2.500-.5-4-2-4-4.500z" fill="#0c0c10"/>
<path d="M913 305c2-2.500 5-3.500 8.500-3 3 .5 5 0 6.500-1 -.5 6-4.500 11-10 12.500 -3-.5-5-2-6.500-4 1-1.500 1-3 1.500-4.500z" fill="#fafafa"/><path d="M910 299c1.500-2 4-3 6-2.500 -1.500 1.500-2 3-1.500 4.500 -1.500-.5-3-1-4.500-2z" fill="#e8e8e8"/>
<circle cx="914.400" cy="301.800" r="13.800" fill="none" stroke="#2a2a2a" stroke-width="1.200" opacity=".8"/>
<ellipse cx="913.900" cy="399" rx="6.300" ry="3" fill="#d8d8d8"/><path d="M906.800 369.400l1.500-.4 4.800 29.500-1.900.4z" fill="#bdbdbd"/><path d="M907.200 369.200l12 3.800-8.200 7z" fill="#a9a9a9"/>
<path d="M913.500 384c2.500-3 14-3.500 17.500-1s4.500 11 3 14c-1 2-4 1.500-5-1s-2.500-3.500-5-3-3.500 3-6 3c-3.500 0-6.500-9-4.500-12z" fill="#c9c9c9"/><path d="M914.500 384.500c3-2 12-2.500 15.500-.5 1 .8 2 2.500 2.500 4.500-5-2-14-2-18.500 0-.2-1.500 0-3 .5-4z" fill="#e2e2e2"/>
<path d="M920.500 371v9.500" stroke="#6fa8ec" stroke-width="2"/><path d="M917.600 372.500l2.900-4 2.900 4z" fill="#6fa8ec"/><path d="M916.500 387.500h3.500" stroke="#5a8fe0" stroke-width="1.300"/><circle cx="926.500" cy="388.500" r="1.600" fill="none" stroke="#8a8a8a" stroke-width=".8"/>
<path d="M353 645.500V623" stroke="#1010ff" stroke-width="2"/><path d="M352 645H377.200" stroke="#10ff10" stroke-width="2"/>
<text x="355.400" y="626.800" font-size="12" fill="#2020ff" font-family="Liberation Sans,sans-serif">Z</text><text x="355.200" y="638.900" font-size="12" fill="#ff1a1a" font-family="Liberation Sans,sans-serif">X</text><text x="379.200" y="648.900" font-size="12" fill="#18f018" font-family="Liberation Sans,sans-serif">Y</text>
<circle cx="343.200" cy="654.400" r="6.300" fill="#c4c6dc" opacity=".7"/><circle cx="343.200" cy="654.400" r="4.900" fill="#9898a6"/><text x="340.700" y="657.600" font-size="8.500" font-weight="bold" fill="#c8c8d6" font-family="Liberation Sans,sans-serif">?</text>
</svg>
<div class="a" style="left:0;top:0;width:1207px;height:560px;border:1px solid #e4a512;box-shadow:inset 0 0 0 1px rgba(228,165,18,.35)"></div>
<svg class="a" style="left:-2px;top:-2px" width="10" height="10"><path d="M0 0h10L0 10z" fill="#d2ad2c"/></svg>
<div class="t" style="left:1013px;top:539px;font-size:12px;color:#f2f2f2;text-shadow:1px 1px 0 #222">Level:</div>
<div class="t" style="left:1051px;top:539px;font-size:12px;color:#a8f4f4;text-shadow:1px 1px 0 #222" id="lvl">MainMenuMap (Persistent)</div>
<div class="a" style="left:-323px;top:-115px;width:0;height:0">
<div class="a" style="left:327px;width:22px;border:1px solid #46464e;background:rgba(203,203,212,.92);border-radius:6px;height:26px;top:119px;"></div>
<svg class="a" style="left:334px;top:130px" width="8" height="5"><path d="M0 0h8L4 4.200z" fill="#1c1c1c"/></svg>
<div class="a" style="left:353px;width:95px;border:1px solid #46464e;background:rgba(203,203,212,.92);border-radius:6px;height:26px;top:119px;"></div>
<svg class="a" style="left:359px;top:124px" width="18" height="16" viewBox="0 0 18 16"><path d="M1 9.500l5-4.500 5.500-1.500 5 1.500-3 3.500-6 4-4 .5z" fill="#4f94f0"/><path d="M6 5l5.500-1.500 3 1-5 2.500z" fill="#9cc8ff"/><path d="M1 9.500l2.500 3 4-.5-2-3z" fill="#2f6fd8"/></svg>
<div class="t b" id=vpP style="left:379.5px;top:125.5px;font-size:11.6px;letter-spacing:-0.33px;color:#26262a">Perspective</div>
<div class="a" style="left:452px;width:47px;border:1px solid #46464e;background:rgba(203,203,212,.92);border-radius:6px;height:26px;top:119px;"></div>
<svg class="a" style="left:458px;top:123px" width="18" height="18" viewBox="0 0 18 18"><path d="M1.500 4.500L9.500 1l7 3-7.500 3.500z" fill="#8fb4d8"/><path d="M1.500 4.500L9 7.500 8.500 17 2.500 12.500z" fill="#3d5fd0"/><path d="M9 7.500l7.500-3.500-.8 8.500L8.500 17z" fill="#5a8cf0"/></svg>
<div class="t b" id=vpL style="left:478.3px;top:125.5px;font-size:11.6px;letter-spacing:-0.1px;color:#26262a">Lit</div>
<div class="a" style="left:503px;width:44px;border:1px solid #46464e;background:rgba(203,203,212,.92);border-radius:6px;height:26px;top:119px;"></div>
<div class="t b" id=vpS style="left:510.3px;top:125.5px;font-size:11.6px;letter-spacing:-0.35px;color:#26262a">Show</div>
<div class="a" style="left:1127px;width:72px;border:1px solid #46464e;background:rgba(203,203,212,.92);border-radius:6px;height:26px;top:119px;"></div>
<div class="a" style="left:1128px;top:120px;width:23px;height:24px;background:#bf8838;border-radius:5px 0 0 5px"></div>
<svg class="a" style="left:1129px;top:122px" width="20" height="20" viewBox="0 0 20 20"><g fill="#2a2015"><path d="M10 1l3 3.500h-6z M10 19l3-3.500h-6z M1 10l3.500-3v6z M19 10l-3.500-3v6z"/><path d="M9.200 4h1.600v12h-1.600z M4 9.200h12v1.600h-12z"/></g><path d="M6.500 8l3.500-1.500 3.500 1.500v4l-3.500 2-3.500-2z" fill="#7fa0e0"/><path d="M6.500 8l3.500 1.500 3.500-1.500-3.500-1.500z" fill="#c4d6f4"/></svg>
<svg class="a" style="left:1153px;top:122px" width="20" height="20" viewBox="0 0 20 20"><path d="M5.500 4.500a7 7 0 1 0 9.500.5" fill="none" stroke="#2a2a2e" stroke-width="1.700"/><path d="M12.500 3l4.500 1-2.500 3.500z" fill="#2a2a2e"/><path d="M6.500 8l3.500-1.500 3.500 1.500v4l-3.500 2-3.500-2z" fill="#6f95e4"/><path d="M6.500 8l3.500 1.500 3.500-1.500-3.500-1.500z" fill="#bcd2f6"/></svg>
<svg class="a" style="left:1177px;top:122px" width="20" height="20" viewBox="0 0 20 20"><path d="M3 17L17 3" stroke="#2a2a2e" stroke-width="1.800"/><path d="M18.500 1.500l-6 .8 5.200 5.200z M1.500 18.500l6-.8-5.200-5.200z" fill="#2a2a2e"/><path d="M6.500 8l3.500-1.500 3.500 1.500v4l-3.500 2-3.500-2z" fill="#6f95e4"/><path d="M6.500 8l3.500 1.500 3.500-1.500-3.500-1.500z" fill="#bcd2f6"/></svg>
<div class="a" style="left:1202px;width:24px;border:1px solid #46464e;background:rgba(203,203,212,.92);border-radius:6px;height:26px;top:119px;"></div>
<svg class="a" style="left:1205px;top:123px" width="18" height="18" viewBox="0 0 18 18"><circle cx="9" cy="9" r="7.600" fill="none" stroke="#38383e" stroke-width="1.300"/><path d="M4 5c1.500-2 4-2.500 5-2l-1 2.500 1.500 1.500-1 2.500 1 2-1 3.500c-1-.5-1.500-2.500-1.500-4l-2.500-2z M11 4l3 .5 1.500 3-1.500 3-2-1.500-.5-2.500z M12 12l1.500-.5-.5 2.500z" fill="#38383e"/></svg>
<div class="a" style="left:1229px;width:82px;border:1px solid #46464e;background:rgba(203,203,212,.92);border-radius:6px;height:26px;top:119px;"></div>
<svg class="a" style="left:1232px;top:121px" width="20" height="22" viewBox="0 0 20 22"><path d="M2 9.500c4 .5 8 2.500 10 6" fill="none" stroke="#2e2e34" stroke-width="1.200"/><path d="M5 9V2M3.500 3.800L5 2l1.500 1.800" fill="none" stroke="#8a8a94" stroke-width=".9"/><path d="M9 10.500L11 2.500M9.300 4.200L11 2.500l1 2" fill="none" stroke="#8a8a94" stroke-width=".9"/><path d="M10.500 13.500L16 6.500M13.200 6.800L16 6.500l-.2 2.800" fill="none" stroke="#2e2e34" stroke-width="1.100"/></svg>
<svg class="a" style="left:1238.5px;top:138.5px" width="5" height="3"><path d="M0 0h5L2.500 2.500z" fill="#222"/></svg>
<div class="a" style="left:1253px;top:120px;width:1px;height:24px;background:#46464e"></div>
<div class="a" style="left:1254px;top:120px;width:24px;height:24px;background:#bf8838;border-radius:0"></div>
<div class="a" style="left:1278px;top:120px;width:1px;height:24px;background:#46464e"></div>
<svg class="a" style="left:1259px;top:125px" width="14" height="14" viewBox="0 0 14 14"><path d="M.6.600h12.800v12.800H.6zM3.800.600v12.800M7 .600v12.800M10.200.600v12.800M.6 3.800h12.800M.6 7h12.800M.6 10.200h12.800" fill="none" stroke="#2a2015" stroke-width="1.200"/></svg>
<div class="t"  style="left:1288px;top:123px;font-size:12.5px;letter-spacing:0px;color:#26262a">10</div>
<svg class="a" style="left:1292.5px;top:138.5px" width="5" height="3"><path d="M0 0h5L2.500 2.500z" fill="#222"/></svg>
<div class="a" style="left:1314px;width:62px;border:1px solid #46464e;background:rgba(203,203,212,.92);border-radius:6px;height:26px;top:119px;"></div>
<div class="a" style="left:1315px;top:120px;width:23px;height:24px;background:#bf8838;border-radius:5px 0 0 5px"></div>
<div class="a" style="left:1338px;top:120px;width:1px;height:24px;background:#46464e"></div>
<svg class="a" style="left:1317px;top:122px" width="20" height="20" viewBox="0 0 20 20"><path d="M2.500 16.500L9.500 3.500 16 16.500z" fill="none" stroke="#2a2015" stroke-width="1.200"/><path d="M10.500 5.500c3 2 4.500 5 4.800 8.500" fill="none" stroke="#2a2015" stroke-width="1"/><path d="M9.800 4.200l2.600.9-1.800 1.500z M16.300 15.500l-2.400-1.200 2-.9z" fill="#2a2015"/></svg>
<div class="t"  style="left:1349px;top:123px;font-size:12.5px;letter-spacing:0px;color:#26262a">10°</div>
<svg class="a" style="left:1354.5px;top:138.5px" width="5" height="3"><path d="M0 0h5L2.500 2.500z" fill="#222"/></svg>
<div class="a" style="left:1382px;width:68px;border:1px solid #46464e;background:rgba(203,203,212,.92);border-radius:6px;height:26px;top:119px;"></div>
<div class="a" style="left:1383px;top:120px;width:23px;height:24px;background:#bf8838;border-radius:5px 0 0 5px"></div>
<div class="a" style="left:1406px;top:120px;width:1px;height:24px;background:#46464e"></div>
<svg class="a" style="left:1386px;top:123px" width="18" height="18" viewBox="0 0 18 18"><path d="M5.500 12.500L13 5" stroke="#2a2015" stroke-width="1.900"/><path d="M15 3l-6.200.8 5.400 5.400z" fill="#2a2015"/><rect x="2.500" y="12.500" width="3.200" height="3.200" fill="#2a2015"/></svg>
<div class="t"  style="left:1416px;top:123px;font-size:12.5px;letter-spacing:0px;color:#26262a">0.25</div>
<svg class="a" style="left:1425.5px;top:138.5px" width="5" height="3"><path d="M0 0h5L2.500 2.500z" fill="#222"/></svg>
<div class="a" style="left:1453px;width:49px;border:1px solid #46464e;background:rgba(203,203,212,.92);border-radius:6px;height:26px;top:119px;"></div>
<svg class="a" style="left:1461px;top:124px" width="20" height="16" viewBox="0 0 20 16"><g fill="#38383e"><circle cx="9.500" cy="4.500" r="2.600"/><circle cx="14.500" cy="4.500" r="2.600"/><path d="M7 6.500h10v7h-10z M17 9l2.500-2v7l-2.500-2z"/></g><path d="M1 5h6M2.500 8h5M1.500 11h6" stroke="#38383e" stroke-width="1.100"/></svg>
<div class="t"  style="left:1486px;top:123px;font-size:12.5px;letter-spacing:0px;color:#26262a">4</div>
<svg class="a" style="left:1487.5px;top:138.5px" width="5" height="3"><path d="M0 0h5L2.500 2.500z" fill="#222"/></svg>
<svg class="a" style="left:1511px;top:126px" width="12" height="12" viewBox="0 0 12 12"><path d="M3 .800h8.200v8.200" fill="none" stroke="#f4f4f4" stroke-width="1.200"/><rect x=".8" y="3" width="8.200" height="8.200" fill="#d0d0d8" stroke="#f4f4f4" stroke-width="1.200"/><rect x="3.200" y="5.400" width="3.400" height="3.400" fill="none" stroke="#3a3a40" stroke-width="1"/></svg>
</div>
</div>
<!-- WORLD OUTLINER -->
<div class="tab" style="left:1541px;top:45px;width:150px;height:22px;background:#616161"></div>
<svg class="a" style="left:1547px;top:47px" width="18" height="17" viewBox="0 0 18 17"><g stroke="#e6eef8" stroke-width="1.700"><path d="M5 2.500h11M5 6.500h11M5 10.500h11M5 14.500h11"/></g><g fill="#5b8fe0"><rect x="1.500" y="1.500" width="2" height="2"/><rect x="1.500" y="5.500" width="2" height="2"/><rect x="1.500" y="9.500" width="2" height="2"/><rect x="1.500" y="13.500" width="2" height="2"/></g></svg>
<div class="t sh" style="left:1569px;top:49px;font-size:12px;color:#e8e8e8;letter-spacing:0" id="woT">World Outliner</div>
<svg class="a" style="left:1674px;top:52px" width="8" height="8" viewBox="0 0 8 8"><path d="M1 1l6 6M7 1l-6 6" stroke="#8f8f8f" stroke-width="1.100"/></svg>
<div class="a" style="left:1537px;top:66px;width:383px;height:256px;background:#5f5f5f;border-radius:0 0 0 3px"></div>
<div class="a" style="left:1539px;top:68px;width:379px;height:252px;background:#3e3e3e;border-radius:4px"></div>
<div class="srch" style="left:1545px;top:76px;width:339px;height:18px"><span>Search...</span></div>
<svg class="a" style="left:1867px;top:77px" width="17" height="16" viewBox="0 0 17 16"><circle cx="9.800" cy="6.300" r="4.500" fill="none" stroke="#0c0c0c" stroke-width="2.300"/><path d="M6.300 10L2.600 13.600" stroke="#0c0c0c" stroke-width="3.100" stroke-linecap="round"/></svg>
<svg class="a" style="left:1890px;top:76px" width="20" height="16" viewBox="0 0 20 16"><path d="M7 3.500l2-1.500h4l1 1h4.500v9.500H7z" fill="#7a92d6"/><path d="M7 5h11.500v7.500H7z" fill="#9db2ea"/><path d="M1.500 9.500h7M5 6v7" stroke="#fff" stroke-width="2"/></svg>
<div class="a" style="left:1545px;top:99px;width:367px;height:23px;background:linear-gradient(180deg,#232323,#161616);border:1px solid #141414"></div>
<div class="a" style="left:1560px;top:100px;width:1px;height:21px;background:#2e2e2e"></div>
<div class="a" style="left:1810px;top:100px;width:1px;height:21px;background:#2e2e2e"></div>
<div class="t" style="left:1565.500px;top:104px;font-size:12px;color:#ededed" id="woL">Label</div>
<div class="t" style="left:1816px;top:104px;font-size:12px;color:#ededed">Type</div>
<svg class="a" style="left:1681px;top:101px" width="9" height="5"><path d="M0 4.500h9L4.500 0z" fill="#e8e8e8"/></svg>
<svg class="a" style="left:1900px;top:112px" width="9" height="8"><path d="M0 0h9v1.200H0z M.5 3h8L4.500 7.500z" fill="#8a8a8a"/></svg>
<div class="a" style="left:1545px;top:122px;width:367px;height:150px;overflow:hidden">
</div>
<svg class="a" style="left:1545px;top:125px" width="16" height="11" viewBox="0 0 16 11"><path d="M.5 5.500C3 1.500 6 .700 8 .700s5 .8 7.500 4.800C13 9.500 10 10.300 8 10.300S3 9.500.5 5.500z" fill="#dfe6f6" stroke="#4f66ae" stroke-width="1.300"/><circle cx="8" cy="5.300" r="3.200" fill="#6a82c8"/><circle cx="8" cy="5.500" r="1.600" fill="#10142c"/><ellipse cx="7.800" cy="3.600" rx="1.500" ry=".8" fill="#eef2ff"/></svg>
<svg class="a" style="left:1567px;top:127px" width="8" height="8"><path d="M7.500 0v7.500H0z" fill="#b4b4b4"/></svg>
<svg class="a" style="left:1576px;top:121px" width="19" height="19" viewBox="0 0 17 17"><path d="M1 8.500L7 5l3 1.500 2.500-5 3.500 8.500L8.500 15.500z" fill="#d8d8d8"/><path d="M4 2l2.500 4.500L4.500 8.500 2.500 6z" fill="#b8b8b8"/><path d="M1 8.500l7.500 7v-3l-5-4z" fill="#9a9a9a"/><path d="M7 8l3.500-1 2 2.500-3.500 2z" fill="#888"/></svg>
<div class="t" style="left:1601px;top:125px;font-size:12px;color:#e2e2e2" id="wo_world">MainMenuMap (Editor)</div>
<div class="t" style="left:1811.500px;top:125px;font-size:12px;color:#8c8c8c;max-width:100px;overflow:hidden">World</div>
<svg class="a" style="left:1545px;top:143px" width="16" height="11" viewBox="0 0 16 11"><path d="M.5 5.500C3 1.500 6 .700 8 .700s5 .8 7.500 4.800C13 9.500 10 10.300 8 10.300S3 9.500.5 5.500z" fill="#dfe6f6" stroke="#4f66ae" stroke-width="1.300"/><circle cx="8" cy="5.300" r="3.200" fill="#6a82c8"/><circle cx="8" cy="5.500" r="1.600" fill="#10142c"/><ellipse cx="7.800" cy="3.600" rx="1.500" ry=".8" fill="#eef2ff"/></svg>
<svg class="a" style="left:1590px;top:141px" width="17" height="17" viewBox="0 0 17 17"><circle cx="3.500" cy="3.500" r="2.600" fill="#ff8a1c"/><path d="M1 13.500c1-2 3-2 3.500-1 .5-3 3-5 5-5s3 1 3.500 2.500c1.500-.5 3 .5 3 2s-1 2-2 2z" fill="#e8e8e8"/><path d="M9 5.500c1-1.500 3.500-1.500 4 0 1 0 1.500.5 1.500 1.200H8.500c0-.6.200-1 .5-1.200z" fill="#fff"/><path d="M4 9l5 4.500" stroke="#222" stroke-width="1.200"/></svg>
<div class="t" style="left:1613px;top:143px;font-size:12px;color:#e2e2e2" id="wo_fog">Atmospheric Fog</div>
<div class="t" style="left:1811.500px;top:143px;font-size:12px;color:#8c8c8c;max-width:100px;overflow:hidden">AtmosphericFog</div>
<svg class="a" style="left:1545px;top:161px" width="16" height="11" viewBox="0 0 16 11"><path d="M.5 5.500C3 1.500 6 .700 8 .700s5 .8 7.500 4.800C13 9.500 10 10.300 8 10.300S3 9.500.5 5.500z" fill="#dfe6f6" stroke="#4f66ae" stroke-width="1.300"/><circle cx="8" cy="5.300" r="3.200" fill="#6a82c8"/><circle cx="8" cy="5.500" r="1.600" fill="#10142c"/><ellipse cx="7.800" cy="3.600" rx="1.500" ry=".8" fill="#eef2ff"/></svg>
<svg class="a" style="left:1590px;top:159px" width="17" height="17" viewBox="0 0 17 17"><path d="M2 8l6.500-6 6 6h-2v7H10V10H7v5H4V8z" fill="#cfcfcf"/><path d="M8.500 2l6 6h-2v7l-1.500-1V7.500z" fill="#8d8d8d"/></svg>
<div class="t" style="left:1613px;top:161px;font-size:12px;color:#e2e2e2" id="wo_floor">Floor</div>
<div class="t" style="left:1811.500px;top:161px;font-size:12px;color:#8c8c8c;max-width:100px;overflow:hidden">StaticMeshActor</div>
<svg class="a" style="left:1545px;top:179px" width="16" height="11" viewBox="0 0 16 11"><path d="M.5 5.500C3 1.500 6 .700 8 .700s5 .8 7.500 4.800C13 9.500 10 10.300 8 10.300S3 9.500.5 5.500z" fill="#dfe6f6" stroke="#4f66ae" stroke-width="1.300"/><circle cx="8" cy="5.300" r="3.200" fill="#6a82c8"/><circle cx="8" cy="5.500" r="1.600" fill="#10142c"/><ellipse cx="7.800" cy="3.600" rx="1.500" ry=".8" fill="#eef2ff"/></svg>
<svg class="a" style="left:1590px;top:177px" width="17" height="17" viewBox="0 0 17 17"><circle cx="3" cy="3" r="2.500" fill="#ffd21c"/><circle cx="10" cy="8" r="2.800" fill="#f0f0f0"/><g stroke="#f0f0f0" stroke-width="1.200"><path d="M10 2v2.200M10 11.800V14M4 8h2.200M13.800 8H16M5.800 3.800l1.600 1.600M12.600 10.600l1.600 1.600M14.200 3.800l-1.600 1.600M7.400 10.600l-1.600 1.600"/></g><path d="M2 13l5-4" stroke="#e8e8e8" stroke-width="1.300"/></svg>
<div class="t" style="left:1613px;top:179px;font-size:12px;color:#e2e2e2" id="wo_light">Light Source</div>
<div class="t" style="left:1811.500px;top:179px;font-size:12px;color:#8c8c8c;max-width:100px;overflow:hidden">DirectionalLight</div>
<svg class="a" style="left:1545px;top:197px" width="16" height="11" viewBox="0 0 16 11"><path d="M.5 5.500C3 1.500 6 .700 8 .700s5 .8 7.500 4.800C13 9.500 10 10.300 8 10.300S3 9.500.5 5.500z" fill="#dfe6f6" stroke="#4f66ae" stroke-width="1.300"/><circle cx="8" cy="5.300" r="3.200" fill="#6a82c8"/><circle cx="8" cy="5.500" r="1.600" fill="#10142c"/><ellipse cx="7.800" cy="3.600" rx="1.500" ry=".8" fill="#eef2ff"/></svg>
<svg class="a" style="left:1590px;top:195px" width="17" height="17" viewBox="0 0 17 17"><path d="M3.500 1.500l1-.2 2 11-1 .2z" fill="#e6e6e6"/><path d="M4 1.500l6 2-5 3.500z" fill="#d0d0d0"/><ellipse cx="6" cy="14" rx="4" ry="1.500" fill="#e8e8e8"/><path d="M7.500 8c2-1.500 6-1.500 7.500 0s2 5 1 6-2.500 0-3-1-2-1-3-.5-2 1-3 0-.5-3.500.5-4.500z" fill="#ececec"/></svg>
<div class="t" style="left:1613px;top:197px;font-size:12px;color:#e2e2e2" id="wo_pstart">Player Start</div>
<div class="t" style="left:1811.500px;top:197px;font-size:12px;color:#8c8c8c;max-width:100px;overflow:hidden">PlayerStart</div>
<svg class="a" style="left:1545px;top:215px" width="16" height="11" viewBox="0 0 16 11"><path d="M.5 5.500C3 1.500 6 .700 8 .700s5 .8 7.500 4.800C13 9.500 10 10.300 8 10.300S3 9.500.5 5.500z" fill="#dfe6f6" stroke="#4f66ae" stroke-width="1.300"/><circle cx="8" cy="5.300" r="3.200" fill="#6a82c8"/><circle cx="8" cy="5.500" r="1.600" fill="#10142c"/><ellipse cx="7.800" cy="3.600" rx="1.500" ry=".8" fill="#eef2ff"/></svg>
<svg class="a" style="left:1590px;top:213px" width="17" height="17" viewBox="0 0 17 17"><circle cx="8.500" cy="8.500" r="6" fill="url(#gS1)"/></svg>
<div class="t" style="left:1613px;top:215px;font-size:12px;color:#e2e2e2" id="wo_sphere">Sky Sphere</div>
<div class="t" style="left:1814px;top:215px;font-size:12px;color:#7fb2f4;width:98px;overflow:hidden;height:15px;border-bottom:1px dotted #7fb2f4">Edit BP_Sky_Sphere</div>
<svg class="a" style="left:1545px;top:234px" width="16" height="11" viewBox="0 0 16 11"><path d="M.5 5.500C3 1.500 6 .700 8 .700s5 .8 7.500 4.800C13 9.500 10 10.300 8 10.300S3 9.500.5 5.500z" fill="#dfe6f6" stroke="#4f66ae" stroke-width="1.300"/><circle cx="8" cy="5.300" r="3.200" fill="#6a82c8"/><circle cx="8" cy="5.500" r="1.600" fill="#10142c"/><ellipse cx="7.800" cy="3.600" rx="1.500" ry=".8" fill="#eef2ff"/></svg>
<svg class="a" style="left:1590px;top:232px" width="17" height="17" viewBox="0 0 17 17"><path d="M1.500 12.500C1.500 6.500 5 3.500 8.500 3.500s7 3 7 9c-2-2.500-12-2.500-14 0z" fill="#2a2a2a" stroke="#e8e8e8" stroke-width="1.300"/><path d="M5.500 6.500l1 3M8.500 5.500v3M11.500 6.500l-1 3M3.500 10l2 1.500M13.500 10l-2 1.500" stroke="#e8e8e8" stroke-width=".9"/></svg>
<div class="t" style="left:1613px;top:234px;font-size:12px;color:#e2e2e2" id="wo_sky">SkyLight</div>
<div class="t" style="left:1811.500px;top:234px;font-size:12px;color:#8c8c8c;max-width:100px;overflow:hidden">SkyLight</div>
<svg class="a" style="left:1545px;top:252px" width="16" height="11" viewBox="0 0 16 11"><path d="M.5 5.500C3 1.500 6 .700 8 .700s5 .8 7.500 4.800C13 9.500 10 10.300 8 10.300S3 9.500.5 5.500z" fill="#dfe6f6" stroke="#4f66ae" stroke-width="1.300"/><circle cx="8" cy="5.300" r="3.200" fill="#6a82c8"/><circle cx="8" cy="5.500" r="1.600" fill="#10142c"/><ellipse cx="7.800" cy="3.600" rx="1.500" ry=".8" fill="#eef2ff"/></svg>
<svg class="a" style="left:1590px;top:250px" width="17" height="17" viewBox="0 0 17 17"><circle cx="8" cy="8.500" r="6.200" fill="#e8e8e8"/><path d="M3.500 8.500c1-4 7-5 9.500-1-1 1-3 1-4 3s-1 3.500-2.500 3.500-3.500-2.500-3-5.500z" fill="#222"/><circle cx="7" cy="7" r="1.600" fill="#e8e8e8"/><path d="M10 11l5 3.500-1.500 1.500-4-4z" fill="#e8e8e8" stroke="#222" stroke-width=".7"/></svg>
<div class="t" style="left:1613px;top:252px;font-size:12px;color:#e2e2e2" id="wo_refl">SphereReflectionCapture</div>
<div class="t" style="left:1811.500px;top:252px;font-size:12px;color:#8c8c8c;max-width:100px;overflow:hidden">SphereReflectionC</div>
<div class="a" style="left:1545px;top:287px;width:366px;height:1px;background:#666"></div>
<div class="t" style="left:1553px;top:296px;font-size:12px;color:#e2e2e2">7 actors</div>
<svg class="a" style="left:1806px;top:297px" width="17" height="11" viewBox="0 0 16 11"><path d="M.5 5.500C3 1.500 6 .700 8 .700s5 .8 7.500 4.800C13 9.500 10 10.300 8 10.300S3 9.500.5 5.500z" fill="#e4e4e4"/><circle cx="8" cy="5.300" r="3" fill="#5a6a9c"/><circle cx="8" cy="5.300" r="1.300" fill="#222"/></svg>
<div class="t" style="left:1827px;top:296px;font-size:12px;color:#e2e2e2" id="woVO">View Options</div>
<svg class="a" style="left:1900px;top:300px" width="8" height="5"><path d="M0 0h8L4 4.500z" fill="#e2e2e2"/></svg>
<!-- DETAILS -->
<div class="tab" style="left:1541px;top:327px;width:150px;height:22px;background:#616161"></div>
<svg class="a" style="left:1547px;top:329px" width="17" height="17" viewBox="0 0 17 17"><circle cx="7" cy="7" r="4.800" fill="#cfe0f8" stroke="#6f8fd0" stroke-width="1.600"/><path d="M10.500 10.500l4.500 4.500" stroke="#d8d8d8" stroke-width="2.400" stroke-linecap="round"/></svg>
<div class="t sh" style="left:1569px;top:331px;font-size:12px;color:#e8e8e8;letter-spacing:-.2px">Details</div>
<svg class="a" style="left:1674px;top:334px" width="8" height="8" viewBox="0 0 8 8"><path d="M1 1l6 6M7 1l-6 6" stroke="#8f8f8f" stroke-width="1.100"/></svg>
<div class="a" style="left:1537px;top:348px;width:383px;height:669px;background:#606060;border-radius:0 0 3px 3px"></div>
<div class="t sh" style="left:1644px;top:375px;font-size:12px;color:#e4e4e4" id="detS">Select an object to view details.</div>
<!-- CONTENT BROWSER -->
<div class="tab" style="left:4px;top:682px;width:150px;height:22px;background:#5e5e5e;border-top:1px solid #b8962e"></div>
<div class="tab" style="left:156px;top:683px;width:149px;height:20px;background:#464646"></div>
<div class="tab" style="left:307px;top:683px;width:149px;height:20px;background:#464646"></div>
<svg class="a" style="left:10px;top:685px" width="16" height="15" viewBox="0 0 16 15"><path d="M.5 2l1-1.500h4l1 1.500h9v12H.5z" fill="#6f88d0"/><g fill="#e8ecf8"><rect x="2.500" y="4" width="3" height="2.500"/><rect x="6.500" y="4" width="3" height="2.500"/><rect x="10.500" y="4" width="3" height="2.500"/><rect x="2.500" y="7.500" width="3" height="2.500"/><rect x="6.500" y="7.500" width="3" height="2.500"/><rect x="10.500" y="7.500" width="3" height="2.500"/><rect x="2.500" y="11" width="3" height="2.500"/><rect x="6.500" y="11" width="3" height="2.500"/></g></svg>
<svg class="a" style="left:162px;top:685px" width="14" height="16" viewBox="0 0 14 16"><path d="M.5.500h9l4 4v11H.5z" fill="#e8eefc"/><path d="M9.500.500v4h4z" fill="#9fb4e8"/><path d="M3 6l4 3.500L3 13" fill="none" stroke="#2c56c8" stroke-width="1.800"/><path d="M7.500 13h4" stroke="#2c56c8" stroke-width="1.500"/></svg>
<svg class="a" style="left:313px;top:685px" width="15" height="16" viewBox="0 0 15 16"><path d="M.5.500h14v15H.5z" fill="#e8eefc"/><path d="M3 7.500c0-2.500 2-4 4.500-4s4.500 1.500 4.500 4-2 4-4.500 4l-.5 0L4.500 13.500l.3-2.700C3.500 10 3 9 3 7.500z" fill="#1f3f8c"/></svg>
<div class="t sh" id="cbT" style="left:32px;top:686px;font-size:12px;color:#e2e2e2;letter-spacing:.03px">Content Browser</div>
<div class="t sh" id="olT" style="left:183px;top:686px;font-size:12px;color:#e2e2e2;letter-spacing:.03px">Output Log</div>
<div class="t sh" id="mlT" style="left:334px;top:686px;font-size:12px;color:#e2e2e2;letter-spacing:.03px">Message Log</div>
<svg class="a" style="left:138px;top:689px" width="8" height="8" viewBox="0 0 8 8"><path d="M1 1l6 6M7 1l-6 6" stroke="#858585" stroke-width="1.100"/></svg>
<svg class="a" style="left:289px;top:689px" width="8" height="8" viewBox="0 0 8 8"><path d="M1 1l6 6M7 1l-6 6" stroke="#858585" stroke-width="1.100"/></svg>
<svg class="a" style="left:440px;top:689px" width="8" height="8" viewBox="0 0 8 8"><path d="M1 1l6 6M7 1l-6 6" stroke="#858585" stroke-width="1.100"/></svg>
<div class="a" style="left:0;top:703px;width:1532px;height:316px;background:#5e5e5e"></div>
<div class="a" style="left:1532px;top:682px;width:5px;height:337px;background:#222"></div>
<div class="a" style="left:3px;top:705px;width:293px;height:33px;background:#3e3e3e;border-radius:3px"></div>
<div class="a" style="left:301px;top:705px;width:1229px;height:33px;background:#3e3e3e;border-radius:3px"></div>
<div class="a" style="left:5px;top:708px;width:107px;height:27px;background:linear-gradient(180deg,#52ab55,#4aa24e);border-radius:2px"></div>
<svg class="a" style="left:13px;top:714px" width="13" height="16" viewBox="0 0 13 16"><path d="M.5.500h8l4 4v11H.5z" fill="#fff"/><path d="M8.500.500v4h4z" fill="#cfe8d0"/></svg>
<div class="t b sh" id="addn" style="left:31.500px;top:714px;font-size:14px;color:#fff;letter-spacing:-.2px">Add New</div>
<svg class="a" style="left:95px;top:720px" width="8" height="5"><path d="M0 0h8L4 4.500z" fill="#fff"/></svg>
<svg class="a" style="left:126px;top:714px" width="14" height="14" viewBox="0 0 14 14"><path d="M5 0h4v5h3L7 10 2 5h3z" fill="#fff"/><path d="M.5 9v4.500h13V9h-2v2.500h-9V9z" fill="#fff"/></svg>
<div class="t b sh" id="imp" style="left:145px;top:714px;font-size:14px;color:#fff;letter-spacing:-.2px">Import</div>
<svg class="a" style="left:211px;top:715px" width="13" height="13" viewBox="0 0 13 13"><path d="M.7.700h9.600l2 2v9.600H.7z" fill="none" stroke="#fff" stroke-width="1.300"/><path d="M3 1v3.500h6V1M3 12V8h7v4" fill="none" stroke="#fff" stroke-width="1.200"/></svg>
<div class="t b sh" id="sva" style="left:229px;top:714px;font-size:14px;color:#fff;letter-spacing:.05px">Save All</div>
<svg class="a" style="left:307px;top:715px" width="14" height="13" viewBox="0 0 14 13"><path d="M7 .500L1 6.500l6 6v-4h6.500v-4H7z" fill="#fff"/></svg>
<svg class="a" style="left:327px;top:715px" width="14" height="13" viewBox="0 0 14 13"><path d="M7 .500l6 6-6 6v-4H.5v-4H7z" fill="#777"/></svg>
<div class="a" style="left:348px;top:709px;width:1px;height:25px;background:#5a5a5a"></div>
<svg class="a" style="left:357px;top:714px" width="18" height="14" viewBox="0 0 18 14"><path d="M.5 1.500h5l1.500 2h7v2H4l-2.500 7H.5z" fill="#fff"/><path d="M4.500 6.500h13l-3 7H1.500z" fill="#fff"/></svg>
<div class="t b sh" id="cbc" style="left:384px;top:714px;font-size:14px;color:#fff;letter-spacing:-.2px">Content</div>
<svg class="a" style="left:451px;top:717px" width="5" height="9"><path d="M0 0l5 4.500L0 9z" fill="#fff"/></svg>
<svg class="a" style="left:1509px;top:713px" width="15" height="16" viewBox="0 0 15 16"><path d="M1.500 8V4.500a2.800 2.800 0 0 1 5.600 0V6" fill="none" stroke="#e8e8e8" stroke-width="1.400"/><rect x="6" y="7.500" width="8" height="7.500" fill="#e8e8e8"/><rect x="9.300" y="9.500" width="1.500" height="3.500" fill="#333"/></svg>
<div class="a" style="left:3px;top:740px;width:380px;height:277px;background:#3e3e3e;border-radius:3px"></div>
<svg class="a" style="left:8px;top:746px" width="16" height="15" viewBox="0 0 16 15"><path d="M5 1.500h11M7 5.500h9M7 9.500h9M5 13.500h11" stroke="#e8e8e8" stroke-width="1.800"/><path d="M5.500 3.500v8L.5 7.500z" fill="#e8e8e8"/></svg>
<div class="srch" style="left:29px;top:744px;width:352px;height:20px"><span style="top:2px">Search Folders</span></div>
<svg class="a" style="left:362px;top:745px" width="17" height="16" viewBox="0 0 17 16"><circle cx="9.800" cy="6.300" r="4.500" fill="none" stroke="#0c0c0c" stroke-width="2.300"/><path d="M6.300 10L2.600 13.600" stroke="#0c0c0c" stroke-width="3.100" stroke-linecap="round"/></svg>
<div class="a" style="left:5px;top:767px;width:376px;height:22px;background:#8b8b8b"></div>
<svg class="a" style="left:15px;top:771px" width="18" height="15" viewBox="0 0 18 15"><path d="M1 2.500l1-1.500h5l1.500 2h8.500v11H1z" fill="#f4f4f4" stroke="#333" stroke-width=".9"/><path d="M1 5.500h16" stroke="#333" stroke-width=".7"/></svg>
<div class="t" id="trC" style="left:35.500px;top:771.200px;font-size:16.200px;letter-spacing:-.32px;color:#0c0c0c">Content</div>
<svg class="a" style="left:6px;top:794px" width="7" height="11" viewBox="0 0 7 11"><path d="M1 1l4.500 4.500L1 10z" fill="none" stroke="#c8c8c8" stroke-width="1"/></svg>
<svg class="a" style="left:15px;top:794px" width="18" height="15" viewBox="0 0 18 15"><path d="M1 2.500l1-1.500h5l1.500 2h8.500v11H1z" fill="#d8d8d8" stroke="#333" stroke-width=".9"/><rect x="2.500" y="6" width="13" height="7" fill="#3a3a3a"/><text x="3.200" y="12" font-size="6.500" font-weight="bold" fill="#eee" font-family="Liberation Sans,sans-serif">C++</text></svg>
<div class="t" id="trH" style="left:35.500px;top:793px;font-size:16.200px;letter-spacing:-.3px;color:#e0e0e0">HTMLMenuMain C++ Classes</div>
<div class="a" style="left:388px;top:740px;width:1142px;height:277px;background:#3e3e3e;border-radius:3px"></div>
<svg class="a" style="left:398px;top:747px" width="10" height="11" viewBox="0 0 10 11"><path d="M0 .500h10L6.200 5v5.500L3.800 9V5z" fill="#f0f0f0"/></svg>
<div class="t b sh" id="flt" style="left:410.500px;top:746px;font-size:11.600px;color:#f0f0f0;letter-spacing:-.25px">Filters</div>
<svg class="a" style="left:446px;top:751px" width="9" height="5"><path d="M0 0h9L4.500 5z" fill="#f0f0f0"/></svg>
<div class="srch" style="left:463px;top:744px;width:1044px;height:19px"><span style="top:2px">Search Content</span></div>
<svg class="a" style="left:1483px;top:745px" width="17" height="16" viewBox="0 0 17 16"><circle cx="9.800" cy="6.300" r="4.500" fill="none" stroke="#0c0c0c" stroke-width="2.300"/><path d="M6.300 10L2.600 13.600" stroke="#0c0c0c" stroke-width="3.100" stroke-linecap="round"/></svg>
<svg class="a" style="left:1512px;top:747px" width="12" height="12" viewBox="0 0 12 12"><path d="M.6.600h9l1.800 1.800v9H.6z" fill="none" stroke="#8a8a8a" stroke-width="1.100"/><path d="M3 .800v3h5v-3M2.800 11.200V7.500h6.400v3.700" fill="none" stroke="#8a8a8a" stroke-width="1"/></svg>
<svg class="a" style="left:396px;top:770px;box-shadow:0 1px 3px rgba(0,0,0,.7)" width="60" height="60" viewBox="0 0 60 60"><defs><linearGradient id="hg" x1="0" y1="0" x2="0" y2="1"><stop offset="0" stop-color="#c8c8c8"/><stop offset="1" stop-color="#6e6e6e"/></linearGradient><linearGradient id="nv" x1="0" y1="0" x2="0" y2="1"><stop offset="0" stop-color="#1d2846"/><stop offset="1" stop-color="#243457"/></linearGradient></defs><rect width="60" height="60" fill="url(#nv)"/><ellipse cx="29" cy="50" rx="27" ry="2.500" fill="#101828"/><path d="M17 29.500C8 22 3.500 17 3.500 11.500c0-7 10-8.500 13.500-2 3.500-6.500 13.500-5 13.500 2 0 5.500-4.500 10.500-13.500 18z" fill="url(#hg)"/><path d="M29.500 22.500l26-1-1.500 8-27 1z" fill="#ededed"/><path d="M6.500 36l49.500-2-2 8.500-50 2.500z" fill="#e6e6e6"/><rect y="57" width="60" height="3" fill="#2f5fc4"/></svg>
<svg class="a" style="left:466px;top:770px;box-shadow:0 1px 3px rgba(0,0,0,.7)" width="60" height="60" viewBox="0 0 60 60"><defs><linearGradient id="br" x1="0" y1="0" x2="0" y2="1"><stop offset="0" stop-color="#5c3e16"/><stop offset="1" stop-color="#4a3010"/></linearGradient></defs><rect width="60" height="60" fill="url(#br)"/><path d="M22 54l34-16-2 6-30 13z" fill="#241606"/><path d="M3 32l19-9 35 10-36 19z" fill="#dcdcdc"/><path d="M3 32l18 20 1 3L2.500 34z" fill="#9a9a9a"/><path d="M21 52l36-19v2.500L22 55z" fill="#bdbdbd"/><path d="M3 29l14-7 13 6-14 8z" fill="#a4a4a4"/><path d="M3 29l13 7v3L3 32z" fill="#808080"/><path d="M16 36l14-8v3l-14 8z" fill="#6e6e6e"/><path d="M8 11.500c-2 4-3.500 10-4 15l6 2 5-3c-1-5-4-11-7-14z" fill="#d4d4d4"/><path d="M30 7c-2 4-4 12-4.500 17l5.500 4 4-5c-.5-5-2-12-5-16z" fill="#c4c4c4"/><path d="M42.500 5C39 12 34 24 32.500 30l10 6 11-7C51 22 46 11 42.500 5z" fill="#e4e4e4"/><path d="M42.500 5c1 9 .5 24 0 31l11-7C51 22 46 11 42.500 5z" fill="#b4b4b4"/><rect y="57" width="60" height="3" fill="#ff9c0e"/></svg>
<div class="a" style="left:536px;top:770px;width:60px;height:60px;background:radial-gradient(circle at 50% 45%,#5e5e5e,#4a4a4a);box-shadow:0 1px 3px rgba(0,0,0,.7)"><div class="a" style="left:0;top:57px;width:60px;height:3px;background:#fff"></div></div>
<div class="t b sh" style="left:536px;width:60px;text-align:center;top:782.5px;font-size:8.500px;color:#ececec">Map Build</div>
<div class="t b sh" style="left:536px;width:60px;text-align:center;top:794.5px;font-size:8.500px;color:#ececec">Data</div>
<div class="t b sh" style="left:536px;width:60px;text-align:center;top:806.5px;font-size:8.500px;color:#ececec">Registry</div>
<div class="t" id=lb1 style="left:385.5px;width:80px;text-align:center;top:847.5px;font-size:11px;color:#b4b4b4;letter-spacing:.3px">MainMenu</div>
<div class="t"  style="left:455.5px;width:80px;text-align:center;top:840.5px;font-size:11px;color:#b4b4b4;letter-spacing:.3px">MainMenu</div>
<div class="t"  style="left:455.5px;width:80px;text-align:center;top:853.5px;font-size:11px;color:#b4b4b4;letter-spacing:.3px">Map</div>
<div class="t"  style="left:525.5px;width:80px;text-align:center;top:835.5px;font-size:11px;color:#b4b4b4;letter-spacing:.3px">MainMenu</div>
<div class="t"  style="left:525.5px;width:80px;text-align:center;top:848.5px;font-size:11px;color:#b4b4b4;letter-spacing:.3px">Map_Built</div>
<div class="t"  style="left:525.5px;width:80px;text-align:center;top:861.5px;font-size:11px;color:#b4b4b4;letter-spacing:.3px">Data</div>
<svg class="a" style="left:386px;top:866px" width="140" height="20" viewBox="386 866 140 20"><path d="M393 875.200C420 877.800 470 877.200 497 876.200C506 875.600 511 874.200 515.500 874.200" fill="none" stroke="#fb0007" stroke-width="5" stroke-linecap="round"/><path d="M392.500 874.500C400 875.800 410 876 420 876.200" fill="none" stroke="#fb0007" stroke-width="6" stroke-linecap="round"/></svg>
<div class="t" style="left:399px;top:996px;font-size:12px;color:#dcdcdc">3 items</div>
<svg class="a" style="left:1421px;top:997px" width="17" height="11" viewBox="0 0 16 11"><path d="M.5 5.500C3 1.500 6 .700 8 .700s5 .8 7.500 4.800C13 9.500 10 10.300 8 10.300S3 9.500.5 5.500z" fill="#e4e4e4"/><circle cx="8" cy="5.300" r="3" fill="#5a6a9c"/><circle cx="8" cy="5.300" r="1.300" fill="#222"/></svg>
<div class="t" id="cbVO" style="left:1442px;top:996px;font-size:12px;color:#e2e2e2">View Options</div>
<svg class="a" style="left:1515px;top:1000px" width="8" height="5"><path d="M0 0h8L4 4.500z" fill="#e2e2e2"/></svg>
</div>
<!-- desktop strip + taskbar (outside window) -->
<div class="a" style="left:1920px;top:0;width:8px;height:1027px;background:linear-gradient(180deg,#fff 0,#fff 29px,#5a5a5a 29px,#5a5a5a 56px,#1f1f1f 56px,#1f1f1f 91px,#0b0b0b 91px,#0b0b0b 121px,#fff 121px,#fff 170px,#0e1a2c 170px,#101a2b 380px,#2a3140 434px,#ff8c80 436px,#ff5c86 500px,#ff2a78 560px,#0f5a70 562px,#1a9ab8 710px,#10162a 712px,#131b33 870px,#2b3038 880px,#1f2226 1019px,#000 1019px)"></div>
<div class="a" style="left:0;top:1019px;width:1920px;height:8px;background:#020202"></div>
<div class="a" style="left:1485px;top:1019px;width:142px;height:8px;background:#2b2b2b"></div>
<div class="a" style="left:1914px;top:1019px;width:1px;height:8px;background:#7a7a7a"></div>
</body></html>
